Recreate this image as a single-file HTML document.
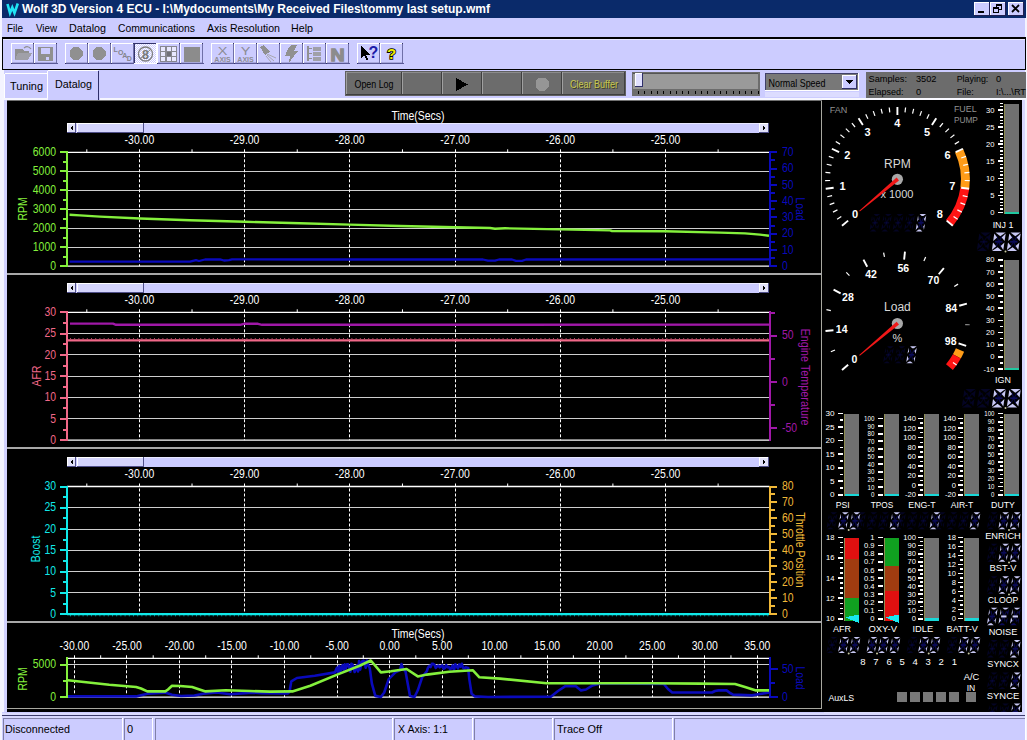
<!DOCTYPE html>
<html><head><meta charset="utf-8"><title>Wolf 3D Version 4 ECU</title>
<style>
html,body{margin:0;padding:0;background:#ccccff;overflow:hidden}
svg{display:block;font-family:'Liberation Sans', sans-serif;}
svg rect,svg polygon{shape-rendering:crispEdges}
svg .aa{shape-rendering:auto}
</style></head><body>
<svg width="1027" height="740" viewBox="0 0 1027 740">
<rect x="0" y="0" width="1027" height="740" fill="#ccccff" />
<rect x="0" y="0" width="2" height="740" fill="#f4f4ff" />
<rect x="1025" y="0" width="2" height="740" fill="#f4f4ff" />
<rect x="2" y="0" width="1024" height="18" fill="#0a2a6a" />
<path d="M7.5 4 L10 13 L12.3 7.5 L14.5 13 L17.8 3.5" fill="none" stroke="#20e4f4" stroke-width="2.6" stroke-linejoin="miter"/>
<text transform="translate(22,13)" font-size="12.5" fill="#fff" text-anchor="start" font-weight="bold" textLength="468" lengthAdjust="spacingAndGlyphs">Wolf 3D Version 4 ECU - I:\Mydocuments\My Received Files\tommy last setup.wmf</text>
<rect x="974" y="2" width="16" height="14" fill="#ccccff" />
<rect x="974" y="2" width="16" height="1" fill="#ffffff" />
<rect x="974" y="2" width="1" height="14" fill="#ffffff" />
<rect x="974" y="15" width="16" height="1" fill="#202050" />
<rect x="989" y="2" width="1" height="14" fill="#202050" />
<rect x="990" y="2" width="16" height="14" fill="#ccccff" />
<rect x="990" y="2" width="16" height="1" fill="#ffffff" />
<rect x="990" y="2" width="1" height="14" fill="#ffffff" />
<rect x="990" y="15" width="16" height="1" fill="#202050" />
<rect x="1005" y="2" width="1" height="14" fill="#202050" />
<rect x="1008" y="2" width="16" height="14" fill="#ccccff" />
<rect x="1008" y="2" width="16" height="1" fill="#ffffff" />
<rect x="1008" y="2" width="1" height="14" fill="#ffffff" />
<rect x="1008" y="15" width="16" height="1" fill="#202050" />
<rect x="1023" y="2" width="1" height="14" fill="#202050" />
<rect x="978" y="11" width="6" height="2" fill="#000" />
<rect x="996" y="4" width="6" height="2" fill="#000" />
<rect x="996" y="4" width="1" height="5" fill="#000" />
<rect x="1001" y="4" width="1" height="6" fill="#000" />
<rect x="999" y="9" width="3" height="1" fill="#000" />
<rect x="993" y="7" width="6" height="2" fill="#000" />
<rect x="993" y="7" width="1" height="6" fill="#000" />
<rect x="998" y="7" width="1" height="6" fill="#000" />
<rect x="993" y="12" width="6" height="1" fill="#000" />
<path d="M1012 5 L1019 12 M1019 5 L1012 12" fill="none" stroke="#000" stroke-width="1.8" />
<text transform="translate(7,32)" font-size="11" fill="#000" text-anchor="start" textLength="16" lengthAdjust="spacingAndGlyphs">File</text>
<text transform="translate(36,32)" font-size="11" fill="#000" text-anchor="start" textLength="21" lengthAdjust="spacingAndGlyphs">View</text>
<text transform="translate(69,32)" font-size="11" fill="#000" text-anchor="start" textLength="37" lengthAdjust="spacingAndGlyphs">Datalog</text>
<text transform="translate(118,32)" font-size="11" fill="#000" text-anchor="start" textLength="77" lengthAdjust="spacingAndGlyphs">Communications</text>
<text transform="translate(207,32)" font-size="11" fill="#000" text-anchor="start" textLength="73" lengthAdjust="spacingAndGlyphs">Axis Resolution</text>
<text transform="translate(291,32)" font-size="11" fill="#000" text-anchor="start" textLength="22" lengthAdjust="spacingAndGlyphs">Help</text>
<rect x="2" y="37" width="1024" height="33" fill="#000" />
<rect x="3" y="39" width="1022" height="30" fill="#ccccff" />
<rect x="3" y="39" width="1022" height="1" fill="#e8e8ff" />
<rect x="11" y="43" width="23" height="21" fill="#ccccff" />
<rect x="11" y="43" width="23" height="1" fill="#ffffff" />
<rect x="11" y="43" width="1" height="21" fill="#ffffff" />
<rect x="11" y="63" width="23" height="1" fill="#33336b" />
<rect x="33" y="43" width="1" height="21" fill="#33336b" />
<rect x="12" y="63" width="23" height="1" fill="#5a5a98" />
<rect x="33" y="44" width="1" height="19" fill="#7070a8" />
<rect x="12" y="62" width="21" height="1" fill="#a8a8dc" />
<rect x="34" y="43" width="23" height="21" fill="#ccccff" />
<rect x="34" y="43" width="23" height="1" fill="#ffffff" />
<rect x="34" y="43" width="1" height="21" fill="#ffffff" />
<rect x="34" y="63" width="23" height="1" fill="#33336b" />
<rect x="56" y="43" width="1" height="21" fill="#33336b" />
<rect x="35" y="63" width="23" height="1" fill="#5a5a98" />
<rect x="56" y="44" width="1" height="19" fill="#7070a8" />
<rect x="35" y="62" width="21" height="1" fill="#a8a8dc" />
<rect x="65" y="43" width="23" height="21" fill="#ccccff" />
<rect x="65" y="43" width="23" height="1" fill="#ffffff" />
<rect x="65" y="43" width="1" height="21" fill="#ffffff" />
<rect x="65" y="63" width="23" height="1" fill="#33336b" />
<rect x="87" y="43" width="1" height="21" fill="#33336b" />
<rect x="66" y="63" width="23" height="1" fill="#5a5a98" />
<rect x="87" y="44" width="1" height="19" fill="#7070a8" />
<rect x="66" y="62" width="21" height="1" fill="#a8a8dc" />
<rect x="88" y="43" width="23" height="21" fill="#ccccff" />
<rect x="88" y="43" width="23" height="1" fill="#ffffff" />
<rect x="88" y="43" width="1" height="21" fill="#ffffff" />
<rect x="88" y="63" width="23" height="1" fill="#33336b" />
<rect x="110" y="43" width="1" height="21" fill="#33336b" />
<rect x="89" y="63" width="23" height="1" fill="#5a5a98" />
<rect x="110" y="44" width="1" height="19" fill="#7070a8" />
<rect x="89" y="62" width="21" height="1" fill="#a8a8dc" />
<rect x="111" y="43" width="23" height="21" fill="#ccccff" />
<rect x="111" y="43" width="23" height="1" fill="#ffffff" />
<rect x="111" y="43" width="1" height="21" fill="#ffffff" />
<rect x="111" y="63" width="23" height="1" fill="#33336b" />
<rect x="133" y="43" width="1" height="21" fill="#33336b" />
<rect x="112" y="63" width="23" height="1" fill="#5a5a98" />
<rect x="133" y="44" width="1" height="19" fill="#7070a8" />
<rect x="112" y="62" width="21" height="1" fill="#a8a8dc" />
<pattern id="chk" width="2" height="2" patternUnits="userSpaceOnUse"><rect width="2" height="2" fill="#ccccff"/><rect width="1" height="1" fill="#fff"/><rect x="1" y="1" width="1" height="1" fill="#fff"/></pattern>
<rect x="134" y="43" width="23" height="21" fill="url(#chk)" />
<rect x="134" y="43" width="23" height="1" fill="#33336b" />
<rect x="134" y="43" width="1" height="21" fill="#33336b" />
<rect x="134" y="63" width="23" height="1" fill="#ffffff" />
<rect x="156" y="43" width="1" height="21" fill="#ffffff" />
<rect x="157" y="43" width="23" height="21" fill="#ccccff" />
<rect x="157" y="43" width="23" height="1" fill="#ffffff" />
<rect x="157" y="43" width="1" height="21" fill="#ffffff" />
<rect x="157" y="63" width="23" height="1" fill="#33336b" />
<rect x="179" y="43" width="1" height="21" fill="#33336b" />
<rect x="158" y="63" width="23" height="1" fill="#5a5a98" />
<rect x="179" y="44" width="1" height="19" fill="#7070a8" />
<rect x="158" y="62" width="21" height="1" fill="#a8a8dc" />
<rect x="180" y="43" width="23" height="21" fill="#ccccff" />
<rect x="180" y="43" width="23" height="1" fill="#ffffff" />
<rect x="180" y="43" width="1" height="21" fill="#ffffff" />
<rect x="180" y="63" width="23" height="1" fill="#33336b" />
<rect x="202" y="43" width="1" height="21" fill="#33336b" />
<rect x="181" y="63" width="23" height="1" fill="#5a5a98" />
<rect x="202" y="44" width="1" height="19" fill="#7070a8" />
<rect x="181" y="62" width="21" height="1" fill="#a8a8dc" />
<rect x="211" y="43" width="23" height="21" fill="#ccccff" />
<rect x="211" y="43" width="23" height="1" fill="#ffffff" />
<rect x="211" y="43" width="1" height="21" fill="#ffffff" />
<rect x="211" y="63" width="23" height="1" fill="#33336b" />
<rect x="233" y="43" width="1" height="21" fill="#33336b" />
<rect x="212" y="63" width="23" height="1" fill="#5a5a98" />
<rect x="233" y="44" width="1" height="19" fill="#7070a8" />
<rect x="212" y="62" width="21" height="1" fill="#a8a8dc" />
<rect x="234" y="43" width="23" height="21" fill="#ccccff" />
<rect x="234" y="43" width="23" height="1" fill="#ffffff" />
<rect x="234" y="43" width="1" height="21" fill="#ffffff" />
<rect x="234" y="63" width="23" height="1" fill="#33336b" />
<rect x="256" y="43" width="1" height="21" fill="#33336b" />
<rect x="235" y="63" width="23" height="1" fill="#5a5a98" />
<rect x="256" y="44" width="1" height="19" fill="#7070a8" />
<rect x="235" y="62" width="21" height="1" fill="#a8a8dc" />
<rect x="257" y="43" width="23" height="21" fill="#ccccff" />
<rect x="257" y="43" width="23" height="1" fill="#ffffff" />
<rect x="257" y="43" width="1" height="21" fill="#ffffff" />
<rect x="257" y="63" width="23" height="1" fill="#33336b" />
<rect x="279" y="43" width="1" height="21" fill="#33336b" />
<rect x="258" y="63" width="23" height="1" fill="#5a5a98" />
<rect x="279" y="44" width="1" height="19" fill="#7070a8" />
<rect x="258" y="62" width="21" height="1" fill="#a8a8dc" />
<rect x="280" y="43" width="23" height="21" fill="#ccccff" />
<rect x="280" y="43" width="23" height="1" fill="#ffffff" />
<rect x="280" y="43" width="1" height="21" fill="#ffffff" />
<rect x="280" y="63" width="23" height="1" fill="#33336b" />
<rect x="302" y="43" width="1" height="21" fill="#33336b" />
<rect x="281" y="63" width="23" height="1" fill="#5a5a98" />
<rect x="302" y="44" width="1" height="19" fill="#7070a8" />
<rect x="281" y="62" width="21" height="1" fill="#a8a8dc" />
<rect x="303" y="43" width="23" height="21" fill="#ccccff" />
<rect x="303" y="43" width="23" height="1" fill="#ffffff" />
<rect x="303" y="43" width="1" height="21" fill="#ffffff" />
<rect x="303" y="63" width="23" height="1" fill="#33336b" />
<rect x="325" y="43" width="1" height="21" fill="#33336b" />
<rect x="304" y="63" width="23" height="1" fill="#5a5a98" />
<rect x="325" y="44" width="1" height="19" fill="#7070a8" />
<rect x="304" y="62" width="21" height="1" fill="#a8a8dc" />
<rect x="326" y="43" width="23" height="21" fill="#ccccff" />
<rect x="326" y="43" width="23" height="1" fill="#ffffff" />
<rect x="326" y="43" width="1" height="21" fill="#ffffff" />
<rect x="326" y="63" width="23" height="1" fill="#33336b" />
<rect x="348" y="43" width="1" height="21" fill="#33336b" />
<rect x="327" y="63" width="23" height="1" fill="#5a5a98" />
<rect x="348" y="44" width="1" height="19" fill="#7070a8" />
<rect x="327" y="62" width="21" height="1" fill="#a8a8dc" />
<rect x="357" y="43" width="23" height="21" fill="#ccccff" />
<rect x="357" y="43" width="23" height="1" fill="#ffffff" />
<rect x="357" y="43" width="1" height="21" fill="#ffffff" />
<rect x="357" y="63" width="23" height="1" fill="#33336b" />
<rect x="379" y="43" width="1" height="21" fill="#33336b" />
<rect x="358" y="63" width="23" height="1" fill="#5a5a98" />
<rect x="379" y="44" width="1" height="19" fill="#7070a8" />
<rect x="358" y="62" width="21" height="1" fill="#a8a8dc" />
<rect x="380" y="43" width="23" height="21" fill="#ccccff" />
<rect x="380" y="43" width="23" height="1" fill="#ffffff" />
<rect x="380" y="43" width="1" height="21" fill="#ffffff" />
<rect x="380" y="63" width="23" height="1" fill="#33336b" />
<rect x="402" y="43" width="1" height="21" fill="#33336b" />
<rect x="381" y="63" width="23" height="1" fill="#5a5a98" />
<rect x="402" y="44" width="1" height="19" fill="#7070a8" />
<rect x="381" y="62" width="21" height="1" fill="#a8a8dc" />
<polygon points="15.0,49.0 22.0,49.0 24.0,51.0 29.0,51.0 29.0,59.0 15.0,59.0" fill="#909090" />
<polygon points="18.0,53.0 32.0,53.0 28.0,60.0 15.0,60.0" fill="#a0a0a8" />
<path d="M24 48 Q28 45 31 49" fill="none" stroke="#909090" stroke-width="1.2" />
<rect x="38" y="47" width="15" height="14" fill="#909090" />
<rect x="41" y="48" width="9" height="6" fill="#ccccff" />
<rect x="46" y="57" width="3" height="3" fill="#ccccff" />
<polygon points="82.5,56.2 78.7,60.0 73.3,60.0 69.5,56.2 69.5,50.8 73.3,47.0 78.7,47.0 82.5,50.8" fill="#909090" />
<polygon points="105.5,56.2 101.7,60.0 96.3,60.0 92.5,56.2 92.5,50.8 96.3,47.0 101.7,47.0 105.5,50.8" fill="#909090" />
<text transform="translate(113.5,51.5)" font-size="7" fill="#84848c" text-anchor="start" font-weight="bold" >L</text>
<text transform="translate(117.9,54.7)" font-size="7" fill="#84848c" text-anchor="start" font-weight="bold" >O</text>
<text transform="translate(122.3,57.9)" font-size="7" fill="#84848c" text-anchor="start" font-weight="bold" >A</text>
<text transform="translate(126.7,61.1)" font-size="7" fill="#84848c" text-anchor="start" font-weight="bold" >D</text>
<circle cx="145.5" cy="54" r="7" fill="none" stroke="#808080" stroke-width="1.3"/>
<text transform="translate(145.5,58.5)" font-size="12.5" fill="#787878" text-anchor="middle" font-weight="bold" >8</text>
<line x1="140" y1="59" x2="151" y2="49" stroke="#808080" stroke-width="1" />
<rect x="160" y="46" width="17" height="16" fill="#888890" />
<rect x="161" y="47" width="4" height="4" fill="#e8e8ff" />
<rect x="161" y="52" width="4" height="4" fill="#e8e8ff" />
<rect x="161" y="57" width="4" height="4" fill="#e8e8ff" />
<rect x="166.5" y="47" width="4" height="4" fill="#e8e8ff" />
<rect x="166.5" y="52" width="4" height="4" fill="#e8e8ff" />
<rect x="166.5" y="57" width="4" height="4" fill="#e8e8ff" />
<rect x="172" y="47" width="4" height="4" fill="#e8e8ff" />
<rect x="172" y="52" width="4" height="4" fill="#e8e8ff" />
<rect x="172" y="57" width="4" height="4" fill="#e8e8ff" />
<rect x="166.5" y="52" width="4" height="4" fill="#707078" />
<rect x="184" y="47" width="16" height="15" fill="#8c8c8c" />
<text transform="translate(222.5,54.5) scale(1.45,1)" font-size="10" fill="#8c8c94" text-anchor="middle" >X</text>
<text transform="translate(222.5,62)" font-size="7" fill="#8c8c94" text-anchor="middle" font-weight="bold" >AXIS</text>
<text transform="translate(245.5,54.5) scale(1.45,1)" font-size="10" fill="#8c8c94" text-anchor="middle" >Y</text>
<text transform="translate(245.5,62)" font-size="7" fill="#8c8c94" text-anchor="middle" font-weight="bold" >AXIS</text>
<polygon points="260.0,47.0 264.0,45.0 270.0,52.0 265.0,55.0" fill="#909090" />
<path d="M267 54 L276 58 M267 55 L274 61 M266 56 L271 62" fill="none" stroke="#a8a8b0" stroke-width="1" />
<polygon points="291.0,45.0 297.0,45.0 294.0,51.0 298.0,51.0 289.0,62.5 290.0,56.0 285.0,56.0 288.0,49.0" fill="#909090" />
<rect x="307" y="46" width="1.5" height="15" fill="#909090" />
<rect x="308" y="48" width="4" height="1.2" fill="#909090" />
<rect x="313" y="47" width="8" height="3.5" fill="#a0a0a8" />
<rect x="308" y="53" width="4" height="1.2" fill="#909090" />
<rect x="313" y="52" width="8" height="3.5" fill="#a0a0a8" />
<rect x="308" y="58" width="4" height="1.2" fill="#909090" />
<rect x="313" y="57" width="8" height="3.5" fill="#a0a0a8" />
<text transform="translate(337.5,61) scale(1.15,1)" font-size="17" fill="#8c8c8c" text-anchor="middle" font-weight="bold" stroke="#8c8c8c" stroke-width="1.3">N</text>
<polygon points="361.0,46.0 361.0,58.0 364.0,55.5 366.5,60.5 368.5,59.5 366.0,55.0 370.0,55.0" fill="#000" />
<text transform="translate(373.5,58)" font-size="16" fill="#1c1ca8" text-anchor="middle" font-weight="bold" >?</text>
<text transform="translate(391.5,59)" font-size="15" fill="#000" text-anchor="middle" font-weight="bold" stroke="#000" stroke-width="1.6">?</text>
<text transform="translate(391.5,59)" font-size="15" fill="#f0f000" text-anchor="middle" font-weight="bold" >?</text>
<rect x="2" y="70" width="1.5" height="30" fill="#f4f4ff" />
<rect x="4" y="73" width="44" height="25" fill="#ccccff" />
<rect x="4" y="74" width="1" height="24" fill="#fff" />
<rect x="5" y="73" width="42" height="1" fill="#fff" />
<text transform="translate(10,90)" font-size="11" fill="#000" text-anchor="start" textLength="33" lengthAdjust="spacingAndGlyphs">Tuning</text>
<rect x="47" y="70" width="53" height="30" fill="#ccccff" />
<rect x="47" y="71" width="1" height="28" fill="#fff" />
<rect x="48" y="70" width="50" height="1" fill="#fff" />
<rect x="98" y="71" width="1.4" height="28" fill="#30306a" />
<text transform="translate(55,88)" font-size="11" fill="#000" text-anchor="start" textLength="37" lengthAdjust="spacingAndGlyphs">Datalog</text>
<rect x="2" y="98" width="45" height="1" fill="#fff" />
<rect x="345" y="71" width="281" height="25" fill="#606060" />
<rect x="346" y="72" width="56" height="23" fill="#6c6c6c" />
<rect x="346" y="72" width="56" height="1" fill="#8c8c8c" />
<rect x="346" y="72" width="1" height="23" fill="#a0a0a0" />
<rect x="401" y="72" width="1" height="23" fill="#404040" />
<rect x="346" y="94" width="56" height="1" fill="#404040" />
<rect x="402" y="72" width="40" height="23" fill="#6c6c6c" />
<rect x="402" y="72" width="40" height="1" fill="#8c8c8c" />
<rect x="402" y="72" width="1" height="23" fill="#a0a0a0" />
<rect x="441" y="72" width="1" height="23" fill="#404040" />
<rect x="402" y="94" width="40" height="1" fill="#404040" />
<rect x="442" y="72" width="40" height="23" fill="#6c6c6c" />
<rect x="442" y="72" width="40" height="1" fill="#8c8c8c" />
<rect x="442" y="72" width="1" height="23" fill="#a0a0a0" />
<rect x="481" y="72" width="1" height="23" fill="#404040" />
<rect x="442" y="94" width="40" height="1" fill="#404040" />
<rect x="482" y="72" width="40" height="23" fill="#6c6c6c" />
<rect x="482" y="72" width="40" height="1" fill="#8c8c8c" />
<rect x="482" y="72" width="1" height="23" fill="#a0a0a0" />
<rect x="521" y="72" width="1" height="23" fill="#404040" />
<rect x="482" y="94" width="40" height="1" fill="#404040" />
<rect x="522" y="72" width="40" height="23" fill="#6c6c6c" />
<rect x="522" y="72" width="40" height="1" fill="#8c8c8c" />
<rect x="522" y="72" width="1" height="23" fill="#a0a0a0" />
<rect x="561" y="72" width="1" height="23" fill="#404040" />
<rect x="522" y="94" width="40" height="1" fill="#404040" />
<rect x="562" y="72" width="63" height="23" fill="#6c6c6c" />
<rect x="562" y="72" width="63" height="1" fill="#8c8c8c" />
<rect x="562" y="72" width="1" height="23" fill="#a0a0a0" />
<rect x="624" y="72" width="1" height="23" fill="#404040" />
<rect x="562" y="94" width="63" height="1" fill="#404040" />
<text transform="translate(374,88)" font-size="10.5" fill="#000" text-anchor="middle" textLength="39" lengthAdjust="spacingAndGlyphs">Open Log</text>
<polygon points="456.0,78.0 456.0,91.0 468.0,84.5" fill="#000" />
<polygon points="548.5,86.7 544.7,90.5 539.3,90.5 535.5,86.7 535.5,81.3 539.3,77.5 544.7,77.5 548.5,81.3" fill="#969696" />
<text transform="translate(595,89)" font-size="10.5" fill="#3a3a20" text-anchor="middle" textLength="48" lengthAdjust="spacingAndGlyphs">Clear Buffer</text>
<text transform="translate(594,88)" font-size="10.5" fill="#c8c850" text-anchor="middle" textLength="48" lengthAdjust="spacingAndGlyphs">Clear Buffer</text>
<rect x="632" y="72" width="128" height="24" fill="#6c6c6c" />
<rect x="633" y="73" width="125" height="16" fill="#9a9a9a" />
<rect x="633" y="73" width="125" height="1" fill="#555" />
<rect x="638" y="91" width="1" height="3" fill="#000" />
<rect x="644.3" y="91" width="1" height="3" fill="#000" />
<rect x="650.6" y="91" width="1" height="3" fill="#000" />
<rect x="656.9" y="91" width="1" height="3" fill="#000" />
<rect x="663.2" y="91" width="1" height="3" fill="#000" />
<rect x="669.5" y="91" width="1" height="3" fill="#000" />
<rect x="675.8" y="91" width="1" height="3" fill="#000" />
<rect x="682.1" y="91" width="1" height="3" fill="#000" />
<rect x="688.4" y="91" width="1" height="3" fill="#000" />
<rect x="694.7" y="91" width="1" height="3" fill="#000" />
<rect x="701" y="91" width="1" height="3" fill="#000" />
<rect x="707.3" y="91" width="1" height="3" fill="#000" />
<rect x="713.6" y="91" width="1" height="3" fill="#000" />
<rect x="719.9" y="91" width="1" height="3" fill="#000" />
<rect x="726.2" y="91" width="1" height="3" fill="#000" />
<rect x="732.5" y="91" width="1" height="3" fill="#000" />
<rect x="738.8" y="91" width="1" height="3" fill="#000" />
<rect x="745.1" y="91" width="1" height="3" fill="#000" />
<rect x="751.4" y="91" width="1" height="3" fill="#000" />
<rect x="757.7" y="91" width="1" height="3" fill="#000" />
<rect x="635" y="73" width="8" height="14" fill="#e0e0ff" />
<rect x="635" y="73" width="8" height="1" fill="#ffffff" />
<rect x="635" y="73" width="1" height="14" fill="#ffffff" />
<rect x="635" y="86" width="8" height="1" fill="#30306a" />
<rect x="642" y="73" width="1" height="14" fill="#30306a" />
<rect x="765" y="73" width="94" height="18" fill="#fff" />
<rect x="765" y="73" width="93" height="17" fill="#40406a" />
<rect x="766" y="74" width="92" height="16" fill="#787878" />
<text transform="translate(768.5,86.5)" font-size="11" fill="#000" text-anchor="start" textLength="57" lengthAdjust="spacingAndGlyphs">Normal Speed</text>
<rect x="842" y="75" width="15" height="14" fill="#ccccff" />
<rect x="842" y="75" width="15" height="1" fill="#ffffff" />
<rect x="842" y="75" width="1" height="14" fill="#ffffff" />
<rect x="842" y="88" width="15" height="1" fill="#30306a" />
<rect x="856" y="75" width="1" height="14" fill="#30306a" />
<polygon points="846.0,80.0 853.0,80.0 849.5,84.0" fill="#000" />
<rect x="765" y="92" width="94" height="5" fill="#dcdcff" />
<rect x="866" y="72" width="160" height="26" fill="#6c6c6c" />
<text transform="translate(868.5,82)" font-size="9.3" fill="#000" text-anchor="start" textLength="38.5" lengthAdjust="spacingAndGlyphs">Samples:</text>
<text transform="translate(916,82)" font-size="9.3" fill="#000" text-anchor="start" textLength="20.5" lengthAdjust="spacingAndGlyphs">3502</text>
<text transform="translate(956.7,82)" font-size="9.3" fill="#000" text-anchor="start" textLength="31.6" lengthAdjust="spacingAndGlyphs">Playing:</text>
<text transform="translate(996,82)" font-size="9.3" fill="#000" text-anchor="start" >0</text>
<text transform="translate(868.5,94.5)" font-size="9.3" fill="#000" text-anchor="start" textLength="35" lengthAdjust="spacingAndGlyphs">Elapsed:</text>
<text transform="translate(916,94.5)" font-size="9.3" fill="#000" text-anchor="start" >0</text>
<text transform="translate(956.7,94.5)" font-size="9.3" fill="#000" text-anchor="start" textLength="17" lengthAdjust="spacingAndGlyphs">File:</text>
<text transform="translate(996,94.5)" font-size="9.3" fill="#000" text-anchor="start" textLength="30" lengthAdjust="spacingAndGlyphs">I:\...\RT</text>
<rect x="2" y="712" width="1023" height="3" fill="#dcdcff" />
<rect x="2" y="715" width="1023" height="1" fill="#3a3a6a" />
<rect x="2" y="716" width="1023" height="2" fill="#d8d8ff" />
<rect x="3" y="718" width="119" height="22" fill="#ccccff" />
<rect x="3" y="718" width="119" height="1" fill="#8080a8" />
<rect x="3" y="718" width="1" height="22" fill="#8080a8" />
<rect x="122" y="718" width="1" height="22" fill="#fff" />
<rect x="124" y="718" width="28" height="22" fill="#ccccff" />
<rect x="124" y="718" width="28" height="1" fill="#8080a8" />
<rect x="124" y="718" width="1" height="22" fill="#8080a8" />
<rect x="152" y="718" width="1" height="22" fill="#fff" />
<rect x="155" y="718" width="237" height="22" fill="#ccccff" />
<rect x="155" y="718" width="237" height="1" fill="#8080a8" />
<rect x="155" y="718" width="1" height="22" fill="#8080a8" />
<rect x="392" y="718" width="1" height="22" fill="#fff" />
<rect x="394" y="718" width="78" height="22" fill="#ccccff" />
<rect x="394" y="718" width="78" height="1" fill="#8080a8" />
<rect x="394" y="718" width="1" height="22" fill="#8080a8" />
<rect x="472" y="718" width="1" height="22" fill="#fff" />
<rect x="474" y="718" width="78" height="22" fill="#ccccff" />
<rect x="474" y="718" width="78" height="1" fill="#8080a8" />
<rect x="474" y="718" width="1" height="22" fill="#8080a8" />
<rect x="552" y="718" width="1" height="22" fill="#fff" />
<rect x="554" y="718" width="118" height="22" fill="#ccccff" />
<rect x="554" y="718" width="118" height="1" fill="#8080a8" />
<rect x="554" y="718" width="1" height="22" fill="#8080a8" />
<rect x="672" y="718" width="1" height="22" fill="#fff" />
<rect x="674" y="718" width="351" height="22" fill="#ccccff" />
<rect x="674" y="718" width="351" height="1" fill="#8080a8" />
<rect x="674" y="718" width="1" height="22" fill="#8080a8" />
<rect x="1025" y="718" width="1" height="22" fill="#fff" />
<text transform="translate(5,733)" font-size="11" fill="#000" text-anchor="start" textLength="65" lengthAdjust="spacingAndGlyphs">Disconnected</text>
<text transform="translate(127,733)" font-size="11" fill="#000" text-anchor="start" >0</text>
<text transform="translate(398,733)" font-size="11" fill="#000" text-anchor="start" textLength="50" lengthAdjust="spacingAndGlyphs">X Axis: 1:1</text>
<text transform="translate(557,733)" font-size="11" fill="#000" text-anchor="start" textLength="45" lengthAdjust="spacingAndGlyphs">Trace Off</text>
<rect x="2" y="98" width="822" height="615" fill="#ccccff" />
<rect x="2" y="98" width="1.5" height="614" fill="#f4f4ff" />
<rect x="3.5" y="98" width="3.5" height="614" fill="#d2d2ff" />
<rect x="2" y="98" width="46" height="2" fill="#f6f6ff" />
<rect x="99.5" y="98" width="723" height="2" fill="#f6f6ff" />
<rect x="98" y="98" width="1.4" height="2" fill="#30306a" />
<rect x="7" y="100" width="816" height="1" fill="#707070" />
<rect x="7" y="101" width="816" height="611" fill="#000" />
<rect x="821" y="101" width="1" height="608" fill="#a8a8a0" />
<rect x="7" y="708" width="815" height="1" fill="#a8a8a0" />
<rect x="7" y="273" width="815" height="2" fill="#a8a8a8" />
<rect x="7" y="447" width="815" height="2" fill="#a8a8a8" />
<rect x="7" y="621" width="815" height="2" fill="#a8a8a8" />
<text transform="translate(418,120) scale(0.87,1)" font-size="12" fill="#fff" text-anchor="middle" >Time(Secs)</text>
<rect x="67" y="123" width="702" height="10" fill="#ccccff" />
<rect x="67" y="123" width="702" height="1" fill="#e8e8ff" />
<rect x="67" y="123" width="9" height="10" fill="#e0e0f8" />
<rect x="67" y="123" width="9" height="1" fill="#ffffff" />
<rect x="67" y="123" width="1" height="10" fill="#ffffff" />
<rect x="67" y="132" width="9" height="1" fill="#50508a" />
<rect x="75" y="123" width="1" height="10" fill="#50508a" />
<polygon points="73.0,125.5 73.0,130.5 70.0,128.0" fill="#000" />
<rect x="77" y="123" width="67" height="10" fill="#d4d4fc" />
<rect x="77" y="123" width="67" height="1" fill="#ffffff" />
<rect x="77" y="123" width="1" height="10" fill="#ffffff" />
<rect x="77" y="132" width="67" height="1" fill="#50508a" />
<rect x="143" y="123" width="1" height="10" fill="#50508a" />
<rect x="759" y="123" width="10" height="10" fill="#e0e0f8" />
<rect x="759" y="123" width="10" height="1" fill="#ffffff" />
<rect x="759" y="123" width="1" height="10" fill="#ffffff" />
<rect x="759" y="132" width="10" height="1" fill="#50508a" />
<rect x="768" y="123" width="1" height="10" fill="#50508a" />
<polygon points="763.0,125.5 763.0,130.5 766.0,128.0" fill="#000" />
<line x1="67" y1="171.5" x2="769.5" y2="171.5" stroke="#cecece" stroke-width="1" />
<line x1="67" y1="190.5" x2="769.5" y2="190.5" stroke="#cecece" stroke-width="1" />
<line x1="67" y1="209.5" x2="769.5" y2="209.5" stroke="#cecece" stroke-width="1" />
<line x1="67" y1="228.5" x2="769.5" y2="228.5" stroke="#cecece" stroke-width="1" />
<line x1="67" y1="247.5" x2="769.5" y2="247.5" stroke="#cecece" stroke-width="1" />
<line x1="67" y1="152.3" x2="769.5" y2="152.3" stroke="#fff" stroke-width="1.3" />
<line x1="67" y1="266.2" x2="769.5" y2="266.2" stroke="#fff" stroke-width="1.3" />
<line x1="139.5" y1="149.3" x2="139.5" y2="266.2" stroke="#fff" stroke-width="1" stroke-dasharray="3 2"/>
<text transform="translate(139.4,144.3) scale(0.87,1)" font-size="12" fill="#fff" text-anchor="middle" >-30.00</text>
<line x1="244.5" y1="149.3" x2="244.5" y2="266.2" stroke="#fff" stroke-width="1" stroke-dasharray="3 2"/>
<text transform="translate(244.62,144.3) scale(0.87,1)" font-size="12" fill="#fff" text-anchor="middle" >-29.00</text>
<line x1="349.5" y1="149.3" x2="349.5" y2="266.2" stroke="#fff" stroke-width="1" stroke-dasharray="3 2"/>
<text transform="translate(349.84,144.3) scale(0.87,1)" font-size="12" fill="#fff" text-anchor="middle" >-28.00</text>
<line x1="455.5" y1="149.3" x2="455.5" y2="266.2" stroke="#fff" stroke-width="1" stroke-dasharray="3 2"/>
<text transform="translate(455.06,144.3) scale(0.87,1)" font-size="12" fill="#fff" text-anchor="middle" >-27.00</text>
<line x1="560.5" y1="149.3" x2="560.5" y2="266.2" stroke="#fff" stroke-width="1" stroke-dasharray="3 2"/>
<text transform="translate(560.28,144.3) scale(0.87,1)" font-size="12" fill="#fff" text-anchor="middle" >-26.00</text>
<line x1="665.5" y1="149.3" x2="665.5" y2="266.2" stroke="#fff" stroke-width="1" stroke-dasharray="3 2"/>
<text transform="translate(665.5,144.3) scale(0.87,1)" font-size="12" fill="#fff" text-anchor="middle" >-25.00</text>
<line x1="86.8" y1="149.3" x2="86.8" y2="152.3" stroke="#fff" stroke-width="1" />
<line x1="192.02" y1="149.3" x2="192.02" y2="152.3" stroke="#fff" stroke-width="1" />
<line x1="297.24" y1="149.3" x2="297.24" y2="152.3" stroke="#fff" stroke-width="1" />
<line x1="402.46" y1="149.3" x2="402.46" y2="152.3" stroke="#fff" stroke-width="1" />
<line x1="507.68" y1="149.3" x2="507.68" y2="152.3" stroke="#fff" stroke-width="1" />
<line x1="612.9" y1="149.3" x2="612.9" y2="152.3" stroke="#fff" stroke-width="1" />
<line x1="718.12" y1="149.3" x2="718.12" y2="152.3" stroke="#fff" stroke-width="1" />
<path d="M69.5 261.6 L190.0 261.6 L196.0 260.2 L199.0 261.0 L205.0 259.5 L220.0 259.3 L224.0 260.5 L229.0 260.2 L232.0 259.4 L300.0 259.5 L483.0 259.5 L488.0 260.6 L495.0 260.6 L499.0 259.5 L512.0 259.5 L516.0 260.8 L522.0 260.8 L526.0 259.5 L769.0 259.4" fill="none" stroke="#0a0abc" stroke-width="2.3" stroke-linejoin="round" />
<path d="M69.5 214.8 L80.0 215.4 L100.0 216.6 L140.0 218.5 L190.0 220.3 L245.0 221.8 L300.0 223.3 L349.5 224.6 L400.0 226.0 L455.0 227.3 L490.0 228.0 L495.0 228.8 L505.0 228.3 L560.0 229.4 L610.0 230.4 L612.0 231.0 L665.0 231.3 L720.0 232.6 L745.0 233.4 L760.0 234.6 L769.0 235.8" fill="none" stroke="#84f03c" stroke-width="2.4" stroke-linejoin="round" />
<rect x="66" y="151.3" width="2.4" height="115.4" fill="#84f03c" />
<rect x="60" y="151.3" width="7" height="2" fill="#84f03c" />
<text transform="translate(56,156) scale(0.87,1)" font-size="12" fill="#84f03c" text-anchor="end" >6000</text>
<rect x="60" y="170.3" width="7" height="2" fill="#84f03c" />
<text transform="translate(56,175) scale(0.87,1)" font-size="12" fill="#84f03c" text-anchor="end" >5000</text>
<rect x="60" y="189.3" width="7" height="2" fill="#84f03c" />
<text transform="translate(56,194) scale(0.87,1)" font-size="12" fill="#84f03c" text-anchor="end" >4000</text>
<rect x="60" y="208.3" width="7" height="2" fill="#84f03c" />
<text transform="translate(56,213) scale(0.87,1)" font-size="12" fill="#84f03c" text-anchor="end" >3000</text>
<rect x="60" y="227.3" width="7" height="2" fill="#84f03c" />
<text transform="translate(56,232) scale(0.87,1)" font-size="12" fill="#84f03c" text-anchor="end" >2000</text>
<rect x="60" y="246.3" width="7" height="2" fill="#84f03c" />
<text transform="translate(56,251) scale(0.87,1)" font-size="12" fill="#84f03c" text-anchor="end" >1000</text>
<rect x="60" y="265.3" width="7" height="2" fill="#84f03c" />
<text transform="translate(56,270) scale(0.87,1)" font-size="12" fill="#84f03c" text-anchor="end" >0</text>
<rect x="62.5" y="160.8" width="4.5" height="2" fill="#84f03c" />
<rect x="62.5" y="179.8" width="4.5" height="2" fill="#84f03c" />
<rect x="62.5" y="198.8" width="4.5" height="2" fill="#84f03c" />
<rect x="62.5" y="217.8" width="4.5" height="2" fill="#84f03c" />
<rect x="62.5" y="236.8" width="4.5" height="2" fill="#84f03c" />
<rect x="62.5" y="255.8" width="4.5" height="2" fill="#84f03c" />
<rect x="768.5" y="151.3" width="2.6" height="115.4" fill="#0a0abc" />
<rect x="769.5" y="151.3" width="7" height="2" fill="#0a0abc" />
<text transform="translate(782,156) scale(0.87,1)" font-size="12" fill="#0a0abc" text-anchor="start" >70</text>
<rect x="769.5" y="167.57" width="7" height="2" fill="#0a0abc" />
<text transform="translate(782,172.27) scale(0.87,1)" font-size="12" fill="#0a0abc" text-anchor="start" >60</text>
<rect x="769.5" y="183.84" width="7" height="2" fill="#0a0abc" />
<text transform="translate(782,188.54) scale(0.87,1)" font-size="12" fill="#0a0abc" text-anchor="start" >50</text>
<rect x="769.5" y="200.11" width="7" height="2" fill="#0a0abc" />
<text transform="translate(782,204.81) scale(0.87,1)" font-size="12" fill="#0a0abc" text-anchor="start" >40</text>
<rect x="769.5" y="216.38" width="7" height="2" fill="#0a0abc" />
<text transform="translate(782,221.08) scale(0.87,1)" font-size="12" fill="#0a0abc" text-anchor="start" >30</text>
<rect x="769.5" y="232.65" width="7" height="2" fill="#0a0abc" />
<text transform="translate(782,237.35) scale(0.87,1)" font-size="12" fill="#0a0abc" text-anchor="start" >20</text>
<rect x="769.5" y="248.92" width="7" height="2" fill="#0a0abc" />
<text transform="translate(782,253.62) scale(0.87,1)" font-size="12" fill="#0a0abc" text-anchor="start" >10</text>
<rect x="769.5" y="265.19" width="7" height="2" fill="#0a0abc" />
<text transform="translate(782,269.89) scale(0.87,1)" font-size="12" fill="#0a0abc" text-anchor="start" >0</text>
<rect x="769.5" y="159.435" width="5" height="2" fill="#0a0abc" />
<rect x="769.5" y="175.705" width="5" height="2" fill="#0a0abc" />
<rect x="769.5" y="191.975" width="5" height="2" fill="#0a0abc" />
<rect x="769.5" y="208.245" width="5" height="2" fill="#0a0abc" />
<rect x="769.5" y="224.515" width="5" height="2" fill="#0a0abc" />
<rect x="769.5" y="240.785" width="5" height="2" fill="#0a0abc" />
<rect x="769.5" y="257.055" width="5" height="2" fill="#0a0abc" />
<text transform="translate(27,209) rotate(-90) scale(0.87,1)" font-size="12" fill="#84f03c" text-anchor="middle" >RPM</text>
<text transform="translate(796,209) rotate(90) scale(0.87,1)" font-size="12" fill="#0a0abc" text-anchor="middle" >Load</text>
<rect x="67" y="283" width="702" height="10" fill="#ccccff" />
<rect x="67" y="283" width="702" height="1" fill="#e8e8ff" />
<rect x="67" y="283" width="9" height="10" fill="#e0e0f8" />
<rect x="67" y="283" width="9" height="1" fill="#ffffff" />
<rect x="67" y="283" width="1" height="10" fill="#ffffff" />
<rect x="67" y="292" width="9" height="1" fill="#50508a" />
<rect x="75" y="283" width="1" height="10" fill="#50508a" />
<polygon points="73.0,285.5 73.0,290.5 70.0,288.0" fill="#000" />
<rect x="77" y="283" width="67" height="10" fill="#d4d4fc" />
<rect x="77" y="283" width="67" height="1" fill="#ffffff" />
<rect x="77" y="283" width="1" height="10" fill="#ffffff" />
<rect x="77" y="292" width="67" height="1" fill="#50508a" />
<rect x="143" y="283" width="1" height="10" fill="#50508a" />
<rect x="759" y="283" width="10" height="10" fill="#e0e0f8" />
<rect x="759" y="283" width="10" height="1" fill="#ffffff" />
<rect x="759" y="283" width="1" height="10" fill="#ffffff" />
<rect x="759" y="292" width="10" height="1" fill="#50508a" />
<rect x="768" y="283" width="1" height="10" fill="#50508a" />
<polygon points="763.0,285.5 763.0,290.5 766.0,288.0" fill="#000" />
<line x1="67" y1="333.5" x2="769.5" y2="333.5" stroke="#cecece" stroke-width="1" />
<line x1="67" y1="354.5" x2="769.5" y2="354.5" stroke="#cecece" stroke-width="1" />
<line x1="67" y1="376.5" x2="769.5" y2="376.5" stroke="#cecece" stroke-width="1" />
<line x1="67" y1="397.5" x2="769.5" y2="397.5" stroke="#cecece" stroke-width="1" />
<line x1="67" y1="418.5" x2="769.5" y2="418.5" stroke="#cecece" stroke-width="1" />
<line x1="67" y1="312.3" x2="769.5" y2="312.3" stroke="#fff" stroke-width="1.3" />
<line x1="67" y1="440.2" x2="769.5" y2="440.2" stroke="#fff" stroke-width="1.3" />
<line x1="139.5" y1="309.3" x2="139.5" y2="440.2" stroke="#fff" stroke-width="1" stroke-dasharray="3 2"/>
<text transform="translate(139.4,304.3) scale(0.87,1)" font-size="12" fill="#fff" text-anchor="middle" >-30.00</text>
<line x1="244.5" y1="309.3" x2="244.5" y2="440.2" stroke="#fff" stroke-width="1" stroke-dasharray="3 2"/>
<text transform="translate(244.62,304.3) scale(0.87,1)" font-size="12" fill="#fff" text-anchor="middle" >-29.00</text>
<line x1="349.5" y1="309.3" x2="349.5" y2="440.2" stroke="#fff" stroke-width="1" stroke-dasharray="3 2"/>
<text transform="translate(349.84,304.3) scale(0.87,1)" font-size="12" fill="#fff" text-anchor="middle" >-28.00</text>
<line x1="455.5" y1="309.3" x2="455.5" y2="440.2" stroke="#fff" stroke-width="1" stroke-dasharray="3 2"/>
<text transform="translate(455.06,304.3) scale(0.87,1)" font-size="12" fill="#fff" text-anchor="middle" >-27.00</text>
<line x1="560.5" y1="309.3" x2="560.5" y2="440.2" stroke="#fff" stroke-width="1" stroke-dasharray="3 2"/>
<text transform="translate(560.28,304.3) scale(0.87,1)" font-size="12" fill="#fff" text-anchor="middle" >-26.00</text>
<line x1="665.5" y1="309.3" x2="665.5" y2="440.2" stroke="#fff" stroke-width="1" stroke-dasharray="3 2"/>
<text transform="translate(665.5,304.3) scale(0.87,1)" font-size="12" fill="#fff" text-anchor="middle" >-25.00</text>
<line x1="86.8" y1="309.3" x2="86.8" y2="312.3" stroke="#fff" stroke-width="1" />
<line x1="192.02" y1="309.3" x2="192.02" y2="312.3" stroke="#fff" stroke-width="1" />
<line x1="297.24" y1="309.3" x2="297.24" y2="312.3" stroke="#fff" stroke-width="1" />
<line x1="402.46" y1="309.3" x2="402.46" y2="312.3" stroke="#fff" stroke-width="1" />
<line x1="507.68" y1="309.3" x2="507.68" y2="312.3" stroke="#fff" stroke-width="1" />
<line x1="612.9" y1="309.3" x2="612.9" y2="312.3" stroke="#fff" stroke-width="1" />
<line x1="718.12" y1="309.3" x2="718.12" y2="312.3" stroke="#fff" stroke-width="1" />
<path d="M70.0 323.6 L113.0 323.6 L116.0 324.8 L240.0 324.8 L244.0 323.8 L258.0 323.8 L262.0 324.8 L769.0 324.6" fill="none" stroke="#a018a8" stroke-width="2.4" stroke-linejoin="round" />
<line x1="67" y1="340.3" x2="769" y2="340.3" stroke="#f06888" stroke-width="2.2" />
<line x1="70" y1="338.6" x2="769" y2="338.6" stroke="#f06888" stroke-width="1" stroke-dasharray="1 3.2" opacity="0.8"/>
<rect x="66" y="311.3" width="2.4" height="129.4" fill="#f06888" />
<rect x="60" y="311.3" width="7" height="2" fill="#f06888" />
<text transform="translate(56,316) scale(0.87,1)" font-size="12" fill="#f06888" text-anchor="end" >30</text>
<rect x="60" y="332.62" width="7" height="2" fill="#f06888" />
<text transform="translate(56,337.32) scale(0.87,1)" font-size="12" fill="#f06888" text-anchor="end" >25</text>
<rect x="60" y="353.94" width="7" height="2" fill="#f06888" />
<text transform="translate(56,358.64) scale(0.87,1)" font-size="12" fill="#f06888" text-anchor="end" >20</text>
<rect x="60" y="375.26" width="7" height="2" fill="#f06888" />
<text transform="translate(56,379.96) scale(0.87,1)" font-size="12" fill="#f06888" text-anchor="end" >15</text>
<rect x="60" y="396.58" width="7" height="2" fill="#f06888" />
<text transform="translate(56,401.28) scale(0.87,1)" font-size="12" fill="#f06888" text-anchor="end" >10</text>
<rect x="60" y="417.9" width="7" height="2" fill="#f06888" />
<text transform="translate(56,422.6) scale(0.87,1)" font-size="12" fill="#f06888" text-anchor="end" >5</text>
<rect x="60" y="439.22" width="7" height="2" fill="#f06888" />
<text transform="translate(56,443.92) scale(0.87,1)" font-size="12" fill="#f06888" text-anchor="end" >0</text>
<rect x="62.5" y="321.96" width="4.5" height="2" fill="#f06888" />
<rect x="62.5" y="343.28" width="4.5" height="2" fill="#f06888" />
<rect x="62.5" y="364.6" width="4.5" height="2" fill="#f06888" />
<rect x="62.5" y="385.92" width="4.5" height="2" fill="#f06888" />
<rect x="62.5" y="407.24" width="4.5" height="2" fill="#f06888" />
<rect x="62.5" y="428.56" width="4.5" height="2" fill="#f06888" />
<rect x="768.5" y="311.3" width="2.6" height="129.4" fill="#a018a8" />
<rect x="769.5" y="334.7" width="7" height="2" fill="#a018a8" />
<text transform="translate(782,339.4) scale(0.87,1)" font-size="12" fill="#a018a8" text-anchor="start" >50</text>
<rect x="769.5" y="380.8" width="7" height="2" fill="#a018a8" />
<text transform="translate(782,385.5) scale(0.87,1)" font-size="12" fill="#a018a8" text-anchor="start" >0</text>
<rect x="769.5" y="426.9" width="7" height="2" fill="#a018a8" />
<text transform="translate(782,431.6) scale(0.87,1)" font-size="12" fill="#a018a8" text-anchor="start" >-50</text>
<rect x="769.5" y="311.7" width="5" height="2" fill="#a018a8" />
<rect x="769.5" y="357.7" width="5" height="2" fill="#a018a8" />
<rect x="769.5" y="403.8" width="5" height="2" fill="#a018a8" />
<text transform="translate(41,376) rotate(-90) scale(0.87,1)" font-size="12" fill="#f06888" text-anchor="middle" >AFR</text>
<text transform="translate(801,377) rotate(90) scale(0.9,1)" font-size="12" fill="#a018a8" text-anchor="middle" >Engine Temperature</text>
<rect x="67" y="457" width="702" height="10" fill="#ccccff" />
<rect x="67" y="457" width="702" height="1" fill="#e8e8ff" />
<rect x="67" y="457" width="9" height="10" fill="#e0e0f8" />
<rect x="67" y="457" width="9" height="1" fill="#ffffff" />
<rect x="67" y="457" width="1" height="10" fill="#ffffff" />
<rect x="67" y="466" width="9" height="1" fill="#50508a" />
<rect x="75" y="457" width="1" height="10" fill="#50508a" />
<polygon points="73.0,459.5 73.0,464.5 70.0,462.0" fill="#000" />
<rect x="77" y="457" width="67" height="10" fill="#d4d4fc" />
<rect x="77" y="457" width="67" height="1" fill="#ffffff" />
<rect x="77" y="457" width="1" height="10" fill="#ffffff" />
<rect x="77" y="466" width="67" height="1" fill="#50508a" />
<rect x="143" y="457" width="1" height="10" fill="#50508a" />
<rect x="759" y="457" width="10" height="10" fill="#e0e0f8" />
<rect x="759" y="457" width="10" height="1" fill="#ffffff" />
<rect x="759" y="457" width="1" height="10" fill="#ffffff" />
<rect x="759" y="466" width="10" height="1" fill="#50508a" />
<rect x="768" y="457" width="1" height="10" fill="#50508a" />
<polygon points="763.0,459.5 763.0,464.5 766.0,462.0" fill="#000" />
<line x1="67" y1="507.5" x2="769.5" y2="507.5" stroke="#cecece" stroke-width="1" />
<line x1="67" y1="529.5" x2="769.5" y2="529.5" stroke="#cecece" stroke-width="1" />
<line x1="67" y1="550.5" x2="769.5" y2="550.5" stroke="#cecece" stroke-width="1" />
<line x1="67" y1="571.5" x2="769.5" y2="571.5" stroke="#cecece" stroke-width="1" />
<line x1="67" y1="592.5" x2="769.5" y2="592.5" stroke="#cecece" stroke-width="1" />
<line x1="67" y1="486.5" x2="769.5" y2="486.5" stroke="#fff" stroke-width="1.3" />
<line x1="67" y1="614.2" x2="769.5" y2="614.2" stroke="#fff" stroke-width="1.3" />
<line x1="139.5" y1="483.5" x2="139.5" y2="614.2" stroke="#fff" stroke-width="1" stroke-dasharray="3 2"/>
<text transform="translate(139.4,478.3) scale(0.87,1)" font-size="12" fill="#fff" text-anchor="middle" >-30.00</text>
<line x1="244.5" y1="483.5" x2="244.5" y2="614.2" stroke="#fff" stroke-width="1" stroke-dasharray="3 2"/>
<text transform="translate(244.62,478.3) scale(0.87,1)" font-size="12" fill="#fff" text-anchor="middle" >-29.00</text>
<line x1="349.5" y1="483.5" x2="349.5" y2="614.2" stroke="#fff" stroke-width="1" stroke-dasharray="3 2"/>
<text transform="translate(349.84,478.3) scale(0.87,1)" font-size="12" fill="#fff" text-anchor="middle" >-28.00</text>
<line x1="455.5" y1="483.5" x2="455.5" y2="614.2" stroke="#fff" stroke-width="1" stroke-dasharray="3 2"/>
<text transform="translate(455.06,478.3) scale(0.87,1)" font-size="12" fill="#fff" text-anchor="middle" >-27.00</text>
<line x1="560.5" y1="483.5" x2="560.5" y2="614.2" stroke="#fff" stroke-width="1" stroke-dasharray="3 2"/>
<text transform="translate(560.28,478.3) scale(0.87,1)" font-size="12" fill="#fff" text-anchor="middle" >-26.00</text>
<line x1="665.5" y1="483.5" x2="665.5" y2="614.2" stroke="#fff" stroke-width="1" stroke-dasharray="3 2"/>
<text transform="translate(665.5,478.3) scale(0.87,1)" font-size="12" fill="#fff" text-anchor="middle" >-25.00</text>
<line x1="86.8" y1="483.5" x2="86.8" y2="486.5" stroke="#fff" stroke-width="1" />
<line x1="192.02" y1="483.5" x2="192.02" y2="486.5" stroke="#fff" stroke-width="1" />
<line x1="297.24" y1="483.5" x2="297.24" y2="486.5" stroke="#fff" stroke-width="1" />
<line x1="402.46" y1="483.5" x2="402.46" y2="486.5" stroke="#fff" stroke-width="1" />
<line x1="507.68" y1="483.5" x2="507.68" y2="486.5" stroke="#fff" stroke-width="1" />
<line x1="612.9" y1="483.5" x2="612.9" y2="486.5" stroke="#fff" stroke-width="1" />
<line x1="718.12" y1="483.5" x2="718.12" y2="486.5" stroke="#fff" stroke-width="1" />
<line x1="67" y1="614.2" x2="769" y2="614.2" stroke="#10e8e8" stroke-width="2.2" />
<line x1="70" y1="615.8" x2="769" y2="615.8" stroke="#10e8e8" stroke-width="1" stroke-dasharray="1 3.2" opacity="0.8"/>
<rect x="66" y="485.5" width="2.4" height="129.2" fill="#10e8e8" />
<rect x="60" y="485.5" width="7" height="2" fill="#10e8e8" />
<text transform="translate(56,490.2) scale(0.87,1)" font-size="12" fill="#10e8e8" text-anchor="end" >30</text>
<rect x="60" y="506.78" width="7" height="2" fill="#10e8e8" />
<text transform="translate(56,511.48) scale(0.87,1)" font-size="12" fill="#10e8e8" text-anchor="end" >25</text>
<rect x="60" y="528.06" width="7" height="2" fill="#10e8e8" />
<text transform="translate(56,532.76) scale(0.87,1)" font-size="12" fill="#10e8e8" text-anchor="end" >20</text>
<rect x="60" y="549.34" width="7" height="2" fill="#10e8e8" />
<text transform="translate(56,554.04) scale(0.87,1)" font-size="12" fill="#10e8e8" text-anchor="end" >15</text>
<rect x="60" y="570.62" width="7" height="2" fill="#10e8e8" />
<text transform="translate(56,575.32) scale(0.87,1)" font-size="12" fill="#10e8e8" text-anchor="end" >10</text>
<rect x="60" y="591.9" width="7" height="2" fill="#10e8e8" />
<text transform="translate(56,596.6) scale(0.87,1)" font-size="12" fill="#10e8e8" text-anchor="end" >5</text>
<rect x="60" y="613.18" width="7" height="2" fill="#10e8e8" />
<text transform="translate(56,617.88) scale(0.87,1)" font-size="12" fill="#10e8e8" text-anchor="end" >0</text>
<rect x="62.5" y="496.14" width="4.5" height="2" fill="#10e8e8" />
<rect x="62.5" y="517.42" width="4.5" height="2" fill="#10e8e8" />
<rect x="62.5" y="538.7" width="4.5" height="2" fill="#10e8e8" />
<rect x="62.5" y="559.98" width="4.5" height="2" fill="#10e8e8" />
<rect x="62.5" y="581.26" width="4.5" height="2" fill="#10e8e8" />
<rect x="62.5" y="602.54" width="4.5" height="2" fill="#10e8e8" />
<rect x="768.5" y="485.5" width="2.6" height="129.2" fill="#f0b838" />
<rect x="769.5" y="485.5" width="7" height="2" fill="#f0b838" />
<text transform="translate(782,490.2) scale(0.87,1)" font-size="12" fill="#f0b838" text-anchor="start" >80</text>
<rect x="769.5" y="501.46" width="7" height="2" fill="#f0b838" />
<text transform="translate(782,506.16) scale(0.87,1)" font-size="12" fill="#f0b838" text-anchor="start" >70</text>
<rect x="769.5" y="517.42" width="7" height="2" fill="#f0b838" />
<text transform="translate(782,522.12) scale(0.87,1)" font-size="12" fill="#f0b838" text-anchor="start" >60</text>
<rect x="769.5" y="533.38" width="7" height="2" fill="#f0b838" />
<text transform="translate(782,538.08) scale(0.87,1)" font-size="12" fill="#f0b838" text-anchor="start" >50</text>
<rect x="769.5" y="549.34" width="7" height="2" fill="#f0b838" />
<text transform="translate(782,554.04) scale(0.87,1)" font-size="12" fill="#f0b838" text-anchor="start" >40</text>
<rect x="769.5" y="565.3" width="7" height="2" fill="#f0b838" />
<text transform="translate(782,570) scale(0.87,1)" font-size="12" fill="#f0b838" text-anchor="start" >30</text>
<rect x="769.5" y="581.26" width="7" height="2" fill="#f0b838" />
<text transform="translate(782,585.96) scale(0.87,1)" font-size="12" fill="#f0b838" text-anchor="start" >20</text>
<rect x="769.5" y="597.22" width="7" height="2" fill="#f0b838" />
<text transform="translate(782,601.92) scale(0.87,1)" font-size="12" fill="#f0b838" text-anchor="start" >10</text>
<rect x="769.5" y="613.18" width="7" height="2" fill="#f0b838" />
<text transform="translate(782,617.88) scale(0.87,1)" font-size="12" fill="#f0b838" text-anchor="start" >0</text>
<rect x="769.5" y="493.48" width="5" height="2" fill="#f0b838" />
<rect x="769.5" y="509.44" width="5" height="2" fill="#f0b838" />
<rect x="769.5" y="525.4" width="5" height="2" fill="#f0b838" />
<rect x="769.5" y="541.36" width="5" height="2" fill="#f0b838" />
<rect x="769.5" y="557.32" width="5" height="2" fill="#f0b838" />
<rect x="769.5" y="573.28" width="5" height="2" fill="#f0b838" />
<rect x="769.5" y="589.24" width="5" height="2" fill="#f0b838" />
<rect x="769.5" y="605.2" width="5" height="2" fill="#f0b838" />
<text transform="translate(40,549) rotate(-90) scale(0.87,1)" font-size="12" fill="#10e8e8" text-anchor="middle" >Boost</text>
<text transform="translate(796,550) rotate(90) scale(0.87,1)" font-size="12" fill="#f0b838" text-anchor="middle" >Throttle Position</text>
<text transform="translate(418,638) scale(0.87,1)" font-size="12" fill="#fff" text-anchor="middle" >Time(Secs)</text>
<line x1="67" y1="664.5" x2="769.5" y2="664.5" stroke="#cecece" stroke-width="1" />
<line x1="67" y1="658.3" x2="769.5" y2="658.3" stroke="#fff" stroke-width="1.3" />
<line x1="67" y1="697.2" x2="769.5" y2="697.2" stroke="#fff" stroke-width="1.3" />
<line x1="74.5" y1="655.3" x2="74.5" y2="697.2" stroke="#fff" stroke-width="1" stroke-dasharray="3 2"/>
<text transform="translate(74.4,649.8) scale(0.87,1)" font-size="12" fill="#fff" text-anchor="middle" >-30.00</text>
<line x1="126.5" y1="655.3" x2="126.5" y2="697.2" stroke="#fff" stroke-width="1" stroke-dasharray="3 2"/>
<text transform="translate(126.925,649.8) scale(0.87,1)" font-size="12" fill="#fff" text-anchor="middle" >-25.00</text>
<line x1="179.5" y1="655.3" x2="179.5" y2="697.2" stroke="#fff" stroke-width="1" stroke-dasharray="3 2"/>
<text transform="translate(179.45,649.8) scale(0.87,1)" font-size="12" fill="#fff" text-anchor="middle" >-20.00</text>
<line x1="231.5" y1="655.3" x2="231.5" y2="697.2" stroke="#fff" stroke-width="1" stroke-dasharray="3 2"/>
<text transform="translate(231.975,649.8) scale(0.87,1)" font-size="12" fill="#fff" text-anchor="middle" >-15.00</text>
<line x1="284.5" y1="655.3" x2="284.5" y2="697.2" stroke="#fff" stroke-width="1" stroke-dasharray="3 2"/>
<text transform="translate(284.5,649.8) scale(0.87,1)" font-size="12" fill="#fff" text-anchor="middle" >-10.00</text>
<line x1="337.5" y1="655.3" x2="337.5" y2="697.2" stroke="#fff" stroke-width="1" stroke-dasharray="3 2"/>
<text transform="translate(337.025,649.8) scale(0.87,1)" font-size="12" fill="#fff" text-anchor="middle" >-5.00</text>
<line x1="389.5" y1="655.3" x2="389.5" y2="697.2" stroke="#fff" stroke-width="1" stroke-dasharray="3 2"/>
<text transform="translate(389.55,649.8) scale(0.87,1)" font-size="12" fill="#fff" text-anchor="middle" >0.00</text>
<line x1="442.5" y1="655.3" x2="442.5" y2="697.2" stroke="#fff" stroke-width="1" stroke-dasharray="3 2"/>
<text transform="translate(442.075,649.8) scale(0.87,1)" font-size="12" fill="#fff" text-anchor="middle" >5.00</text>
<line x1="494.5" y1="655.3" x2="494.5" y2="697.2" stroke="#fff" stroke-width="1" stroke-dasharray="3 2"/>
<text transform="translate(494.6,649.8) scale(0.87,1)" font-size="12" fill="#fff" text-anchor="middle" >10.00</text>
<line x1="547.5" y1="655.3" x2="547.5" y2="697.2" stroke="#fff" stroke-width="1" stroke-dasharray="3 2"/>
<text transform="translate(547.125,649.8) scale(0.87,1)" font-size="12" fill="#fff" text-anchor="middle" >15.00</text>
<line x1="599.5" y1="655.3" x2="599.5" y2="697.2" stroke="#fff" stroke-width="1" stroke-dasharray="3 2"/>
<text transform="translate(599.65,649.8) scale(0.87,1)" font-size="12" fill="#fff" text-anchor="middle" >20.00</text>
<line x1="652.5" y1="655.3" x2="652.5" y2="697.2" stroke="#fff" stroke-width="1" stroke-dasharray="3 2"/>
<text transform="translate(652.175,649.8) scale(0.87,1)" font-size="12" fill="#fff" text-anchor="middle" >25.00</text>
<line x1="704.5" y1="655.3" x2="704.5" y2="697.2" stroke="#fff" stroke-width="1" stroke-dasharray="3 2"/>
<text transform="translate(704.7,649.8) scale(0.87,1)" font-size="12" fill="#fff" text-anchor="middle" >30.00</text>
<line x1="757.5" y1="655.3" x2="757.5" y2="697.2" stroke="#fff" stroke-width="1" stroke-dasharray="3 2"/>
<text transform="translate(757.225,649.8) scale(0.87,1)" font-size="12" fill="#fff" text-anchor="middle" >35.00</text>
<line x1="100.663" y1="655.3" x2="100.663" y2="658.3" stroke="#fff" stroke-width="1" />
<line x1="153.188" y1="655.3" x2="153.188" y2="658.3" stroke="#fff" stroke-width="1" />
<line x1="205.713" y1="655.3" x2="205.713" y2="658.3" stroke="#fff" stroke-width="1" />
<line x1="258.238" y1="655.3" x2="258.238" y2="658.3" stroke="#fff" stroke-width="1" />
<line x1="310.763" y1="655.3" x2="310.763" y2="658.3" stroke="#fff" stroke-width="1" />
<line x1="363.288" y1="655.3" x2="363.288" y2="658.3" stroke="#fff" stroke-width="1" />
<line x1="415.812" y1="655.3" x2="415.812" y2="658.3" stroke="#fff" stroke-width="1" />
<line x1="468.338" y1="655.3" x2="468.338" y2="658.3" stroke="#fff" stroke-width="1" />
<line x1="520.863" y1="655.3" x2="520.863" y2="658.3" stroke="#fff" stroke-width="1" />
<line x1="573.388" y1="655.3" x2="573.388" y2="658.3" stroke="#fff" stroke-width="1" />
<line x1="625.913" y1="655.3" x2="625.913" y2="658.3" stroke="#fff" stroke-width="1" />
<line x1="678.438" y1="655.3" x2="678.438" y2="658.3" stroke="#fff" stroke-width="1" />
<line x1="730.962" y1="655.3" x2="730.962" y2="658.3" stroke="#fff" stroke-width="1" />
<path d="M67.8 696.4 L136.0 696.4 L147.3 693.7 L165.0 692.6 L172.0 694.8 L181.0 696.0 L194.4 695.5 L203.3 693.7 L216.8 692.5 L230.2 694.3 L252.6 692.6 L261.6 693.2 L288.0 693.4 L289.5 692.0 L291.3 681.4 L296.9 678.0 L314.8 675.8 L335.0 672.4 L336.0 669.7 L337.1 667.5 L338.2 672.8 L339.3 666.1 L340.4 671.0 L341.5 668.8 L342.6 665.2 L343.7 669.8 L344.8 664.4 L345.9 668.5 L347.0 664.2 L348.1 664.2 L349.2 667.6 L350.3 671.7 L351.4 663.7 L352.5 664.5 L353.6 668.7 L354.7 672.0 L355.8 667.6 L356.9 665.4 L358.0 671.5 L359.1 661.0 L360.2 669.6 L361.3 663.1 L362.4 661.2 L363.5 660.7 L364.6 662.5 L365.7 667.8 L366.8 660.5 L367.9 664.7 L369.7 667.9 L371.9 683.6 L375.3 695.9 L380.9 697.0 L384.2 692.5 L388.7 679.1 L395.4 672.4 L400.0 670.0 L401.5 664.0 L403.0 669.0 L405.5 671.3 L407.7 683.6 L410.0 695.9 L414.5 697.0 L417.8 690.3 L422.3 676.9 L426.8 671.3 L428.0 667.7 L429.3 665.9 L430.6 667.1 L431.9 663.9 L433.2 663.9 L434.5 664.8 L435.8 667.9 L437.1 666.3 L438.4 665.5 L439.7 667.3 L441.0 666.4 L442.3 665.4 L443.6 668.7 L444.9 668.0 L446.2 665.1 L447.5 667.2 L448.8 666.9 L450.1 669.2 L451.4 668.2 L452.7 665.4 L454.0 669.9 L455.3 664.3 L456.6 666.2 L457.9 668.4 L459.2 664.5 L460.5 666.7 L461.8 663.8 L463.1 667.8 L464.4 668.5 L465.7 667.2 L468.2 667.9 L469.3 679.1 L471.6 693.7 L474.9 696.4 L488.0 697.0 L550.8 696.7 L558.0 691.0 L565.4 686.2 L575.9 686.2 L578.0 688.0 L581.0 690.4 L586.0 689.5 L592.6 685.4 L601.0 683.3 L640.0 683.6 L663.8 684.0 L668.0 689.0 L672.2 692.5 L712.0 692.5 L715.0 691.0 L718.3 690.4 L726.6 690.4 L730.0 693.0 L733.0 694.6 L751.8 695.4 L760.0 694.0 L769.3 692.5" fill="none" stroke="#0a0abc" stroke-width="2.6" stroke-linejoin="round" />
<path d="M67.8 680.2 L109.3 684.7 L136.1 687.0 L141.0 688.5 L147.3 691.4 L165.3 691.4 L168.0 689.5 L172.0 685.8 L180.0 686.0 L192.1 687.0 L198.0 689.0 L205.6 691.4 L225.7 690.3 L250.0 691.0 L270.0 691.6 L292.4 691.4 L310.3 685.8 L337.2 674.6 L359.6 665.7 L370.8 660.5 L380.9 672.4 L391.0 671.3 L406.6 669.0 L417.8 676.4 L426.8 674.6 L449.2 671.7 L472.7 670.2 L479.4 677.3 L500.0 678.6 L546.6 683.3 L600.0 683.3 L651.3 683.3 L700.0 683.6 L735.0 684.0 L745.0 687.0 L756.0 690.4 L769.3 690.4" fill="none" stroke="#84f03c" stroke-width="2.6" stroke-linejoin="round" />
<rect x="66" y="657.3" width="2.4" height="40.4" fill="#84f03c" />
<rect x="60" y="663.7" width="7" height="2" fill="#84f03c" />
<text transform="translate(56,668.4) scale(0.87,1)" font-size="12" fill="#84f03c" text-anchor="end" >5000</text>
<rect x="60" y="696.2" width="7" height="2" fill="#84f03c" />
<text transform="translate(56,700.9) scale(0.87,1)" font-size="12" fill="#84f03c" text-anchor="end" >0</text>
<rect x="62.5" y="680" width="4.5" height="2" fill="#84f03c" />
<rect x="768.5" y="657.3" width="2.6" height="40.4" fill="#0a0abc" />
<rect x="769.5" y="668.4" width="8" height="2" fill="#0a0abc" />
<text transform="translate(782,673.1) scale(0.87,1)" font-size="12" fill="#0a0abc" text-anchor="start" >50</text>
<rect x="769.5" y="695.8" width="8" height="2" fill="#0a0abc" />
<text transform="translate(782,700.5) scale(0.87,1)" font-size="12" fill="#0a0abc" text-anchor="start" >0</text>
<rect x="769.5" y="682" width="5" height="2" fill="#0a0abc" />
<text transform="translate(27,679) rotate(-90) scale(0.87,1)" font-size="12" fill="#84f03c" text-anchor="middle" >RPM</text>
<text transform="translate(796,678) rotate(90) scale(0.87,1)" font-size="12" fill="#0a0abc" text-anchor="middle" >Load</text>
<rect x="822" y="100" width="200" height="612" fill="#000" />
<rect x="1022" y="98" width="3" height="615" fill="#d8d8ff" />
<rect x="822" y="98" width="204" height="2" fill="#f8f8ff" />
<text transform="translate(829.7,112.6)" font-size="9" fill="#909090" text-anchor="start" textLength="17.6" lengthAdjust="spacingAndGlyphs">FAN</text>
<text transform="translate(953.9,112)" font-size="9" fill="#909090" text-anchor="start" textLength="22.7" lengthAdjust="spacingAndGlyphs">FUEL</text>
<text transform="translate(953.9,122.8)" font-size="9" fill="#909090" text-anchor="start" textLength="24" lengthAdjust="spacingAndGlyphs">PUMP</text>
<path d="M963.1 148.7 A72.5 72.5 0 0 1 969.3 188.8 L960.4 187.6 A63.5 63.5 0 0 0 955.0 152.5 Z" fill="#ff9c18" stroke="none" stroke-width="1" />
<path d="M969.3 188.8 A72.5 72.5 0 0 1 952.9 225.9 L946.0 220.1 A63.5 63.5 0 0 0 960.4 187.6 Z" fill="#ff1414" stroke="none" stroke-width="1" />
<line x1="842.015" y1="225.774" x2="848.143" y2="220.631" stroke="#fff" stroke-width="1.9" />
<line x1="837.11" y1="219.205" x2="841.279" y2="216.445" stroke="#fff" stroke-width="1.2" />
<line x1="832.98" y1="212.124" x2="837.435" y2="209.854" stroke="#fff" stroke-width="1.2" />
<line x1="829.679" y1="204.62" x2="834.362" y2="202.869" stroke="#fff" stroke-width="1.2" />
<line x1="827.248" y1="196.791" x2="832.099" y2="195.581" stroke="#fff" stroke-width="1.2" />
<line x1="825.719" y1="188.737" x2="833.65" y2="187.693" stroke="#fff" stroke-width="1.9" />
<line x1="825.111" y1="180.562" x2="830.11" y2="180.475" stroke="#fff" stroke-width="1.2" />
<line x1="825.433" y1="172.37" x2="830.41" y2="172.85" stroke="#fff" stroke-width="1.2" />
<line x1="826.68" y1="164.268" x2="831.571" y2="165.308" stroke="#fff" stroke-width="1.2" />
<line x1="828.836" y1="156.359" x2="833.578" y2="157.945" stroke="#fff" stroke-width="1.2" />
<line x1="831.874" y1="148.745" x2="839.124" y2="152.126" stroke="#fff" stroke-width="1.9" />
<line x1="835.754" y1="141.523" x2="840.017" y2="144.136" stroke="#fff" stroke-width="1.2" />
<line x1="840.427" y1="134.788" x2="844.367" y2="137.866" stroke="#fff" stroke-width="1.2" />
<line x1="845.832" y1="128.624" x2="849.398" y2="132.129" stroke="#fff" stroke-width="1.2" />
<line x1="851.9" y1="123.112" x2="855.047" y2="126.998" stroke="#fff" stroke-width="1.2" />
<line x1="858.553" y1="118.323" x2="862.852" y2="125.07" stroke="#fff" stroke-width="1.9" />
<line x1="865.706" y1="114.317" x2="867.898" y2="118.811" stroke="#fff" stroke-width="1.2" />
<line x1="873.266" y1="111.147" x2="874.935" y2="115.86" stroke="#fff" stroke-width="1.2" />
<line x1="881.136" y1="108.853" x2="882.261" y2="113.725" stroke="#fff" stroke-width="1.2" />
<line x1="889.215" y1="107.465" x2="889.781" y2="112.433" stroke="#fff" stroke-width="1.2" />
<line x1="897.4" y1="107" x2="897.4" y2="115" stroke="#fff" stroke-width="1.9" />
<line x1="905.585" y1="107.465" x2="905.019" y2="112.433" stroke="#fff" stroke-width="1.2" />
<line x1="913.664" y1="108.853" x2="912.539" y2="113.725" stroke="#fff" stroke-width="1.2" />
<line x1="921.534" y1="111.147" x2="919.865" y2="115.86" stroke="#fff" stroke-width="1.2" />
<line x1="929.094" y1="114.317" x2="926.902" y2="118.811" stroke="#fff" stroke-width="1.2" />
<line x1="936.247" y1="118.323" x2="931.948" y2="125.07" stroke="#fff" stroke-width="1.9" />
<line x1="942.9" y1="123.112" x2="939.753" y2="126.998" stroke="#fff" stroke-width="1.2" />
<line x1="948.968" y1="128.624" x2="945.402" y2="132.129" stroke="#fff" stroke-width="1.2" />
<line x1="954.373" y1="134.788" x2="950.433" y2="137.866" stroke="#fff" stroke-width="1.2" />
<line x1="959.046" y1="141.523" x2="954.783" y2="144.136" stroke="#fff" stroke-width="1.2" />
<line x1="962.926" y1="148.745" x2="955.676" y2="152.126" stroke="#fff" stroke-width="1.9" />
<line x1="965.964" y1="156.359" x2="961.222" y2="157.945" stroke="#fff" stroke-width="1.2" />
<line x1="968.12" y1="164.268" x2="963.229" y2="165.308" stroke="#fff" stroke-width="1.2" />
<line x1="969.367" y1="172.37" x2="964.39" y2="172.85" stroke="#fff" stroke-width="1.2" />
<line x1="969.689" y1="180.562" x2="964.69" y2="180.475" stroke="#fff" stroke-width="1.2" />
<line x1="969.081" y1="188.737" x2="961.15" y2="187.693" stroke="#fff" stroke-width="1.9" />
<line x1="967.552" y1="196.791" x2="962.701" y2="195.581" stroke="#fff" stroke-width="1.2" />
<line x1="965.121" y1="204.62" x2="960.438" y2="202.869" stroke="#fff" stroke-width="1.2" />
<line x1="961.82" y1="212.124" x2="957.365" y2="209.854" stroke="#fff" stroke-width="1.2" />
<line x1="957.69" y1="219.205" x2="953.521" y2="216.445" stroke="#fff" stroke-width="1.2" />
<line x1="952.785" y1="225.774" x2="946.657" y2="220.631" stroke="#fff" stroke-width="1.9" />
<text transform="translate(855.038,218.246)" font-size="11" fill="#fff" text-anchor="middle" font-weight="bold" >0</text>
<text transform="translate(842.573,189.918)" font-size="11" fill="#fff" text-anchor="middle" font-weight="bold" >1</text>
<text transform="translate(847.281,159.329)" font-size="11" fill="#fff" text-anchor="middle" font-weight="bold" >2</text>
<text transform="translate(867.687,136.06)" font-size="11" fill="#fff" text-anchor="middle" font-weight="bold" >3</text>
<text transform="translate(897.4,127.4)" font-size="11" fill="#fff" text-anchor="middle" font-weight="bold" >4</text>
<text transform="translate(927.113,136.06)" font-size="11" fill="#fff" text-anchor="middle" font-weight="bold" >5</text>
<text transform="translate(947.519,159.329)" font-size="11" fill="#fff" text-anchor="middle" font-weight="bold" >6</text>
<text transform="translate(952.227,189.918)" font-size="11" fill="#fff" text-anchor="middle" font-weight="bold" >7</text>
<text transform="translate(939.762,218.246)" font-size="11" fill="#fff" text-anchor="middle" font-weight="bold" >8</text>
<text transform="translate(897.4,167.8)" font-size="12" fill="#d8d8d8" text-anchor="middle" >RPM</text>
<text transform="translate(896.9,197.6)" font-size="11" fill="#d8d8d8" text-anchor="middle" >x 1000</text>
<circle cx="897.4" cy="179.3" r="5.6" fill="#a8a8a8"/>
<polygon points="896.6,177.5 899.0,180.4 859.8,211.5 859.2,210.7" fill="#f01818" class="aa"/>
<g transform="translate(915.5,214)">
<line x1="4.18" y1="3.5" x2="5.5" y2="8.75" stroke="#0b0b58" stroke-width="1.2" opacity="0.8"/>
<line x1="8.38" y1="3.5" x2="5.5" y2="8.75" stroke="#0b0b58" stroke-width="1.2" opacity="0.8"/>
<line x1="2.62" y1="14" x2="5.5" y2="8.75" stroke="#0b0b58" stroke-width="1.2" opacity="0.8"/>
<line x1="6.82" y1="14" x2="5.5" y2="8.75" stroke="#0b0b58" stroke-width="1.2" opacity="0.8"/>
<line x1="2.812" y1="8.75" x2="8.188" y2="8.75" stroke="#0b0b58" stroke-width="1.8" opacity="1"/>
<polygon points="4.1,0.0 10.6,0.0 7.9,1.9 6.2,1.9" fill="#c8c8f4" class="aa"/>
<polygon points="0.4,17.5 6.9,17.5 4.8,15.6 3.1,15.6" fill="#c8c8f4" class="aa"/>
<polygon points="2.6,1.4 1.5,7.7 3.0,5.2" fill="#c8c8f4" class="aa"/>
<polygon points="10.8,1.4 9.7,7.7 8.4,4.9" fill="#c8c8f4" class="aa"/>
<polygon points="1.3,9.8 0.2,16.1 2.7,12.9" fill="#c8c8f4" class="aa"/>
<polygon points="9.5,9.8 8.4,16.1 7.8,12.6" fill="#c8c8f4" class="aa"/>
</g>
<g transform="translate(904,214)">
<line x1="4.18" y1="3.5" x2="5.5" y2="8.75" stroke="#0b0b58" stroke-width="1.2" opacity="0.32"/>
<line x1="8.38" y1="3.5" x2="5.5" y2="8.75" stroke="#0b0b58" stroke-width="1.2" opacity="0.32"/>
<line x1="2.62" y1="14" x2="5.5" y2="8.75" stroke="#0b0b58" stroke-width="1.2" opacity="0.32"/>
<line x1="6.82" y1="14" x2="5.5" y2="8.75" stroke="#0b0b58" stroke-width="1.2" opacity="0.32"/>
<line x1="2.812" y1="8.75" x2="8.188" y2="8.75" stroke="#0b0b58" stroke-width="1.8" opacity="0.4"/>
<polygon points="4.1,0.0 10.6,0.0 7.9,1.9 6.2,1.9" fill="#0b0b58" class="aa" opacity="0.4"/>
<polygon points="0.4,17.5 6.9,17.5 4.8,15.6 3.1,15.6" fill="#0b0b58" class="aa" opacity="0.4"/>
<polygon points="2.6,1.4 1.5,7.7 3.0,5.2" fill="#0b0b58" class="aa" opacity="0.4"/>
<polygon points="10.8,1.4 9.7,7.7 8.4,4.9" fill="#0b0b58" class="aa" opacity="0.4"/>
<polygon points="1.3,9.8 0.2,16.1 2.7,12.9" fill="#0b0b58" class="aa" opacity="0.4"/>
<polygon points="9.5,9.8 8.4,16.1 7.8,12.6" fill="#0b0b58" class="aa" opacity="0.4"/>
</g>
<g transform="translate(892.5,214)">
<line x1="4.18" y1="3.5" x2="5.5" y2="8.75" stroke="#0b0b58" stroke-width="1.2" opacity="0.32"/>
<line x1="8.38" y1="3.5" x2="5.5" y2="8.75" stroke="#0b0b58" stroke-width="1.2" opacity="0.32"/>
<line x1="2.62" y1="14" x2="5.5" y2="8.75" stroke="#0b0b58" stroke-width="1.2" opacity="0.32"/>
<line x1="6.82" y1="14" x2="5.5" y2="8.75" stroke="#0b0b58" stroke-width="1.2" opacity="0.32"/>
<line x1="2.812" y1="8.75" x2="8.188" y2="8.75" stroke="#0b0b58" stroke-width="1.8" opacity="0.4"/>
<polygon points="4.1,0.0 10.6,0.0 7.9,1.9 6.2,1.9" fill="#0b0b58" class="aa" opacity="0.4"/>
<polygon points="0.4,17.5 6.9,17.5 4.8,15.6 3.1,15.6" fill="#0b0b58" class="aa" opacity="0.4"/>
<polygon points="2.6,1.4 1.5,7.7 3.0,5.2" fill="#0b0b58" class="aa" opacity="0.4"/>
<polygon points="10.8,1.4 9.7,7.7 8.4,4.9" fill="#0b0b58" class="aa" opacity="0.4"/>
<polygon points="1.3,9.8 0.2,16.1 2.7,12.9" fill="#0b0b58" class="aa" opacity="0.4"/>
<polygon points="9.5,9.8 8.4,16.1 7.8,12.6" fill="#0b0b58" class="aa" opacity="0.4"/>
</g>
<g transform="translate(881,214)">
<line x1="4.18" y1="3.5" x2="5.5" y2="8.75" stroke="#0b0b58" stroke-width="1.2" opacity="0.32"/>
<line x1="8.38" y1="3.5" x2="5.5" y2="8.75" stroke="#0b0b58" stroke-width="1.2" opacity="0.32"/>
<line x1="2.62" y1="14" x2="5.5" y2="8.75" stroke="#0b0b58" stroke-width="1.2" opacity="0.32"/>
<line x1="6.82" y1="14" x2="5.5" y2="8.75" stroke="#0b0b58" stroke-width="1.2" opacity="0.32"/>
<line x1="2.812" y1="8.75" x2="8.188" y2="8.75" stroke="#0b0b58" stroke-width="1.8" opacity="0.4"/>
<polygon points="4.1,0.0 10.6,0.0 7.9,1.9 6.2,1.9" fill="#0b0b58" class="aa" opacity="0.4"/>
<polygon points="0.4,17.5 6.9,17.5 4.8,15.6 3.1,15.6" fill="#0b0b58" class="aa" opacity="0.4"/>
<polygon points="2.6,1.4 1.5,7.7 3.0,5.2" fill="#0b0b58" class="aa" opacity="0.4"/>
<polygon points="10.8,1.4 9.7,7.7 8.4,4.9" fill="#0b0b58" class="aa" opacity="0.4"/>
<polygon points="1.3,9.8 0.2,16.1 2.7,12.9" fill="#0b0b58" class="aa" opacity="0.4"/>
<polygon points="9.5,9.8 8.4,16.1 7.8,12.6" fill="#0b0b58" class="aa" opacity="0.4"/>
</g>
<g transform="translate(869.5,214)">
<line x1="4.18" y1="3.5" x2="5.5" y2="8.75" stroke="#0b0b58" stroke-width="1.2" opacity="0.32"/>
<line x1="8.38" y1="3.5" x2="5.5" y2="8.75" stroke="#0b0b58" stroke-width="1.2" opacity="0.32"/>
<line x1="2.62" y1="14" x2="5.5" y2="8.75" stroke="#0b0b58" stroke-width="1.2" opacity="0.32"/>
<line x1="6.82" y1="14" x2="5.5" y2="8.75" stroke="#0b0b58" stroke-width="1.2" opacity="0.32"/>
<line x1="2.812" y1="8.75" x2="8.188" y2="8.75" stroke="#0b0b58" stroke-width="1.8" opacity="0.4"/>
<polygon points="4.1,0.0 10.6,0.0 7.9,1.9 6.2,1.9" fill="#0b0b58" class="aa" opacity="0.4"/>
<polygon points="0.4,17.5 6.9,17.5 4.8,15.6 3.1,15.6" fill="#0b0b58" class="aa" opacity="0.4"/>
<polygon points="2.6,1.4 1.5,7.7 3.0,5.2" fill="#0b0b58" class="aa" opacity="0.4"/>
<polygon points="10.8,1.4 9.7,7.7 8.4,4.9" fill="#0b0b58" class="aa" opacity="0.4"/>
<polygon points="1.3,9.8 0.2,16.1 2.7,12.9" fill="#0b0b58" class="aa" opacity="0.4"/>
<polygon points="9.5,9.8 8.4,16.1 7.8,12.6" fill="#0b0b58" class="aa" opacity="0.4"/>
</g>
<rect x="1005" y="104" width="14" height="110" fill="#707070" />
<rect x="1004.4" y="104" width="0.8" height="110" fill="#8c8c50" />
<rect x="1005" y="211.8" width="14" height="2.2" fill="#20c8a0" />
<rect x="997.5" y="109.2" width="5.5" height="1.8" fill="#fff" />
<text transform="translate(994.5,112.75)" font-size="7.6" fill="#fff" text-anchor="end" >30</text>
<rect x="997.5" y="126.28" width="5.5" height="1.8" fill="#fff" />
<text transform="translate(994.5,129.83)" font-size="7.6" fill="#fff" text-anchor="end" >25</text>
<rect x="997.5" y="143.36" width="5.5" height="1.8" fill="#fff" />
<text transform="translate(994.5,146.91)" font-size="7.6" fill="#fff" text-anchor="end" >20</text>
<rect x="997.5" y="160.44" width="5.5" height="1.8" fill="#fff" />
<text transform="translate(994.5,163.99)" font-size="7.6" fill="#fff" text-anchor="end" >15</text>
<rect x="997.5" y="177.52" width="5.5" height="1.8" fill="#fff" />
<text transform="translate(994.5,181.07)" font-size="7.6" fill="#fff" text-anchor="end" >10</text>
<rect x="997.5" y="194.6" width="5.5" height="1.8" fill="#fff" />
<text transform="translate(994.5,198.15)" font-size="7.6" fill="#fff" text-anchor="end" >5</text>
<rect x="997.5" y="211.68" width="5.5" height="1.8" fill="#fff" />
<text transform="translate(994.5,215.23)" font-size="7.6" fill="#fff" text-anchor="end" >0</text>
<rect x="1000.4" y="112.716" width="2.6" height="1.5" fill="#fff" />
<rect x="1000.4" y="116.132" width="2.6" height="1.5" fill="#fff" />
<rect x="1000.4" y="119.548" width="2.6" height="1.5" fill="#fff" />
<rect x="1000.4" y="122.964" width="2.6" height="1.5" fill="#fff" />
<rect x="1000.4" y="129.796" width="2.6" height="1.5" fill="#fff" />
<rect x="1000.4" y="133.212" width="2.6" height="1.5" fill="#fff" />
<rect x="1000.4" y="136.628" width="2.6" height="1.5" fill="#fff" />
<rect x="1000.4" y="140.044" width="2.6" height="1.5" fill="#fff" />
<rect x="1000.4" y="146.876" width="2.6" height="1.5" fill="#fff" />
<rect x="1000.4" y="150.292" width="2.6" height="1.5" fill="#fff" />
<rect x="1000.4" y="153.708" width="2.6" height="1.5" fill="#fff" />
<rect x="1000.4" y="157.124" width="2.6" height="1.5" fill="#fff" />
<rect x="1000.4" y="163.956" width="2.6" height="1.5" fill="#fff" />
<rect x="1000.4" y="167.372" width="2.6" height="1.5" fill="#fff" />
<rect x="1000.4" y="170.788" width="2.6" height="1.5" fill="#fff" />
<rect x="1000.4" y="174.204" width="2.6" height="1.5" fill="#fff" />
<rect x="1000.4" y="181.036" width="2.6" height="1.5" fill="#fff" />
<rect x="1000.4" y="184.452" width="2.6" height="1.5" fill="#fff" />
<rect x="1000.4" y="187.868" width="2.6" height="1.5" fill="#fff" />
<rect x="1000.4" y="191.284" width="2.6" height="1.5" fill="#fff" />
<rect x="1000.4" y="198.116" width="2.6" height="1.5" fill="#fff" />
<rect x="1000.4" y="201.532" width="2.6" height="1.5" fill="#fff" />
<rect x="1000.4" y="204.948" width="2.6" height="1.5" fill="#fff" />
<rect x="1000.4" y="208.364" width="2.6" height="1.5" fill="#fff" />
<rect x="1000.4" y="105.9" width="2.6" height="1.5" fill="#fff" />
<rect x="1000.4" y="102.5" width="2.6" height="1.5" fill="#fff" />
<text transform="translate(1003,227.55)" font-size="9" fill="#fff" text-anchor="middle" textLength="20.7" lengthAdjust="spacingAndGlyphs">INJ 1</text>
<g transform="translate(1006.8,232.5)">
<line x1="4.93" y1="3.7" x2="7" y2="9.25" stroke="#0b0b58" stroke-width="1.2" opacity="0.8"/>
<line x1="10.63" y1="3.7" x2="7" y2="9.25" stroke="#0b0b58" stroke-width="1.2" opacity="0.8"/>
<line x1="3.37" y1="14.8" x2="7" y2="9.25" stroke="#0b0b58" stroke-width="1.2" opacity="0.8"/>
<line x1="9.07" y1="14.8" x2="7" y2="9.25" stroke="#0b0b58" stroke-width="1.2" opacity="0.8"/>
<line x1="3.352" y1="9.25" x2="10.648" y2="9.25" stroke="#0b0b58" stroke-width="1.8" opacity="1"/>
<polygon points="3.7,0.0 13.8,0.0 8.5,3.7" fill="#c8c8f4" class="aa"/>
<polygon points="0.2,18.5 10.3,18.5 5.8,14.8" fill="#c8c8f4" class="aa"/>
<polygon points="2.5,0.9 1.4,8.5 5.3,5.0" fill="#c8c8f4" class="aa"/>
<polygon points="13.9,0.9 12.8,8.5 9.9,5.0" fill="#c8c8f4" class="aa"/>
<polygon points="1.2,10.0 0.1,17.6 4.3,13.7" fill="#c8c8f4" class="aa"/>
<polygon points="12.6,10.0 11.5,17.6 8.9,13.5" fill="#c8c8f4" class="aa"/>
</g>
<g transform="translate(991.8,232.5)">
<line x1="4.93" y1="3.7" x2="7" y2="9.25" stroke="#0b0b58" stroke-width="1.2" opacity="0.8"/>
<line x1="10.63" y1="3.7" x2="7" y2="9.25" stroke="#0b0b58" stroke-width="1.2" opacity="0.8"/>
<line x1="3.37" y1="14.8" x2="7" y2="9.25" stroke="#0b0b58" stroke-width="1.2" opacity="0.8"/>
<line x1="9.07" y1="14.8" x2="7" y2="9.25" stroke="#0b0b58" stroke-width="1.2" opacity="0.8"/>
<line x1="3.352" y1="9.25" x2="10.648" y2="9.25" stroke="#0b0b58" stroke-width="1.8" opacity="1"/>
<polygon points="3.7,0.0 13.8,0.0 8.5,3.7" fill="#c8c8f4" class="aa"/>
<polygon points="0.2,18.5 10.3,18.5 5.8,14.8" fill="#c8c8f4" class="aa"/>
<polygon points="2.5,0.9 1.4,8.5 5.3,5.0" fill="#c8c8f4" class="aa"/>
<polygon points="13.9,0.9 12.8,8.5 9.9,5.0" fill="#c8c8f4" class="aa"/>
<polygon points="1.2,10.0 0.1,17.6 4.3,13.7" fill="#c8c8f4" class="aa"/>
<polygon points="12.6,10.0 11.5,17.6 8.9,13.5" fill="#c8c8f4" class="aa"/>
</g>
<g transform="translate(976.8,232.5)">
<line x1="4.93" y1="3.7" x2="7" y2="9.25" stroke="#0b0b58" stroke-width="1.2" opacity="0.32"/>
<line x1="10.63" y1="3.7" x2="7" y2="9.25" stroke="#0b0b58" stroke-width="1.2" opacity="0.32"/>
<line x1="3.37" y1="14.8" x2="7" y2="9.25" stroke="#0b0b58" stroke-width="1.2" opacity="0.32"/>
<line x1="9.07" y1="14.8" x2="7" y2="9.25" stroke="#0b0b58" stroke-width="1.2" opacity="0.32"/>
<line x1="3.352" y1="9.25" x2="10.648" y2="9.25" stroke="#0b0b58" stroke-width="1.8" opacity="0.4"/>
<polygon points="3.7,0.0 13.8,0.0 8.5,3.7" fill="#0b0b58" class="aa" opacity="0.4"/>
<polygon points="0.2,18.5 10.3,18.5 5.8,14.8" fill="#0b0b58" class="aa" opacity="0.4"/>
<polygon points="2.5,0.9 1.4,8.5 5.3,5.0" fill="#0b0b58" class="aa" opacity="0.4"/>
<polygon points="13.9,0.9 12.8,8.5 9.9,5.0" fill="#0b0b58" class="aa" opacity="0.4"/>
<polygon points="1.2,10.0 0.1,17.6 4.3,13.7" fill="#0b0b58" class="aa" opacity="0.4"/>
<polygon points="12.6,10.0 11.5,17.6 8.9,13.5" fill="#0b0b58" class="aa" opacity="0.4"/>
</g>
<circle cx="1005.5" cy="251.6" r="1" fill="#c8c8a0"/>
<path d="M964.1 351.8 A72.5 72.5 0 0 1 960.8 358.6 L952.9 354.3 A63.5 63.5 0 0 0 955.9 348.3 Z" fill="#ff9c18" stroke="none" stroke-width="1" />
<path d="M960.8 358.6 A72.5 72.5 0 0 1 952.9 370.1 L946.0 364.3 A63.5 63.5 0 0 0 952.9 354.3 Z" fill="#ff1414" stroke="none" stroke-width="1" />
<line x1="842.015" y1="369.974" x2="848.143" y2="364.831" stroke="#fff" stroke-width="1.9" />
<line x1="830.847" y1="351.75" x2="834.99" y2="349.992" stroke="#fff" stroke-width="1.2" />
<line x1="825.496" y1="331.057" x2="833.452" y2="330.221" stroke="#fff" stroke-width="1.9" />
<line x1="826.428" y1="309.705" x2="830.846" y2="310.563" stroke="#fff" stroke-width="1.2" />
<line x1="833.563" y1="289.557" x2="840.626" y2="293.313" stroke="#fff" stroke-width="1.9" />
<line x1="846.276" y1="272.376" x2="849.458" y2="275.558" stroke="#fff" stroke-width="1.2" />
<line x1="863.457" y1="259.663" x2="867.213" y2="266.726" stroke="#fff" stroke-width="1.9" />
<line x1="883.605" y1="252.528" x2="884.463" y2="256.946" stroke="#fff" stroke-width="1.2" />
<line x1="904.957" y1="251.596" x2="904.121" y2="259.552" stroke="#fff" stroke-width="1.9" />
<line x1="925.65" y1="256.947" x2="923.892" y2="261.09" stroke="#fff" stroke-width="1.2" />
<line x1="943.874" y1="268.115" x2="938.731" y2="274.243" stroke="#fff" stroke-width="1.9" />
<line x1="958.036" y1="284.123" x2="954.262" y2="286.573" stroke="#fff" stroke-width="1.2" />
<line x1="966.899" y1="303.571" x2="959.209" y2="305.777" stroke="#fff" stroke-width="1.9" />
<line x1="969.689" y1="324.762" x2="965.19" y2="324.683" stroke="#909090" stroke-width="1.2" />
<line x1="966.161" y1="345.842" x2="958.553" y2="343.37" stroke="#fff" stroke-width="1.9" />
<line x1="956.625" y1="364.97" x2="952.939" y2="362.388" stroke="#fff" stroke-width="1.2" />
<text transform="translate(854.502,363.296)" font-size="10.5" fill="#fff" text-anchor="middle" font-weight="bold" >0</text>
<text transform="translate(841.707,333.154)" font-size="10.5" fill="#fff" text-anchor="middle" font-weight="bold" >14</text>
<text transform="translate(847.955,301.01)" font-size="10.5" fill="#fff" text-anchor="middle" font-weight="bold" >28</text>
<text transform="translate(871.11,277.855)" font-size="10.5" fill="#fff" text-anchor="middle" font-weight="bold" >42</text>
<text transform="translate(903.254,271.607)" font-size="10.5" fill="#fff" text-anchor="middle" font-weight="bold" >56</text>
<text transform="translate(933.396,284.402)" font-size="10.5" fill="#fff" text-anchor="middle" font-weight="bold" >70</text>
<text transform="translate(951.231,311.864)" font-size="10.5" fill="#fff" text-anchor="middle" font-weight="bold" >84</text>
<text transform="translate(950.659,344.605)" font-size="10.5" fill="#fff" text-anchor="middle" font-weight="bold" >98</text>
<text transform="translate(897.4,311)" font-size="12" fill="#d8d8d8" text-anchor="middle" >Load</text>
<text transform="translate(897.4,341.5)" font-size="11" fill="#d8d8d8" text-anchor="middle" >%</text>
<circle cx="897.4" cy="323.5" r="5.6" fill="#a8a8a8"/>
<polygon points="896.6,321.7 899.0,324.6 859.8,355.7 859.2,354.9" fill="#f01818" class="aa"/>
<g transform="translate(906,346.3)">
<line x1="4.18" y1="3.4" x2="5.5" y2="8.5" stroke="#0b0b58" stroke-width="1.2" opacity="0.8"/>
<line x1="8.38" y1="3.4" x2="5.5" y2="8.5" stroke="#0b0b58" stroke-width="1.2" opacity="0.8"/>
<line x1="2.62" y1="13.6" x2="5.5" y2="8.5" stroke="#0b0b58" stroke-width="1.2" opacity="0.8"/>
<line x1="6.82" y1="13.6" x2="5.5" y2="8.5" stroke="#0b0b58" stroke-width="1.2" opacity="0.8"/>
<line x1="2.812" y1="8.5" x2="8.188" y2="8.5" stroke="#0b0b58" stroke-width="1.8" opacity="1"/>
<polygon points="4.1,0.0 10.6,0.0 7.9,1.9 6.2,1.9" fill="#c8c8f4" class="aa"/>
<polygon points="0.4,17.0 6.9,17.0 4.8,15.1 3.1,15.1" fill="#c8c8f4" class="aa"/>
<polygon points="2.6,1.4 1.5,7.5 3.0,5.1" fill="#c8c8f4" class="aa"/>
<polygon points="10.8,1.4 9.7,7.5 8.4,4.8" fill="#c8c8f4" class="aa"/>
<polygon points="1.3,9.5 0.2,15.6 2.7,12.6" fill="#c8c8f4" class="aa"/>
<polygon points="9.5,9.5 8.4,15.6 7.8,12.2" fill="#c8c8f4" class="aa"/>
</g>
<g transform="translate(894.5,346.3)">
<line x1="4.18" y1="3.4" x2="5.5" y2="8.5" stroke="#0b0b58" stroke-width="1.2" opacity="0.32"/>
<line x1="8.38" y1="3.4" x2="5.5" y2="8.5" stroke="#0b0b58" stroke-width="1.2" opacity="0.32"/>
<line x1="2.62" y1="13.6" x2="5.5" y2="8.5" stroke="#0b0b58" stroke-width="1.2" opacity="0.32"/>
<line x1="6.82" y1="13.6" x2="5.5" y2="8.5" stroke="#0b0b58" stroke-width="1.2" opacity="0.32"/>
<line x1="2.812" y1="8.5" x2="8.188" y2="8.5" stroke="#0b0b58" stroke-width="1.8" opacity="0.4"/>
<polygon points="4.1,0.0 10.6,0.0 7.9,1.9 6.2,1.9" fill="#0b0b58" class="aa" opacity="0.4"/>
<polygon points="0.4,17.0 6.9,17.0 4.8,15.1 3.1,15.1" fill="#0b0b58" class="aa" opacity="0.4"/>
<polygon points="2.6,1.4 1.5,7.5 3.0,5.1" fill="#0b0b58" class="aa" opacity="0.4"/>
<polygon points="10.8,1.4 9.7,7.5 8.4,4.8" fill="#0b0b58" class="aa" opacity="0.4"/>
<polygon points="1.3,9.5 0.2,15.6 2.7,12.6" fill="#0b0b58" class="aa" opacity="0.4"/>
<polygon points="9.5,9.5 8.4,15.6 7.8,12.2" fill="#0b0b58" class="aa" opacity="0.4"/>
</g>
<g transform="translate(883,346.3)">
<line x1="4.18" y1="3.4" x2="5.5" y2="8.5" stroke="#0b0b58" stroke-width="1.2" opacity="0.32"/>
<line x1="8.38" y1="3.4" x2="5.5" y2="8.5" stroke="#0b0b58" stroke-width="1.2" opacity="0.32"/>
<line x1="2.62" y1="13.6" x2="5.5" y2="8.5" stroke="#0b0b58" stroke-width="1.2" opacity="0.32"/>
<line x1="6.82" y1="13.6" x2="5.5" y2="8.5" stroke="#0b0b58" stroke-width="1.2" opacity="0.32"/>
<line x1="2.812" y1="8.5" x2="8.188" y2="8.5" stroke="#0b0b58" stroke-width="1.8" opacity="0.4"/>
<polygon points="4.1,0.0 10.6,0.0 7.9,1.9 6.2,1.9" fill="#0b0b58" class="aa" opacity="0.4"/>
<polygon points="0.4,17.0 6.9,17.0 4.8,15.1 3.1,15.1" fill="#0b0b58" class="aa" opacity="0.4"/>
<polygon points="2.6,1.4 1.5,7.5 3.0,5.1" fill="#0b0b58" class="aa" opacity="0.4"/>
<polygon points="10.8,1.4 9.7,7.5 8.4,4.8" fill="#0b0b58" class="aa" opacity="0.4"/>
<polygon points="1.3,9.5 0.2,15.6 2.7,12.6" fill="#0b0b58" class="aa" opacity="0.4"/>
<polygon points="9.5,9.5 8.4,15.6 7.8,12.2" fill="#0b0b58" class="aa" opacity="0.4"/>
</g>
<rect x="1005" y="260" width="14" height="110" fill="#707070" />
<rect x="1004.4" y="260" width="0.8" height="110" fill="#8c8c50" />
<rect x="1005" y="367.8" width="14" height="2.2" fill="#20c8a0" />
<rect x="997.5" y="258.9" width="5.5" height="1.8" fill="#fff" />
<text transform="translate(994.5,262.45)" font-size="7.6" fill="#fff" text-anchor="end" >80</text>
<rect x="997.5" y="271.02" width="5.5" height="1.8" fill="#fff" />
<text transform="translate(994.5,274.57)" font-size="7.6" fill="#fff" text-anchor="end" >70</text>
<rect x="997.5" y="283.14" width="5.5" height="1.8" fill="#fff" />
<text transform="translate(994.5,286.69)" font-size="7.6" fill="#fff" text-anchor="end" >60</text>
<rect x="997.5" y="295.26" width="5.5" height="1.8" fill="#fff" />
<text transform="translate(994.5,298.81)" font-size="7.6" fill="#fff" text-anchor="end" >50</text>
<rect x="997.5" y="307.38" width="5.5" height="1.8" fill="#fff" />
<text transform="translate(994.5,310.93)" font-size="7.6" fill="#fff" text-anchor="end" >40</text>
<rect x="997.5" y="319.5" width="5.5" height="1.8" fill="#fff" />
<text transform="translate(994.5,323.05)" font-size="7.6" fill="#fff" text-anchor="end" >30</text>
<rect x="997.5" y="331.62" width="5.5" height="1.8" fill="#fff" />
<text transform="translate(994.5,335.17)" font-size="7.6" fill="#fff" text-anchor="end" >20</text>
<rect x="997.5" y="343.74" width="5.5" height="1.8" fill="#fff" />
<text transform="translate(994.5,347.29)" font-size="7.6" fill="#fff" text-anchor="end" >10</text>
<rect x="997.5" y="355.86" width="5.5" height="1.8" fill="#fff" />
<text transform="translate(994.5,359.41)" font-size="7.6" fill="#fff" text-anchor="end" >0</text>
<rect x="997.5" y="367.98" width="5.5" height="1.8" fill="#fff" />
<text transform="translate(994.5,371.53)" font-size="7.6" fill="#fff" text-anchor="end" >-10</text>
<rect x="1000.4" y="265.06" width="2.6" height="1.5" fill="#fff" />
<rect x="1000.4" y="277.18" width="2.6" height="1.5" fill="#fff" />
<rect x="1000.4" y="289.3" width="2.6" height="1.5" fill="#fff" />
<rect x="1000.4" y="301.42" width="2.6" height="1.5" fill="#fff" />
<rect x="1000.4" y="313.54" width="2.6" height="1.5" fill="#fff" />
<rect x="1000.4" y="325.66" width="2.6" height="1.5" fill="#fff" />
<rect x="1000.4" y="337.78" width="2.6" height="1.5" fill="#fff" />
<rect x="1000.4" y="349.9" width="2.6" height="1.5" fill="#fff" />
<rect x="1000.4" y="362.02" width="2.6" height="1.5" fill="#fff" />
<text transform="translate(1003,382.75)" font-size="9" fill="#fff" text-anchor="middle" textLength="15.8" lengthAdjust="spacingAndGlyphs">IGN</text>
<g transform="translate(1006.8,389)">
<line x1="4.93" y1="3.7" x2="7" y2="9.25" stroke="#0b0b58" stroke-width="1.2" opacity="0.8"/>
<line x1="10.63" y1="3.7" x2="7" y2="9.25" stroke="#0b0b58" stroke-width="1.2" opacity="0.8"/>
<line x1="3.37" y1="14.8" x2="7" y2="9.25" stroke="#0b0b58" stroke-width="1.2" opacity="0.8"/>
<line x1="9.07" y1="14.8" x2="7" y2="9.25" stroke="#0b0b58" stroke-width="1.2" opacity="0.8"/>
<line x1="3.352" y1="9.25" x2="10.648" y2="9.25" stroke="#0b0b58" stroke-width="1.8" opacity="1"/>
<polygon points="3.7,0.0 13.8,0.0 8.5,3.7" fill="#c8c8f4" class="aa"/>
<polygon points="0.2,18.5 10.3,18.5 5.8,14.8" fill="#c8c8f4" class="aa"/>
<polygon points="2.5,0.9 1.4,8.5 5.3,5.0" fill="#c8c8f4" class="aa"/>
<polygon points="13.9,0.9 12.8,8.5 9.9,5.0" fill="#c8c8f4" class="aa"/>
<polygon points="1.2,10.0 0.1,17.6 4.3,13.7" fill="#c8c8f4" class="aa"/>
<polygon points="12.6,10.0 11.5,17.6 8.9,13.5" fill="#c8c8f4" class="aa"/>
</g>
<g transform="translate(991.8,389)">
<line x1="4.93" y1="3.7" x2="7" y2="9.25" stroke="#0b0b58" stroke-width="1.2" opacity="0.8"/>
<line x1="10.63" y1="3.7" x2="7" y2="9.25" stroke="#0b0b58" stroke-width="1.2" opacity="0.8"/>
<line x1="3.37" y1="14.8" x2="7" y2="9.25" stroke="#0b0b58" stroke-width="1.2" opacity="0.8"/>
<line x1="9.07" y1="14.8" x2="7" y2="9.25" stroke="#0b0b58" stroke-width="1.2" opacity="0.8"/>
<line x1="3.352" y1="9.25" x2="10.648" y2="9.25" stroke="#0b0b58" stroke-width="1.8" opacity="1"/>
<polygon points="3.7,0.0 13.8,0.0 8.5,3.7" fill="#c8c8f4" class="aa"/>
<polygon points="0.2,18.5 10.3,18.5 5.8,14.8" fill="#c8c8f4" class="aa"/>
<polygon points="2.5,0.9 1.4,8.5 5.3,5.0" fill="#c8c8f4" class="aa"/>
<polygon points="13.9,0.9 12.8,8.5 9.9,5.0" fill="#c8c8f4" class="aa"/>
<polygon points="1.2,10.0 0.1,17.6 4.3,13.7" fill="#c8c8f4" class="aa"/>
<polygon points="12.6,10.0 11.5,17.6 8.9,13.5" fill="#c8c8f4" class="aa"/>
</g>
<g transform="translate(976.8,389)">
<line x1="4.93" y1="3.7" x2="7" y2="9.25" stroke="#0b0b58" stroke-width="1.2" opacity="0.32"/>
<line x1="10.63" y1="3.7" x2="7" y2="9.25" stroke="#0b0b58" stroke-width="1.2" opacity="0.32"/>
<line x1="3.37" y1="14.8" x2="7" y2="9.25" stroke="#0b0b58" stroke-width="1.2" opacity="0.32"/>
<line x1="9.07" y1="14.8" x2="7" y2="9.25" stroke="#0b0b58" stroke-width="1.2" opacity="0.32"/>
<line x1="3.352" y1="9.25" x2="10.648" y2="9.25" stroke="#0b0b58" stroke-width="1.8" opacity="0.4"/>
<polygon points="3.7,0.0 13.8,0.0 8.5,3.7" fill="#0b0b58" class="aa" opacity="0.4"/>
<polygon points="0.2,18.5 10.3,18.5 5.8,14.8" fill="#0b0b58" class="aa" opacity="0.4"/>
<polygon points="2.5,0.9 1.4,8.5 5.3,5.0" fill="#0b0b58" class="aa" opacity="0.4"/>
<polygon points="13.9,0.9 12.8,8.5 9.9,5.0" fill="#0b0b58" class="aa" opacity="0.4"/>
<polygon points="1.2,10.0 0.1,17.6 4.3,13.7" fill="#0b0b58" class="aa" opacity="0.4"/>
<polygon points="12.6,10.0 11.5,17.6 8.9,13.5" fill="#0b0b58" class="aa" opacity="0.4"/>
</g>
<g transform="translate(961.8,389)">
<line x1="4.93" y1="3.7" x2="7" y2="9.25" stroke="#0b0b58" stroke-width="1.2" opacity="0.32"/>
<line x1="10.63" y1="3.7" x2="7" y2="9.25" stroke="#0b0b58" stroke-width="1.2" opacity="0.32"/>
<line x1="3.37" y1="14.8" x2="7" y2="9.25" stroke="#0b0b58" stroke-width="1.2" opacity="0.32"/>
<line x1="9.07" y1="14.8" x2="7" y2="9.25" stroke="#0b0b58" stroke-width="1.2" opacity="0.32"/>
<line x1="3.352" y1="9.25" x2="10.648" y2="9.25" stroke="#0b0b58" stroke-width="1.8" opacity="0.4"/>
<polygon points="3.7,0.0 13.8,0.0 8.5,3.7" fill="#0b0b58" class="aa" opacity="0.4"/>
<polygon points="0.2,18.5 10.3,18.5 5.8,14.8" fill="#0b0b58" class="aa" opacity="0.4"/>
<polygon points="2.5,0.9 1.4,8.5 5.3,5.0" fill="#0b0b58" class="aa" opacity="0.4"/>
<polygon points="13.9,0.9 12.8,8.5 9.9,5.0" fill="#0b0b58" class="aa" opacity="0.4"/>
<polygon points="1.2,10.0 0.1,17.6 4.3,13.7" fill="#0b0b58" class="aa" opacity="0.4"/>
<polygon points="12.6,10.0 11.5,17.6 8.9,13.5" fill="#0b0b58" class="aa" opacity="0.4"/>
</g>
<circle cx="1005.5" cy="408.1" r="1" fill="#c8c8a0"/>
<rect x="845" y="414" width="14" height="82" fill="#707070" />
<rect x="844.4" y="414" width="0.8" height="82" fill="#8c8c50" />
<rect x="845" y="493.8" width="14" height="2.2" fill="#18d8d8" />
<rect x="837.5" y="412.6" width="5.5" height="1.8" fill="#fff" />
<text transform="translate(834.5,416.15) scale(1.08,1)" font-size="7.6" fill="#fff" text-anchor="end" >30</text>
<rect x="837.5" y="426.13" width="5.5" height="1.8" fill="#fff" />
<text transform="translate(834.5,429.68) scale(1.08,1)" font-size="7.6" fill="#fff" text-anchor="end" >25</text>
<rect x="837.5" y="439.66" width="5.5" height="1.8" fill="#fff" />
<text transform="translate(834.5,443.21) scale(1.08,1)" font-size="7.6" fill="#fff" text-anchor="end" >20</text>
<rect x="837.5" y="453.19" width="5.5" height="1.8" fill="#fff" />
<text transform="translate(834.5,456.74) scale(1.08,1)" font-size="7.6" fill="#fff" text-anchor="end" >15</text>
<rect x="837.5" y="466.72" width="5.5" height="1.8" fill="#fff" />
<text transform="translate(834.5,470.27) scale(1.08,1)" font-size="7.6" fill="#fff" text-anchor="end" >10</text>
<rect x="837.5" y="480.25" width="5.5" height="1.8" fill="#fff" />
<text transform="translate(834.5,483.8) scale(1.08,1)" font-size="7.6" fill="#fff" text-anchor="end" >5</text>
<rect x="837.5" y="493.78" width="5.5" height="1.8" fill="#fff" />
<text transform="translate(834.5,497.33) scale(1.08,1)" font-size="7.6" fill="#fff" text-anchor="end" >0</text>
<rect x="840.4" y="419.465" width="2.6" height="1.5" fill="#fff" />
<rect x="840.4" y="432.995" width="2.6" height="1.5" fill="#fff" />
<rect x="840.4" y="446.525" width="2.6" height="1.5" fill="#fff" />
<rect x="840.4" y="460.055" width="2.6" height="1.5" fill="#fff" />
<rect x="840.4" y="473.585" width="2.6" height="1.5" fill="#fff" />
<rect x="840.4" y="487.115" width="2.6" height="1.5" fill="#fff" />
<rect x="885" y="414" width="14" height="82" fill="#707070" />
<rect x="884.4" y="414" width="0.8" height="82" fill="#8c8c50" />
<rect x="885" y="493.8" width="14" height="2.2" fill="#18d8d8" />
<rect x="877.5" y="417.6" width="5.5" height="1.8" fill="#fff" />
<text transform="translate(874.5,421.15) scale(0.82,1)" font-size="7.6" fill="#fff" text-anchor="end" >100</text>
<rect x="877.5" y="425.22" width="5.5" height="1.8" fill="#fff" />
<text transform="translate(874.5,428.77) scale(0.82,1)" font-size="7.6" fill="#fff" text-anchor="end" >90</text>
<rect x="877.5" y="432.84" width="5.5" height="1.8" fill="#fff" />
<text transform="translate(874.5,436.39) scale(0.82,1)" font-size="7.6" fill="#fff" text-anchor="end" >80</text>
<rect x="877.5" y="440.46" width="5.5" height="1.8" fill="#fff" />
<text transform="translate(874.5,444.01) scale(0.82,1)" font-size="7.6" fill="#fff" text-anchor="end" >70</text>
<rect x="877.5" y="448.08" width="5.5" height="1.8" fill="#fff" />
<text transform="translate(874.5,451.63) scale(0.82,1)" font-size="7.6" fill="#fff" text-anchor="end" >60</text>
<rect x="877.5" y="455.7" width="5.5" height="1.8" fill="#fff" />
<text transform="translate(874.5,459.25) scale(0.82,1)" font-size="7.6" fill="#fff" text-anchor="end" >50</text>
<rect x="877.5" y="463.32" width="5.5" height="1.8" fill="#fff" />
<text transform="translate(874.5,466.87) scale(0.82,1)" font-size="7.6" fill="#fff" text-anchor="end" >40</text>
<rect x="877.5" y="470.94" width="5.5" height="1.8" fill="#fff" />
<text transform="translate(874.5,474.49) scale(0.82,1)" font-size="7.6" fill="#fff" text-anchor="end" >30</text>
<rect x="877.5" y="478.56" width="5.5" height="1.8" fill="#fff" />
<text transform="translate(874.5,482.11) scale(0.82,1)" font-size="7.6" fill="#fff" text-anchor="end" >20</text>
<rect x="877.5" y="486.18" width="5.5" height="1.8" fill="#fff" />
<text transform="translate(874.5,489.73) scale(0.82,1)" font-size="7.6" fill="#fff" text-anchor="end" >10</text>
<rect x="877.5" y="493.8" width="5.5" height="1.8" fill="#fff" />
<text transform="translate(874.5,497.35) scale(0.82,1)" font-size="7.6" fill="#fff" text-anchor="end" >0</text>
<rect x="925" y="414" width="14" height="82" fill="#707070" />
<rect x="924.4" y="414" width="0.8" height="82" fill="#8c8c50" />
<rect x="925" y="493.8" width="14" height="2.2" fill="#18d8d8" />
<rect x="917.5" y="417.6" width="5.5" height="1.8" fill="#fff" />
<text transform="translate(916,421.15)" font-size="7.6" fill="#fff" text-anchor="end" >140</text>
<rect x="917.5" y="427.125" width="5.5" height="1.8" fill="#fff" />
<text transform="translate(916,430.675)" font-size="7.6" fill="#fff" text-anchor="end" >120</text>
<rect x="917.5" y="436.65" width="5.5" height="1.8" fill="#fff" />
<text transform="translate(916,440.2)" font-size="7.6" fill="#fff" text-anchor="end" >100</text>
<rect x="917.5" y="446.175" width="5.5" height="1.8" fill="#fff" />
<text transform="translate(916,449.725)" font-size="7.6" fill="#fff" text-anchor="end" >80</text>
<rect x="917.5" y="455.7" width="5.5" height="1.8" fill="#fff" />
<text transform="translate(916,459.25)" font-size="7.6" fill="#fff" text-anchor="end" >60</text>
<rect x="917.5" y="465.225" width="5.5" height="1.8" fill="#fff" />
<text transform="translate(916,468.775)" font-size="7.6" fill="#fff" text-anchor="end" >40</text>
<rect x="917.5" y="474.75" width="5.5" height="1.8" fill="#fff" />
<text transform="translate(916,478.3)" font-size="7.6" fill="#fff" text-anchor="end" >20</text>
<rect x="917.5" y="484.275" width="5.5" height="1.8" fill="#fff" />
<text transform="translate(916,487.825)" font-size="7.6" fill="#fff" text-anchor="end" >0</text>
<rect x="917.5" y="493.8" width="5.5" height="1.8" fill="#fff" />
<text transform="translate(916,497.35)" font-size="7.6" fill="#fff" text-anchor="end" >-20</text>
<rect x="920.4" y="422.462" width="2.6" height="1.5" fill="#fff" />
<rect x="920.4" y="431.988" width="2.6" height="1.5" fill="#fff" />
<rect x="920.4" y="441.512" width="2.6" height="1.5" fill="#fff" />
<rect x="920.4" y="451.037" width="2.6" height="1.5" fill="#fff" />
<rect x="920.4" y="460.562" width="2.6" height="1.5" fill="#fff" />
<rect x="920.4" y="470.087" width="2.6" height="1.5" fill="#fff" />
<rect x="920.4" y="479.613" width="2.6" height="1.5" fill="#fff" />
<rect x="920.4" y="489.137" width="2.6" height="1.5" fill="#fff" />
<rect x="965" y="414" width="14" height="82" fill="#707070" />
<rect x="964.4" y="414" width="0.8" height="82" fill="#8c8c50" />
<rect x="965" y="493.8" width="14" height="2.2" fill="#18d8d8" />
<rect x="957.5" y="417.6" width="5.5" height="1.8" fill="#fff" />
<text transform="translate(956,421.15)" font-size="7.6" fill="#fff" text-anchor="end" >140</text>
<rect x="957.5" y="427.125" width="5.5" height="1.8" fill="#fff" />
<text transform="translate(956,430.675)" font-size="7.6" fill="#fff" text-anchor="end" >120</text>
<rect x="957.5" y="436.65" width="5.5" height="1.8" fill="#fff" />
<text transform="translate(956,440.2)" font-size="7.6" fill="#fff" text-anchor="end" >100</text>
<rect x="957.5" y="446.175" width="5.5" height="1.8" fill="#fff" />
<text transform="translate(956,449.725)" font-size="7.6" fill="#fff" text-anchor="end" >80</text>
<rect x="957.5" y="455.7" width="5.5" height="1.8" fill="#fff" />
<text transform="translate(956,459.25)" font-size="7.6" fill="#fff" text-anchor="end" >60</text>
<rect x="957.5" y="465.225" width="5.5" height="1.8" fill="#fff" />
<text transform="translate(956,468.775)" font-size="7.6" fill="#fff" text-anchor="end" >40</text>
<rect x="957.5" y="474.75" width="5.5" height="1.8" fill="#fff" />
<text transform="translate(956,478.3)" font-size="7.6" fill="#fff" text-anchor="end" >20</text>
<rect x="957.5" y="484.275" width="5.5" height="1.8" fill="#fff" />
<text transform="translate(956,487.825)" font-size="7.6" fill="#fff" text-anchor="end" >0</text>
<rect x="957.5" y="493.8" width="5.5" height="1.8" fill="#fff" />
<text transform="translate(956,497.35)" font-size="7.6" fill="#fff" text-anchor="end" >-20</text>
<rect x="960.4" y="422.462" width="2.6" height="1.5" fill="#fff" />
<rect x="960.4" y="431.988" width="2.6" height="1.5" fill="#fff" />
<rect x="960.4" y="441.512" width="2.6" height="1.5" fill="#fff" />
<rect x="960.4" y="451.037" width="2.6" height="1.5" fill="#fff" />
<rect x="960.4" y="460.562" width="2.6" height="1.5" fill="#fff" />
<rect x="960.4" y="470.087" width="2.6" height="1.5" fill="#fff" />
<rect x="960.4" y="479.613" width="2.6" height="1.5" fill="#fff" />
<rect x="960.4" y="489.137" width="2.6" height="1.5" fill="#fff" />
<rect x="1005" y="414" width="14" height="82" fill="#707070" />
<rect x="1004.4" y="414" width="0.8" height="82" fill="#8c8c50" />
<rect x="1005" y="493.8" width="14" height="2.2" fill="#18d8d8" />
<rect x="997.5" y="412.6" width="5.5" height="1.8" fill="#fff" />
<text transform="translate(994.5,416.15) scale(0.8,1)" font-size="7.6" fill="#fff" text-anchor="end" >100</text>
<rect x="997.5" y="420.72" width="5.5" height="1.8" fill="#fff" />
<text transform="translate(994.5,424.27) scale(0.8,1)" font-size="7.6" fill="#fff" text-anchor="end" >90</text>
<rect x="997.5" y="428.84" width="5.5" height="1.8" fill="#fff" />
<text transform="translate(994.5,432.39) scale(0.8,1)" font-size="7.6" fill="#fff" text-anchor="end" >80</text>
<rect x="997.5" y="436.96" width="5.5" height="1.8" fill="#fff" />
<text transform="translate(994.5,440.51) scale(0.8,1)" font-size="7.6" fill="#fff" text-anchor="end" >70</text>
<rect x="997.5" y="445.08" width="5.5" height="1.8" fill="#fff" />
<text transform="translate(994.5,448.63) scale(0.8,1)" font-size="7.6" fill="#fff" text-anchor="end" >60</text>
<rect x="997.5" y="453.2" width="5.5" height="1.8" fill="#fff" />
<text transform="translate(994.5,456.75) scale(0.8,1)" font-size="7.6" fill="#fff" text-anchor="end" >50</text>
<rect x="997.5" y="461.32" width="5.5" height="1.8" fill="#fff" />
<text transform="translate(994.5,464.87) scale(0.8,1)" font-size="7.6" fill="#fff" text-anchor="end" >40</text>
<rect x="997.5" y="469.44" width="5.5" height="1.8" fill="#fff" />
<text transform="translate(994.5,472.99) scale(0.8,1)" font-size="7.6" fill="#fff" text-anchor="end" >30</text>
<rect x="997.5" y="477.56" width="5.5" height="1.8" fill="#fff" />
<text transform="translate(994.5,481.11) scale(0.8,1)" font-size="7.6" fill="#fff" text-anchor="end" >20</text>
<rect x="997.5" y="485.68" width="5.5" height="1.8" fill="#fff" />
<text transform="translate(994.5,489.23) scale(0.8,1)" font-size="7.6" fill="#fff" text-anchor="end" >10</text>
<rect x="997.5" y="493.8" width="5.5" height="1.8" fill="#fff" />
<text transform="translate(994.5,497.35) scale(0.8,1)" font-size="7.6" fill="#fff" text-anchor="end" >0</text>
<rect x="1000.4" y="416.76" width="2.6" height="1.5" fill="#fff" />
<rect x="1000.4" y="424.88" width="2.6" height="1.5" fill="#fff" />
<rect x="1000.4" y="433" width="2.6" height="1.5" fill="#fff" />
<rect x="1000.4" y="441.12" width="2.6" height="1.5" fill="#fff" />
<rect x="1000.4" y="449.24" width="2.6" height="1.5" fill="#fff" />
<rect x="1000.4" y="457.36" width="2.6" height="1.5" fill="#fff" />
<rect x="1000.4" y="465.48" width="2.6" height="1.5" fill="#fff" />
<rect x="1000.4" y="473.6" width="2.6" height="1.5" fill="#fff" />
<rect x="1000.4" y="481.72" width="2.6" height="1.5" fill="#fff" />
<rect x="1000.4" y="489.84" width="2.6" height="1.5" fill="#fff" />
<text transform="translate(842.7,508.25)" font-size="9" fill="#fff" text-anchor="middle" textLength="14" lengthAdjust="spacingAndGlyphs">PSI</text>
<text transform="translate(882,508.25)" font-size="9" fill="#fff" text-anchor="middle" textLength="22.5" lengthAdjust="spacingAndGlyphs">TPOS</text>
<text transform="translate(922,508.25)" font-size="9" fill="#fff" text-anchor="middle" textLength="27.3" lengthAdjust="spacingAndGlyphs">ENG-T</text>
<text transform="translate(962,508.25)" font-size="9" fill="#fff" text-anchor="middle" textLength="22.5" lengthAdjust="spacingAndGlyphs">AIR-T</text>
<text transform="translate(1003,508.25)" font-size="9" fill="#fff" text-anchor="middle" textLength="23.8" lengthAdjust="spacingAndGlyphs">DUTY</text>
<g transform="translate(849.5,512.3)">
<line x1="4.18" y1="3.4" x2="5.5" y2="8.5" stroke="#0b0b58" stroke-width="1.2" opacity="0.8"/>
<line x1="8.38" y1="3.4" x2="5.5" y2="8.5" stroke="#0b0b58" stroke-width="1.2" opacity="0.8"/>
<line x1="2.62" y1="13.6" x2="5.5" y2="8.5" stroke="#0b0b58" stroke-width="1.2" opacity="0.8"/>
<line x1="6.82" y1="13.6" x2="5.5" y2="8.5" stroke="#0b0b58" stroke-width="1.2" opacity="0.8"/>
<line x1="2.812" y1="8.5" x2="8.188" y2="8.5" stroke="#0b0b58" stroke-width="1.8" opacity="1"/>
<polygon points="4.1,0.0 10.6,0.0 7.9,1.9 6.2,1.9" fill="#c8c8f4" class="aa"/>
<polygon points="0.4,17.0 6.9,17.0 4.8,15.1 3.1,15.1" fill="#c8c8f4" class="aa"/>
<polygon points="2.6,1.4 1.5,7.5 3.0,5.1" fill="#c8c8f4" class="aa"/>
<polygon points="10.8,1.4 9.7,7.5 8.4,4.8" fill="#c8c8f4" class="aa"/>
<polygon points="1.3,9.5 0.2,15.6 2.7,12.6" fill="#c8c8f4" class="aa"/>
<polygon points="9.5,9.5 8.4,15.6 7.8,12.2" fill="#c8c8f4" class="aa"/>
</g>
<g transform="translate(838,512.3)">
<line x1="4.18" y1="3.4" x2="5.5" y2="8.5" stroke="#0b0b58" stroke-width="1.2" opacity="0.8"/>
<line x1="8.38" y1="3.4" x2="5.5" y2="8.5" stroke="#0b0b58" stroke-width="1.2" opacity="0.8"/>
<line x1="2.62" y1="13.6" x2="5.5" y2="8.5" stroke="#0b0b58" stroke-width="1.2" opacity="0.8"/>
<line x1="6.82" y1="13.6" x2="5.5" y2="8.5" stroke="#0b0b58" stroke-width="1.2" opacity="0.8"/>
<line x1="2.812" y1="8.5" x2="8.188" y2="8.5" stroke="#0b0b58" stroke-width="1.8" opacity="1"/>
<polygon points="4.1,0.0 10.6,0.0 7.9,1.9 6.2,1.9" fill="#c8c8f4" class="aa"/>
<polygon points="0.4,17.0 6.9,17.0 4.8,15.1 3.1,15.1" fill="#c8c8f4" class="aa"/>
<polygon points="2.6,1.4 1.5,7.5 3.0,5.1" fill="#c8c8f4" class="aa"/>
<polygon points="10.8,1.4 9.7,7.5 8.4,4.8" fill="#c8c8f4" class="aa"/>
<polygon points="1.3,9.5 0.2,15.6 2.7,12.6" fill="#c8c8f4" class="aa"/>
<polygon points="9.5,9.5 8.4,15.6 7.8,12.2" fill="#c8c8f4" class="aa"/>
</g>
<g transform="translate(826.5,512.3)">
<line x1="4.18" y1="3.4" x2="5.5" y2="8.5" stroke="#0b0b58" stroke-width="1.2" opacity="0.32"/>
<line x1="8.38" y1="3.4" x2="5.5" y2="8.5" stroke="#0b0b58" stroke-width="1.2" opacity="0.32"/>
<line x1="2.62" y1="13.6" x2="5.5" y2="8.5" stroke="#0b0b58" stroke-width="1.2" opacity="0.32"/>
<line x1="6.82" y1="13.6" x2="5.5" y2="8.5" stroke="#0b0b58" stroke-width="1.2" opacity="0.32"/>
<line x1="2.812" y1="8.5" x2="8.188" y2="8.5" stroke="#0b0b58" stroke-width="1.8" opacity="0.4"/>
<polygon points="4.1,0.0 10.6,0.0 7.9,1.9 6.2,1.9" fill="#0b0b58" class="aa" opacity="0.4"/>
<polygon points="0.4,17.0 6.9,17.0 4.8,15.1 3.1,15.1" fill="#0b0b58" class="aa" opacity="0.4"/>
<polygon points="2.6,1.4 1.5,7.5 3.0,5.1" fill="#0b0b58" class="aa" opacity="0.4"/>
<polygon points="10.8,1.4 9.7,7.5 8.4,4.8" fill="#0b0b58" class="aa" opacity="0.4"/>
<polygon points="1.3,9.5 0.2,15.6 2.7,12.6" fill="#0b0b58" class="aa" opacity="0.4"/>
<polygon points="9.5,9.5 8.4,15.6 7.8,12.2" fill="#0b0b58" class="aa" opacity="0.4"/>
</g>
<circle cx="848.7" cy="529.9" r="1" fill="#c8c8a0"/>
<g transform="translate(889.5,512.3)">
<line x1="4.18" y1="3.4" x2="5.5" y2="8.5" stroke="#0b0b58" stroke-width="1.2" opacity="0.8"/>
<line x1="8.38" y1="3.4" x2="5.5" y2="8.5" stroke="#0b0b58" stroke-width="1.2" opacity="0.8"/>
<line x1="2.62" y1="13.6" x2="5.5" y2="8.5" stroke="#0b0b58" stroke-width="1.2" opacity="0.8"/>
<line x1="6.82" y1="13.6" x2="5.5" y2="8.5" stroke="#0b0b58" stroke-width="1.2" opacity="0.8"/>
<line x1="2.812" y1="8.5" x2="8.188" y2="8.5" stroke="#0b0b58" stroke-width="1.8" opacity="1"/>
<polygon points="4.1,0.0 10.6,0.0 7.9,1.9 6.2,1.9" fill="#c8c8f4" class="aa"/>
<polygon points="0.4,17.0 6.9,17.0 4.8,15.1 3.1,15.1" fill="#c8c8f4" class="aa"/>
<polygon points="2.6,1.4 1.5,7.5 3.0,5.1" fill="#c8c8f4" class="aa"/>
<polygon points="10.8,1.4 9.7,7.5 8.4,4.8" fill="#c8c8f4" class="aa"/>
<polygon points="1.3,9.5 0.2,15.6 2.7,12.6" fill="#c8c8f4" class="aa"/>
<polygon points="9.5,9.5 8.4,15.6 7.8,12.2" fill="#c8c8f4" class="aa"/>
</g>
<g transform="translate(878,512.3)">
<line x1="4.18" y1="3.4" x2="5.5" y2="8.5" stroke="#0b0b58" stroke-width="1.2" opacity="0.32"/>
<line x1="8.38" y1="3.4" x2="5.5" y2="8.5" stroke="#0b0b58" stroke-width="1.2" opacity="0.32"/>
<line x1="2.62" y1="13.6" x2="5.5" y2="8.5" stroke="#0b0b58" stroke-width="1.2" opacity="0.32"/>
<line x1="6.82" y1="13.6" x2="5.5" y2="8.5" stroke="#0b0b58" stroke-width="1.2" opacity="0.32"/>
<line x1="2.812" y1="8.5" x2="8.188" y2="8.5" stroke="#0b0b58" stroke-width="1.8" opacity="0.4"/>
<polygon points="4.1,0.0 10.6,0.0 7.9,1.9 6.2,1.9" fill="#0b0b58" class="aa" opacity="0.4"/>
<polygon points="0.4,17.0 6.9,17.0 4.8,15.1 3.1,15.1" fill="#0b0b58" class="aa" opacity="0.4"/>
<polygon points="2.6,1.4 1.5,7.5 3.0,5.1" fill="#0b0b58" class="aa" opacity="0.4"/>
<polygon points="10.8,1.4 9.7,7.5 8.4,4.8" fill="#0b0b58" class="aa" opacity="0.4"/>
<polygon points="1.3,9.5 0.2,15.6 2.7,12.6" fill="#0b0b58" class="aa" opacity="0.4"/>
<polygon points="9.5,9.5 8.4,15.6 7.8,12.2" fill="#0b0b58" class="aa" opacity="0.4"/>
</g>
<g transform="translate(866.5,512.3)">
<line x1="4.18" y1="3.4" x2="5.5" y2="8.5" stroke="#0b0b58" stroke-width="1.2" opacity="0.32"/>
<line x1="8.38" y1="3.4" x2="5.5" y2="8.5" stroke="#0b0b58" stroke-width="1.2" opacity="0.32"/>
<line x1="2.62" y1="13.6" x2="5.5" y2="8.5" stroke="#0b0b58" stroke-width="1.2" opacity="0.32"/>
<line x1="6.82" y1="13.6" x2="5.5" y2="8.5" stroke="#0b0b58" stroke-width="1.2" opacity="0.32"/>
<line x1="2.812" y1="8.5" x2="8.188" y2="8.5" stroke="#0b0b58" stroke-width="1.8" opacity="0.4"/>
<polygon points="4.1,0.0 10.6,0.0 7.9,1.9 6.2,1.9" fill="#0b0b58" class="aa" opacity="0.4"/>
<polygon points="0.4,17.0 6.9,17.0 4.8,15.1 3.1,15.1" fill="#0b0b58" class="aa" opacity="0.4"/>
<polygon points="2.6,1.4 1.5,7.5 3.0,5.1" fill="#0b0b58" class="aa" opacity="0.4"/>
<polygon points="10.8,1.4 9.7,7.5 8.4,4.8" fill="#0b0b58" class="aa" opacity="0.4"/>
<polygon points="1.3,9.5 0.2,15.6 2.7,12.6" fill="#0b0b58" class="aa" opacity="0.4"/>
<polygon points="9.5,9.5 8.4,15.6 7.8,12.2" fill="#0b0b58" class="aa" opacity="0.4"/>
</g>
<g transform="translate(855,512.3)">
<line x1="4.18" y1="3.4" x2="5.5" y2="8.5" stroke="#0b0b58" stroke-width="1.2" opacity="0.32"/>
<line x1="8.38" y1="3.4" x2="5.5" y2="8.5" stroke="#0b0b58" stroke-width="1.2" opacity="0.32"/>
<line x1="2.62" y1="13.6" x2="5.5" y2="8.5" stroke="#0b0b58" stroke-width="1.2" opacity="0.32"/>
<line x1="6.82" y1="13.6" x2="5.5" y2="8.5" stroke="#0b0b58" stroke-width="1.2" opacity="0.32"/>
<line x1="2.812" y1="8.5" x2="8.188" y2="8.5" stroke="#0b0b58" stroke-width="1.8" opacity="0.4"/>
<polygon points="4.1,0.0 10.6,0.0 7.9,1.9 6.2,1.9" fill="#0b0b58" class="aa" opacity="0.4"/>
<polygon points="0.4,17.0 6.9,17.0 4.8,15.1 3.1,15.1" fill="#0b0b58" class="aa" opacity="0.4"/>
<polygon points="2.6,1.4 1.5,7.5 3.0,5.1" fill="#0b0b58" class="aa" opacity="0.4"/>
<polygon points="10.8,1.4 9.7,7.5 8.4,4.8" fill="#0b0b58" class="aa" opacity="0.4"/>
<polygon points="1.3,9.5 0.2,15.6 2.7,12.6" fill="#0b0b58" class="aa" opacity="0.4"/>
<polygon points="9.5,9.5 8.4,15.6 7.8,12.2" fill="#0b0b58" class="aa" opacity="0.4"/>
</g>
<g transform="translate(929.5,512.3)">
<line x1="4.18" y1="3.4" x2="5.5" y2="8.5" stroke="#0b0b58" stroke-width="1.2" opacity="0.8"/>
<line x1="8.38" y1="3.4" x2="5.5" y2="8.5" stroke="#0b0b58" stroke-width="1.2" opacity="0.8"/>
<line x1="2.62" y1="13.6" x2="5.5" y2="8.5" stroke="#0b0b58" stroke-width="1.2" opacity="0.8"/>
<line x1="6.82" y1="13.6" x2="5.5" y2="8.5" stroke="#0b0b58" stroke-width="1.2" opacity="0.8"/>
<line x1="2.812" y1="8.5" x2="8.188" y2="8.5" stroke="#0b0b58" stroke-width="1.8" opacity="1"/>
<polygon points="4.1,0.0 10.6,0.0 7.9,1.9 6.2,1.9" fill="#c8c8f4" class="aa"/>
<polygon points="0.4,17.0 6.9,17.0 4.8,15.1 3.1,15.1" fill="#c8c8f4" class="aa"/>
<polygon points="2.6,1.4 1.5,7.5 3.0,5.1" fill="#c8c8f4" class="aa"/>
<polygon points="10.8,1.4 9.7,7.5 8.4,4.8" fill="#c8c8f4" class="aa"/>
<polygon points="1.3,9.5 0.2,15.6 2.7,12.6" fill="#c8c8f4" class="aa"/>
<polygon points="9.5,9.5 8.4,15.6 7.8,12.2" fill="#c8c8f4" class="aa"/>
</g>
<g transform="translate(918,512.3)">
<line x1="4.18" y1="3.4" x2="5.5" y2="8.5" stroke="#0b0b58" stroke-width="1.2" opacity="0.32"/>
<line x1="8.38" y1="3.4" x2="5.5" y2="8.5" stroke="#0b0b58" stroke-width="1.2" opacity="0.32"/>
<line x1="2.62" y1="13.6" x2="5.5" y2="8.5" stroke="#0b0b58" stroke-width="1.2" opacity="0.32"/>
<line x1="6.82" y1="13.6" x2="5.5" y2="8.5" stroke="#0b0b58" stroke-width="1.2" opacity="0.32"/>
<line x1="2.812" y1="8.5" x2="8.188" y2="8.5" stroke="#0b0b58" stroke-width="1.8" opacity="0.4"/>
<polygon points="4.1,0.0 10.6,0.0 7.9,1.9 6.2,1.9" fill="#0b0b58" class="aa" opacity="0.4"/>
<polygon points="0.4,17.0 6.9,17.0 4.8,15.1 3.1,15.1" fill="#0b0b58" class="aa" opacity="0.4"/>
<polygon points="2.6,1.4 1.5,7.5 3.0,5.1" fill="#0b0b58" class="aa" opacity="0.4"/>
<polygon points="10.8,1.4 9.7,7.5 8.4,4.8" fill="#0b0b58" class="aa" opacity="0.4"/>
<polygon points="1.3,9.5 0.2,15.6 2.7,12.6" fill="#0b0b58" class="aa" opacity="0.4"/>
<polygon points="9.5,9.5 8.4,15.6 7.8,12.2" fill="#0b0b58" class="aa" opacity="0.4"/>
</g>
<g transform="translate(906.5,512.3)">
<line x1="4.18" y1="3.4" x2="5.5" y2="8.5" stroke="#0b0b58" stroke-width="1.2" opacity="0.32"/>
<line x1="8.38" y1="3.4" x2="5.5" y2="8.5" stroke="#0b0b58" stroke-width="1.2" opacity="0.32"/>
<line x1="2.62" y1="13.6" x2="5.5" y2="8.5" stroke="#0b0b58" stroke-width="1.2" opacity="0.32"/>
<line x1="6.82" y1="13.6" x2="5.5" y2="8.5" stroke="#0b0b58" stroke-width="1.2" opacity="0.32"/>
<line x1="2.812" y1="8.5" x2="8.188" y2="8.5" stroke="#0b0b58" stroke-width="1.8" opacity="0.4"/>
<polygon points="4.1,0.0 10.6,0.0 7.9,1.9 6.2,1.9" fill="#0b0b58" class="aa" opacity="0.4"/>
<polygon points="0.4,17.0 6.9,17.0 4.8,15.1 3.1,15.1" fill="#0b0b58" class="aa" opacity="0.4"/>
<polygon points="2.6,1.4 1.5,7.5 3.0,5.1" fill="#0b0b58" class="aa" opacity="0.4"/>
<polygon points="10.8,1.4 9.7,7.5 8.4,4.8" fill="#0b0b58" class="aa" opacity="0.4"/>
<polygon points="1.3,9.5 0.2,15.6 2.7,12.6" fill="#0b0b58" class="aa" opacity="0.4"/>
<polygon points="9.5,9.5 8.4,15.6 7.8,12.2" fill="#0b0b58" class="aa" opacity="0.4"/>
</g>
<g transform="translate(895,512.3)">
<line x1="4.18" y1="3.4" x2="5.5" y2="8.5" stroke="#0b0b58" stroke-width="1.2" opacity="0.32"/>
<line x1="8.38" y1="3.4" x2="5.5" y2="8.5" stroke="#0b0b58" stroke-width="1.2" opacity="0.32"/>
<line x1="2.62" y1="13.6" x2="5.5" y2="8.5" stroke="#0b0b58" stroke-width="1.2" opacity="0.32"/>
<line x1="6.82" y1="13.6" x2="5.5" y2="8.5" stroke="#0b0b58" stroke-width="1.2" opacity="0.32"/>
<line x1="2.812" y1="8.5" x2="8.188" y2="8.5" stroke="#0b0b58" stroke-width="1.8" opacity="0.4"/>
<polygon points="4.1,0.0 10.6,0.0 7.9,1.9 6.2,1.9" fill="#0b0b58" class="aa" opacity="0.4"/>
<polygon points="0.4,17.0 6.9,17.0 4.8,15.1 3.1,15.1" fill="#0b0b58" class="aa" opacity="0.4"/>
<polygon points="2.6,1.4 1.5,7.5 3.0,5.1" fill="#0b0b58" class="aa" opacity="0.4"/>
<polygon points="10.8,1.4 9.7,7.5 8.4,4.8" fill="#0b0b58" class="aa" opacity="0.4"/>
<polygon points="1.3,9.5 0.2,15.6 2.7,12.6" fill="#0b0b58" class="aa" opacity="0.4"/>
<polygon points="9.5,9.5 8.4,15.6 7.8,12.2" fill="#0b0b58" class="aa" opacity="0.4"/>
</g>
<g transform="translate(969.5,512.3)">
<line x1="4.18" y1="3.4" x2="5.5" y2="8.5" stroke="#0b0b58" stroke-width="1.2" opacity="0.8"/>
<line x1="8.38" y1="3.4" x2="5.5" y2="8.5" stroke="#0b0b58" stroke-width="1.2" opacity="0.8"/>
<line x1="2.62" y1="13.6" x2="5.5" y2="8.5" stroke="#0b0b58" stroke-width="1.2" opacity="0.8"/>
<line x1="6.82" y1="13.6" x2="5.5" y2="8.5" stroke="#0b0b58" stroke-width="1.2" opacity="0.8"/>
<line x1="2.812" y1="8.5" x2="8.188" y2="8.5" stroke="#0b0b58" stroke-width="1.8" opacity="1"/>
<polygon points="4.1,0.0 10.6,0.0 7.9,1.9 6.2,1.9" fill="#c8c8f4" class="aa"/>
<polygon points="0.4,17.0 6.9,17.0 4.8,15.1 3.1,15.1" fill="#c8c8f4" class="aa"/>
<polygon points="2.6,1.4 1.5,7.5 3.0,5.1" fill="#c8c8f4" class="aa"/>
<polygon points="10.8,1.4 9.7,7.5 8.4,4.8" fill="#c8c8f4" class="aa"/>
<polygon points="1.3,9.5 0.2,15.6 2.7,12.6" fill="#c8c8f4" class="aa"/>
<polygon points="9.5,9.5 8.4,15.6 7.8,12.2" fill="#c8c8f4" class="aa"/>
</g>
<g transform="translate(958,512.3)">
<line x1="4.18" y1="3.4" x2="5.5" y2="8.5" stroke="#0b0b58" stroke-width="1.2" opacity="0.32"/>
<line x1="8.38" y1="3.4" x2="5.5" y2="8.5" stroke="#0b0b58" stroke-width="1.2" opacity="0.32"/>
<line x1="2.62" y1="13.6" x2="5.5" y2="8.5" stroke="#0b0b58" stroke-width="1.2" opacity="0.32"/>
<line x1="6.82" y1="13.6" x2="5.5" y2="8.5" stroke="#0b0b58" stroke-width="1.2" opacity="0.32"/>
<line x1="2.812" y1="8.5" x2="8.188" y2="8.5" stroke="#0b0b58" stroke-width="1.8" opacity="0.4"/>
<polygon points="4.1,0.0 10.6,0.0 7.9,1.9 6.2,1.9" fill="#0b0b58" class="aa" opacity="0.4"/>
<polygon points="0.4,17.0 6.9,17.0 4.8,15.1 3.1,15.1" fill="#0b0b58" class="aa" opacity="0.4"/>
<polygon points="2.6,1.4 1.5,7.5 3.0,5.1" fill="#0b0b58" class="aa" opacity="0.4"/>
<polygon points="10.8,1.4 9.7,7.5 8.4,4.8" fill="#0b0b58" class="aa" opacity="0.4"/>
<polygon points="1.3,9.5 0.2,15.6 2.7,12.6" fill="#0b0b58" class="aa" opacity="0.4"/>
<polygon points="9.5,9.5 8.4,15.6 7.8,12.2" fill="#0b0b58" class="aa" opacity="0.4"/>
</g>
<g transform="translate(946.5,512.3)">
<line x1="4.18" y1="3.4" x2="5.5" y2="8.5" stroke="#0b0b58" stroke-width="1.2" opacity="0.32"/>
<line x1="8.38" y1="3.4" x2="5.5" y2="8.5" stroke="#0b0b58" stroke-width="1.2" opacity="0.32"/>
<line x1="2.62" y1="13.6" x2="5.5" y2="8.5" stroke="#0b0b58" stroke-width="1.2" opacity="0.32"/>
<line x1="6.82" y1="13.6" x2="5.5" y2="8.5" stroke="#0b0b58" stroke-width="1.2" opacity="0.32"/>
<line x1="2.812" y1="8.5" x2="8.188" y2="8.5" stroke="#0b0b58" stroke-width="1.8" opacity="0.4"/>
<polygon points="4.1,0.0 10.6,0.0 7.9,1.9 6.2,1.9" fill="#0b0b58" class="aa" opacity="0.4"/>
<polygon points="0.4,17.0 6.9,17.0 4.8,15.1 3.1,15.1" fill="#0b0b58" class="aa" opacity="0.4"/>
<polygon points="2.6,1.4 1.5,7.5 3.0,5.1" fill="#0b0b58" class="aa" opacity="0.4"/>
<polygon points="10.8,1.4 9.7,7.5 8.4,4.8" fill="#0b0b58" class="aa" opacity="0.4"/>
<polygon points="1.3,9.5 0.2,15.6 2.7,12.6" fill="#0b0b58" class="aa" opacity="0.4"/>
<polygon points="9.5,9.5 8.4,15.6 7.8,12.2" fill="#0b0b58" class="aa" opacity="0.4"/>
</g>
<g transform="translate(935,512.3)">
<line x1="4.18" y1="3.4" x2="5.5" y2="8.5" stroke="#0b0b58" stroke-width="1.2" opacity="0.32"/>
<line x1="8.38" y1="3.4" x2="5.5" y2="8.5" stroke="#0b0b58" stroke-width="1.2" opacity="0.32"/>
<line x1="2.62" y1="13.6" x2="5.5" y2="8.5" stroke="#0b0b58" stroke-width="1.2" opacity="0.32"/>
<line x1="6.82" y1="13.6" x2="5.5" y2="8.5" stroke="#0b0b58" stroke-width="1.2" opacity="0.32"/>
<line x1="2.812" y1="8.5" x2="8.188" y2="8.5" stroke="#0b0b58" stroke-width="1.8" opacity="0.4"/>
<polygon points="4.1,0.0 10.6,0.0 7.9,1.9 6.2,1.9" fill="#0b0b58" class="aa" opacity="0.4"/>
<polygon points="0.4,17.0 6.9,17.0 4.8,15.1 3.1,15.1" fill="#0b0b58" class="aa" opacity="0.4"/>
<polygon points="2.6,1.4 1.5,7.5 3.0,5.1" fill="#0b0b58" class="aa" opacity="0.4"/>
<polygon points="10.8,1.4 9.7,7.5 8.4,4.8" fill="#0b0b58" class="aa" opacity="0.4"/>
<polygon points="1.3,9.5 0.2,15.6 2.7,12.6" fill="#0b0b58" class="aa" opacity="0.4"/>
<polygon points="9.5,9.5 8.4,15.6 7.8,12.2" fill="#0b0b58" class="aa" opacity="0.4"/>
</g>
<g transform="translate(1009.8,512.3)">
<line x1="4.18" y1="3.4" x2="5.5" y2="8.5" stroke="#0b0b58" stroke-width="1.2" opacity="0.8"/>
<line x1="8.38" y1="3.4" x2="5.5" y2="8.5" stroke="#0b0b58" stroke-width="1.2" opacity="0.8"/>
<line x1="2.62" y1="13.6" x2="5.5" y2="8.5" stroke="#0b0b58" stroke-width="1.2" opacity="0.8"/>
<line x1="6.82" y1="13.6" x2="5.5" y2="8.5" stroke="#0b0b58" stroke-width="1.2" opacity="0.8"/>
<line x1="2.812" y1="8.5" x2="8.188" y2="8.5" stroke="#0b0b58" stroke-width="1.8" opacity="1"/>
<polygon points="4.1,0.0 10.6,0.0 7.9,1.9 6.2,1.9" fill="#c8c8f4" class="aa"/>
<polygon points="0.4,17.0 6.9,17.0 4.8,15.1 3.1,15.1" fill="#c8c8f4" class="aa"/>
<polygon points="2.6,1.4 1.5,7.5 3.0,5.1" fill="#c8c8f4" class="aa"/>
<polygon points="10.8,1.4 9.7,7.5 8.4,4.8" fill="#c8c8f4" class="aa"/>
<polygon points="1.3,9.5 0.2,15.6 2.7,12.6" fill="#c8c8f4" class="aa"/>
<polygon points="9.5,9.5 8.4,15.6 7.8,12.2" fill="#c8c8f4" class="aa"/>
</g>
<g transform="translate(998.3,512.3)">
<line x1="4.18" y1="3.4" x2="5.5" y2="8.5" stroke="#0b0b58" stroke-width="1.2" opacity="0.8"/>
<line x1="8.38" y1="3.4" x2="5.5" y2="8.5" stroke="#0b0b58" stroke-width="1.2" opacity="0.8"/>
<line x1="2.62" y1="13.6" x2="5.5" y2="8.5" stroke="#0b0b58" stroke-width="1.2" opacity="0.8"/>
<line x1="6.82" y1="13.6" x2="5.5" y2="8.5" stroke="#0b0b58" stroke-width="1.2" opacity="0.8"/>
<line x1="2.812" y1="8.5" x2="8.188" y2="8.5" stroke="#0b0b58" stroke-width="1.8" opacity="1"/>
<polygon points="4.1,0.0 10.6,0.0 7.9,1.9 6.2,1.9" fill="#c8c8f4" class="aa"/>
<polygon points="0.4,17.0 6.9,17.0 4.8,15.1 3.1,15.1" fill="#c8c8f4" class="aa"/>
<polygon points="2.6,1.4 1.5,7.5 3.0,5.1" fill="#c8c8f4" class="aa"/>
<polygon points="10.8,1.4 9.7,7.5 8.4,4.8" fill="#c8c8f4" class="aa"/>
<polygon points="1.3,9.5 0.2,15.6 2.7,12.6" fill="#c8c8f4" class="aa"/>
<polygon points="9.5,9.5 8.4,15.6 7.8,12.2" fill="#c8c8f4" class="aa"/>
</g>
<g transform="translate(986.8,512.3)">
<line x1="4.18" y1="3.4" x2="5.5" y2="8.5" stroke="#0b0b58" stroke-width="1.2" opacity="0.32"/>
<line x1="8.38" y1="3.4" x2="5.5" y2="8.5" stroke="#0b0b58" stroke-width="1.2" opacity="0.32"/>
<line x1="2.62" y1="13.6" x2="5.5" y2="8.5" stroke="#0b0b58" stroke-width="1.2" opacity="0.32"/>
<line x1="6.82" y1="13.6" x2="5.5" y2="8.5" stroke="#0b0b58" stroke-width="1.2" opacity="0.32"/>
<line x1="2.812" y1="8.5" x2="8.188" y2="8.5" stroke="#0b0b58" stroke-width="1.8" opacity="0.4"/>
<polygon points="4.1,0.0 10.6,0.0 7.9,1.9 6.2,1.9" fill="#0b0b58" class="aa" opacity="0.4"/>
<polygon points="0.4,17.0 6.9,17.0 4.8,15.1 3.1,15.1" fill="#0b0b58" class="aa" opacity="0.4"/>
<polygon points="2.6,1.4 1.5,7.5 3.0,5.1" fill="#0b0b58" class="aa" opacity="0.4"/>
<polygon points="10.8,1.4 9.7,7.5 8.4,4.8" fill="#0b0b58" class="aa" opacity="0.4"/>
<polygon points="1.3,9.5 0.2,15.6 2.7,12.6" fill="#0b0b58" class="aa" opacity="0.4"/>
<polygon points="9.5,9.5 8.4,15.6 7.8,12.2" fill="#0b0b58" class="aa" opacity="0.4"/>
</g>
<circle cx="1009" cy="529.9" r="1" fill="#c8c8a0"/>
<text transform="translate(1003,539.25)" font-size="9" fill="#fff" text-anchor="middle" textLength="35.7" lengthAdjust="spacingAndGlyphs">ENRICH</text>
<rect x="845" y="538.4" width="14" height="82.2" fill="#e01010" />
<rect x="844.4" y="538.4" width="0.8" height="82.2" fill="#8c8c50" />
<rect x="837.5" y="536.5" width="5.5" height="1.8" fill="#fff" />
<text transform="translate(834.5,540.05)" font-size="7.6" fill="#fff" text-anchor="end" >18</text>
<rect x="837.5" y="556.8" width="5.5" height="1.8" fill="#fff" />
<text transform="translate(834.5,560.35)" font-size="7.6" fill="#fff" text-anchor="end" >16</text>
<rect x="837.5" y="577.1" width="5.5" height="1.8" fill="#fff" />
<text transform="translate(834.5,580.65)" font-size="7.6" fill="#fff" text-anchor="end" >14</text>
<rect x="837.5" y="597.4" width="5.5" height="1.8" fill="#fff" />
<text transform="translate(834.5,600.95)" font-size="7.6" fill="#fff" text-anchor="end" >12</text>
<rect x="837.5" y="617.7" width="5.5" height="1.8" fill="#fff" />
<text transform="translate(834.5,621.25)" font-size="7.6" fill="#fff" text-anchor="end" >10</text>
<rect x="840.4" y="541.675" width="2.6" height="1.5" fill="#fff" />
<rect x="840.4" y="546.75" width="2.6" height="1.5" fill="#fff" />
<rect x="840.4" y="551.825" width="2.6" height="1.5" fill="#fff" />
<rect x="840.4" y="561.975" width="2.6" height="1.5" fill="#fff" />
<rect x="840.4" y="567.05" width="2.6" height="1.5" fill="#fff" />
<rect x="840.4" y="572.125" width="2.6" height="1.5" fill="#fff" />
<rect x="840.4" y="582.275" width="2.6" height="1.5" fill="#fff" />
<rect x="840.4" y="587.35" width="2.6" height="1.5" fill="#fff" />
<rect x="840.4" y="592.425" width="2.6" height="1.5" fill="#fff" />
<rect x="840.4" y="602.575" width="2.6" height="1.5" fill="#fff" />
<rect x="840.4" y="607.65" width="2.6" height="1.5" fill="#fff" />
<rect x="840.4" y="612.725" width="2.6" height="1.5" fill="#fff" />
<rect x="845" y="558.5" width="14" height="40" fill="#a03c10" />
<rect x="845" y="598.4" width="14" height="22.4" fill="#10a020" />
<polygon points="845.3,617.4 859.0,614.4 859.0,623.0" fill="#18e8f0" />
<rect x="885" y="538.4" width="14" height="82.2" fill="#10a020" />
<rect x="884.4" y="538.4" width="0.8" height="82.2" fill="#8c8c50" />
<rect x="877.5" y="536.5" width="5.5" height="1.8" fill="#fff" />
<text transform="translate(874.5,540.05)" font-size="7.6" fill="#fff" text-anchor="end" >1</text>
<rect x="877.5" y="544.62" width="5.5" height="1.8" fill="#fff" />
<text transform="translate(874.5,548.17)" font-size="7.6" fill="#fff" text-anchor="end" >0.9</text>
<rect x="877.5" y="552.74" width="5.5" height="1.8" fill="#fff" />
<text transform="translate(874.5,556.29)" font-size="7.6" fill="#fff" text-anchor="end" >0.8</text>
<rect x="877.5" y="560.86" width="5.5" height="1.8" fill="#fff" />
<text transform="translate(874.5,564.41)" font-size="7.6" fill="#fff" text-anchor="end" >0.7</text>
<rect x="877.5" y="568.98" width="5.5" height="1.8" fill="#fff" />
<text transform="translate(874.5,572.53)" font-size="7.6" fill="#fff" text-anchor="end" >0.6</text>
<rect x="877.5" y="577.1" width="5.5" height="1.8" fill="#fff" />
<text transform="translate(874.5,580.65)" font-size="7.6" fill="#fff" text-anchor="end" >0.5</text>
<rect x="877.5" y="585.22" width="5.5" height="1.8" fill="#fff" />
<text transform="translate(874.5,588.77)" font-size="7.6" fill="#fff" text-anchor="end" >0.4</text>
<rect x="877.5" y="593.34" width="5.5" height="1.8" fill="#fff" />
<text transform="translate(874.5,596.89)" font-size="7.6" fill="#fff" text-anchor="end" >0.3</text>
<rect x="877.5" y="601.46" width="5.5" height="1.8" fill="#fff" />
<text transform="translate(874.5,605.01)" font-size="7.6" fill="#fff" text-anchor="end" >0.2</text>
<rect x="877.5" y="609.58" width="5.5" height="1.8" fill="#fff" />
<text transform="translate(874.5,613.13)" font-size="7.6" fill="#fff" text-anchor="end" >0.1</text>
<rect x="877.5" y="617.7" width="5.5" height="1.8" fill="#fff" />
<text transform="translate(874.5,621.25)" font-size="7.6" fill="#fff" text-anchor="end" >0</text>
<rect x="885" y="566" width="14" height="25" fill="#a03c10" />
<rect x="885" y="591" width="14" height="29.5" fill="#e01010" />
<polygon points="885.3,617.4 899.0,614.4 899.0,623.0" fill="#18e8f0" />
<rect x="925" y="538.4" width="14" height="82.2" fill="#707070" />
<rect x="924.4" y="538.4" width="0.8" height="82.2" fill="#8c8c50" />
<rect x="925" y="618.4" width="14" height="2.2" fill="#18d8d8" />
<rect x="917.5" y="536.5" width="5.5" height="1.8" fill="#fff" />
<text transform="translate(916,540.05)" font-size="7.6" fill="#fff" text-anchor="end" >100</text>
<rect x="917.5" y="544.62" width="5.5" height="1.8" fill="#fff" />
<text transform="translate(916,548.17)" font-size="7.6" fill="#fff" text-anchor="end" >90</text>
<rect x="917.5" y="552.74" width="5.5" height="1.8" fill="#fff" />
<text transform="translate(916,556.29)" font-size="7.6" fill="#fff" text-anchor="end" >80</text>
<rect x="917.5" y="560.86" width="5.5" height="1.8" fill="#fff" />
<text transform="translate(916,564.41)" font-size="7.6" fill="#fff" text-anchor="end" >70</text>
<rect x="917.5" y="568.98" width="5.5" height="1.8" fill="#fff" />
<text transform="translate(916,572.53)" font-size="7.6" fill="#fff" text-anchor="end" >60</text>
<rect x="917.5" y="577.1" width="5.5" height="1.8" fill="#fff" />
<text transform="translate(916,580.65)" font-size="7.6" fill="#fff" text-anchor="end" >50</text>
<rect x="917.5" y="585.22" width="5.5" height="1.8" fill="#fff" />
<text transform="translate(916,588.77)" font-size="7.6" fill="#fff" text-anchor="end" >40</text>
<rect x="917.5" y="593.34" width="5.5" height="1.8" fill="#fff" />
<text transform="translate(916,596.89)" font-size="7.6" fill="#fff" text-anchor="end" >30</text>
<rect x="917.5" y="601.46" width="5.5" height="1.8" fill="#fff" />
<text transform="translate(916,605.01)" font-size="7.6" fill="#fff" text-anchor="end" >20</text>
<rect x="917.5" y="609.58" width="5.5" height="1.8" fill="#fff" />
<text transform="translate(916,613.13)" font-size="7.6" fill="#fff" text-anchor="end" >10</text>
<rect x="917.5" y="617.7" width="5.5" height="1.8" fill="#fff" />
<text transform="translate(916,621.25)" font-size="7.6" fill="#fff" text-anchor="end" >0</text>
<rect x="920.4" y="540.66" width="2.6" height="1.5" fill="#fff" />
<rect x="920.4" y="548.78" width="2.6" height="1.5" fill="#fff" />
<rect x="920.4" y="556.9" width="2.6" height="1.5" fill="#fff" />
<rect x="920.4" y="565.02" width="2.6" height="1.5" fill="#fff" />
<rect x="920.4" y="573.14" width="2.6" height="1.5" fill="#fff" />
<rect x="920.4" y="581.26" width="2.6" height="1.5" fill="#fff" />
<rect x="920.4" y="589.38" width="2.6" height="1.5" fill="#fff" />
<rect x="920.4" y="597.5" width="2.6" height="1.5" fill="#fff" />
<rect x="920.4" y="605.62" width="2.6" height="1.5" fill="#fff" />
<rect x="920.4" y="613.74" width="2.6" height="1.5" fill="#fff" />
<rect x="965" y="538.4" width="14" height="82.2" fill="#707070" />
<rect x="964.4" y="538.4" width="0.8" height="82.2" fill="#8c8c50" />
<rect x="965" y="618.4" width="14" height="2.2" fill="#18d8d8" />
<rect x="957.5" y="536.5" width="5.5" height="1.8" fill="#fff" />
<text transform="translate(956,540.05)" font-size="7.6" fill="#fff" text-anchor="end" >18</text>
<rect x="957.5" y="545.52" width="5.5" height="1.8" fill="#fff" />
<text transform="translate(956,549.07)" font-size="7.6" fill="#fff" text-anchor="end" >16</text>
<rect x="957.5" y="554.54" width="5.5" height="1.8" fill="#fff" />
<text transform="translate(956,558.09)" font-size="7.6" fill="#fff" text-anchor="end" >14</text>
<rect x="957.5" y="563.56" width="5.5" height="1.8" fill="#fff" />
<text transform="translate(956,567.11)" font-size="7.6" fill="#fff" text-anchor="end" >12</text>
<rect x="957.5" y="572.58" width="5.5" height="1.8" fill="#fff" />
<text transform="translate(956,576.13)" font-size="7.6" fill="#fff" text-anchor="end" >10</text>
<rect x="957.5" y="581.6" width="5.5" height="1.8" fill="#fff" />
<text transform="translate(956,585.15)" font-size="7.6" fill="#fff" text-anchor="end" >8</text>
<rect x="957.5" y="590.62" width="5.5" height="1.8" fill="#fff" />
<text transform="translate(956,594.17)" font-size="7.6" fill="#fff" text-anchor="end" >6</text>
<rect x="957.5" y="599.64" width="5.5" height="1.8" fill="#fff" />
<text transform="translate(956,603.19)" font-size="7.6" fill="#fff" text-anchor="end" >4</text>
<rect x="957.5" y="608.66" width="5.5" height="1.8" fill="#fff" />
<text transform="translate(956,612.21)" font-size="7.6" fill="#fff" text-anchor="end" >2</text>
<rect x="957.5" y="617.68" width="5.5" height="1.8" fill="#fff" />
<text transform="translate(956,621.23)" font-size="7.6" fill="#fff" text-anchor="end" >0</text>
<rect x="960.4" y="541.11" width="2.6" height="1.5" fill="#fff" />
<rect x="960.4" y="550.13" width="2.6" height="1.5" fill="#fff" />
<rect x="960.4" y="559.15" width="2.6" height="1.5" fill="#fff" />
<rect x="960.4" y="568.17" width="2.6" height="1.5" fill="#fff" />
<rect x="960.4" y="577.19" width="2.6" height="1.5" fill="#fff" />
<rect x="960.4" y="586.21" width="2.6" height="1.5" fill="#fff" />
<rect x="960.4" y="595.23" width="2.6" height="1.5" fill="#fff" />
<rect x="960.4" y="604.25" width="2.6" height="1.5" fill="#fff" />
<rect x="960.4" y="613.27" width="2.6" height="1.5" fill="#fff" />
<text transform="translate(842,632.25)" font-size="9" fill="#fff" text-anchor="middle" textLength="18" lengthAdjust="spacingAndGlyphs">AFR</text>
<text transform="translate(882.7,632.25)" font-size="9" fill="#fff" text-anchor="middle" textLength="28.6" lengthAdjust="spacingAndGlyphs">OXY-V</text>
<text transform="translate(922.8,632.25)" font-size="9" fill="#fff" text-anchor="middle" textLength="20.8" lengthAdjust="spacingAndGlyphs">IDLE</text>
<text transform="translate(962.2,632.25)" font-size="9" fill="#fff" text-anchor="middle" textLength="31.2" lengthAdjust="spacingAndGlyphs">BATT-V</text>
<g transform="translate(849.5,637)">
<line x1="4.18" y1="3.2" x2="5.5" y2="8" stroke="#0b0b58" stroke-width="1.2" opacity="0.8"/>
<line x1="8.38" y1="3.2" x2="5.5" y2="8" stroke="#0b0b58" stroke-width="1.2" opacity="0.8"/>
<line x1="2.62" y1="12.8" x2="5.5" y2="8" stroke="#0b0b58" stroke-width="1.2" opacity="0.8"/>
<line x1="6.82" y1="12.8" x2="5.5" y2="8" stroke="#0b0b58" stroke-width="1.2" opacity="0.8"/>
<line x1="2.812" y1="8" x2="8.188" y2="8" stroke="#0b0b58" stroke-width="1.8" opacity="1"/>
<polygon points="4.1,0.0 10.6,0.0 7.9,1.8 6.2,1.8" fill="#c8c8f4" class="aa"/>
<polygon points="0.4,16.0 6.9,16.0 4.8,14.2 3.1,14.2" fill="#c8c8f4" class="aa"/>
<polygon points="2.6,1.3 1.5,7.0 3.0,4.8" fill="#c8c8f4" class="aa"/>
<polygon points="10.8,1.3 9.7,7.0 8.4,4.5" fill="#c8c8f4" class="aa"/>
<polygon points="1.3,9.0 0.2,14.7 2.7,11.8" fill="#c8c8f4" class="aa"/>
<polygon points="9.5,9.0 8.4,14.7 7.8,11.5" fill="#c8c8f4" class="aa"/>
</g>
<g transform="translate(838,637)">
<line x1="4.18" y1="3.2" x2="5.5" y2="8" stroke="#0b0b58" stroke-width="1.2" opacity="0.8"/>
<line x1="8.38" y1="3.2" x2="5.5" y2="8" stroke="#0b0b58" stroke-width="1.2" opacity="0.8"/>
<line x1="2.62" y1="12.8" x2="5.5" y2="8" stroke="#0b0b58" stroke-width="1.2" opacity="0.8"/>
<line x1="6.82" y1="12.8" x2="5.5" y2="8" stroke="#0b0b58" stroke-width="1.2" opacity="0.8"/>
<line x1="2.812" y1="8" x2="8.188" y2="8" stroke="#0b0b58" stroke-width="1.8" opacity="1"/>
<polygon points="4.1,0.0 10.6,0.0 7.9,1.8 6.2,1.8" fill="#c8c8f4" class="aa"/>
<polygon points="0.4,16.0 6.9,16.0 4.8,14.2 3.1,14.2" fill="#c8c8f4" class="aa"/>
<polygon points="2.6,1.3 1.5,7.0 3.0,4.8" fill="#c8c8f4" class="aa"/>
<polygon points="10.8,1.3 9.7,7.0 8.4,4.5" fill="#c8c8f4" class="aa"/>
<polygon points="1.3,9.0 0.2,14.7 2.7,11.8" fill="#c8c8f4" class="aa"/>
<polygon points="9.5,9.0 8.4,14.7 7.8,11.5" fill="#c8c8f4" class="aa"/>
</g>
<g transform="translate(826.5,637)">
<line x1="4.18" y1="3.2" x2="5.5" y2="8" stroke="#0b0b58" stroke-width="1.2" opacity="0.32"/>
<line x1="8.38" y1="3.2" x2="5.5" y2="8" stroke="#0b0b58" stroke-width="1.2" opacity="0.32"/>
<line x1="2.62" y1="12.8" x2="5.5" y2="8" stroke="#0b0b58" stroke-width="1.2" opacity="0.32"/>
<line x1="6.82" y1="12.8" x2="5.5" y2="8" stroke="#0b0b58" stroke-width="1.2" opacity="0.32"/>
<line x1="2.812" y1="8" x2="8.188" y2="8" stroke="#0b0b58" stroke-width="1.8" opacity="0.4"/>
<polygon points="4.1,0.0 10.6,0.0 7.9,1.8 6.2,1.8" fill="#0b0b58" class="aa" opacity="0.4"/>
<polygon points="0.4,16.0 6.9,16.0 4.8,14.2 3.1,14.2" fill="#0b0b58" class="aa" opacity="0.4"/>
<polygon points="2.6,1.3 1.5,7.0 3.0,4.8" fill="#0b0b58" class="aa" opacity="0.4"/>
<polygon points="10.8,1.3 9.7,7.0 8.4,4.5" fill="#0b0b58" class="aa" opacity="0.4"/>
<polygon points="1.3,9.0 0.2,14.7 2.7,11.8" fill="#0b0b58" class="aa" opacity="0.4"/>
<polygon points="9.5,9.0 8.4,14.7 7.8,11.5" fill="#0b0b58" class="aa" opacity="0.4"/>
</g>
<circle cx="848.7" cy="653.6" r="1" fill="#c8c8a0"/>
<g transform="translate(889.5,637)">
<line x1="4.18" y1="3.2" x2="5.5" y2="8" stroke="#0b0b58" stroke-width="1.2" opacity="0.8"/>
<line x1="8.38" y1="3.2" x2="5.5" y2="8" stroke="#0b0b58" stroke-width="1.2" opacity="0.8"/>
<line x1="2.62" y1="12.8" x2="5.5" y2="8" stroke="#0b0b58" stroke-width="1.2" opacity="0.8"/>
<line x1="6.82" y1="12.8" x2="5.5" y2="8" stroke="#0b0b58" stroke-width="1.2" opacity="0.8"/>
<line x1="2.812" y1="8" x2="8.188" y2="8" stroke="#0b0b58" stroke-width="1.8" opacity="1"/>
<polygon points="4.1,0.0 10.6,0.0 7.9,1.8 6.2,1.8" fill="#c8c8f4" class="aa"/>
<polygon points="0.4,16.0 6.9,16.0 4.8,14.2 3.1,14.2" fill="#c8c8f4" class="aa"/>
<polygon points="2.6,1.3 1.5,7.0 3.0,4.8" fill="#c8c8f4" class="aa"/>
<polygon points="10.8,1.3 9.7,7.0 8.4,4.5" fill="#c8c8f4" class="aa"/>
<polygon points="1.3,9.0 0.2,14.7 2.7,11.8" fill="#c8c8f4" class="aa"/>
<polygon points="9.5,9.0 8.4,14.7 7.8,11.5" fill="#c8c8f4" class="aa"/>
</g>
<g transform="translate(878,637)">
<line x1="4.18" y1="3.2" x2="5.5" y2="8" stroke="#0b0b58" stroke-width="1.2" opacity="0.8"/>
<line x1="8.38" y1="3.2" x2="5.5" y2="8" stroke="#0b0b58" stroke-width="1.2" opacity="0.8"/>
<line x1="2.62" y1="12.8" x2="5.5" y2="8" stroke="#0b0b58" stroke-width="1.2" opacity="0.8"/>
<line x1="6.82" y1="12.8" x2="5.5" y2="8" stroke="#0b0b58" stroke-width="1.2" opacity="0.8"/>
<line x1="2.812" y1="8" x2="8.188" y2="8" stroke="#0b0b58" stroke-width="1.8" opacity="1"/>
<polygon points="4.1,0.0 10.6,0.0 7.9,1.8 6.2,1.8" fill="#c8c8f4" class="aa"/>
<polygon points="0.4,16.0 6.9,16.0 4.8,14.2 3.1,14.2" fill="#c8c8f4" class="aa"/>
<polygon points="2.6,1.3 1.5,7.0 3.0,4.8" fill="#c8c8f4" class="aa"/>
<polygon points="10.8,1.3 9.7,7.0 8.4,4.5" fill="#c8c8f4" class="aa"/>
<polygon points="1.3,9.0 0.2,14.7 2.7,11.8" fill="#c8c8f4" class="aa"/>
<polygon points="9.5,9.0 8.4,14.7 7.8,11.5" fill="#c8c8f4" class="aa"/>
</g>
<g transform="translate(866.5,637)">
<line x1="4.18" y1="3.2" x2="5.5" y2="8" stroke="#0b0b58" stroke-width="1.2" opacity="0.8"/>
<line x1="8.38" y1="3.2" x2="5.5" y2="8" stroke="#0b0b58" stroke-width="1.2" opacity="0.8"/>
<line x1="2.62" y1="12.8" x2="5.5" y2="8" stroke="#0b0b58" stroke-width="1.2" opacity="0.8"/>
<line x1="6.82" y1="12.8" x2="5.5" y2="8" stroke="#0b0b58" stroke-width="1.2" opacity="0.8"/>
<line x1="2.812" y1="8" x2="8.188" y2="8" stroke="#0b0b58" stroke-width="1.8" opacity="1"/>
<polygon points="4.1,0.0 10.6,0.0 7.9,1.8 6.2,1.8" fill="#c8c8f4" class="aa"/>
<polygon points="0.4,16.0 6.9,16.0 4.8,14.2 3.1,14.2" fill="#c8c8f4" class="aa"/>
<polygon points="2.6,1.3 1.5,7.0 3.0,4.8" fill="#c8c8f4" class="aa"/>
<polygon points="10.8,1.3 9.7,7.0 8.4,4.5" fill="#c8c8f4" class="aa"/>
<polygon points="1.3,9.0 0.2,14.7 2.7,11.8" fill="#c8c8f4" class="aa"/>
<polygon points="9.5,9.0 8.4,14.7 7.8,11.5" fill="#c8c8f4" class="aa"/>
</g>
<circle cx="877" cy="653.6" r="1" fill="#c8c8a0"/>
<g transform="translate(929.5,637)">
<line x1="4.18" y1="3.2" x2="5.5" y2="8" stroke="#0b0b58" stroke-width="1.2" opacity="0.8"/>
<line x1="8.38" y1="3.2" x2="5.5" y2="8" stroke="#0b0b58" stroke-width="1.2" opacity="0.8"/>
<line x1="2.62" y1="12.8" x2="5.5" y2="8" stroke="#0b0b58" stroke-width="1.2" opacity="0.8"/>
<line x1="6.82" y1="12.8" x2="5.5" y2="8" stroke="#0b0b58" stroke-width="1.2" opacity="0.8"/>
<line x1="2.812" y1="8" x2="8.188" y2="8" stroke="#0b0b58" stroke-width="1.8" opacity="1"/>
<polygon points="4.1,0.0 10.6,0.0 7.9,1.8 6.2,1.8" fill="#c8c8f4" class="aa"/>
<polygon points="0.4,16.0 6.9,16.0 4.8,14.2 3.1,14.2" fill="#c8c8f4" class="aa"/>
<polygon points="2.6,1.3 1.5,7.0 3.0,4.8" fill="#c8c8f4" class="aa"/>
<polygon points="10.8,1.3 9.7,7.0 8.4,4.5" fill="#c8c8f4" class="aa"/>
<polygon points="1.3,9.0 0.2,14.7 2.7,11.8" fill="#c8c8f4" class="aa"/>
<polygon points="9.5,9.0 8.4,14.7 7.8,11.5" fill="#c8c8f4" class="aa"/>
</g>
<g transform="translate(918,637)">
<line x1="4.18" y1="3.2" x2="5.5" y2="8" stroke="#0b0b58" stroke-width="1.2" opacity="0.8"/>
<line x1="8.38" y1="3.2" x2="5.5" y2="8" stroke="#0b0b58" stroke-width="1.2" opacity="0.8"/>
<line x1="2.62" y1="12.8" x2="5.5" y2="8" stroke="#0b0b58" stroke-width="1.2" opacity="0.8"/>
<line x1="6.82" y1="12.8" x2="5.5" y2="8" stroke="#0b0b58" stroke-width="1.2" opacity="0.8"/>
<line x1="2.812" y1="8" x2="8.188" y2="8" stroke="#0b0b58" stroke-width="1.8" opacity="1"/>
<polygon points="4.1,0.0 10.6,0.0 7.9,1.8 6.2,1.8" fill="#c8c8f4" class="aa"/>
<polygon points="0.4,16.0 6.9,16.0 4.8,14.2 3.1,14.2" fill="#c8c8f4" class="aa"/>
<polygon points="2.6,1.3 1.5,7.0 3.0,4.8" fill="#c8c8f4" class="aa"/>
<polygon points="10.8,1.3 9.7,7.0 8.4,4.5" fill="#c8c8f4" class="aa"/>
<polygon points="1.3,9.0 0.2,14.7 2.7,11.8" fill="#c8c8f4" class="aa"/>
<polygon points="9.5,9.0 8.4,14.7 7.8,11.5" fill="#c8c8f4" class="aa"/>
</g>
<g transform="translate(906.5,637)">
<line x1="4.18" y1="3.2" x2="5.5" y2="8" stroke="#0b0b58" stroke-width="1.2" opacity="0.32"/>
<line x1="8.38" y1="3.2" x2="5.5" y2="8" stroke="#0b0b58" stroke-width="1.2" opacity="0.32"/>
<line x1="2.62" y1="12.8" x2="5.5" y2="8" stroke="#0b0b58" stroke-width="1.2" opacity="0.32"/>
<line x1="6.82" y1="12.8" x2="5.5" y2="8" stroke="#0b0b58" stroke-width="1.2" opacity="0.32"/>
<line x1="2.812" y1="8" x2="8.188" y2="8" stroke="#0b0b58" stroke-width="1.8" opacity="0.4"/>
<polygon points="4.1,0.0 10.6,0.0 7.9,1.8 6.2,1.8" fill="#0b0b58" class="aa" opacity="0.4"/>
<polygon points="0.4,16.0 6.9,16.0 4.8,14.2 3.1,14.2" fill="#0b0b58" class="aa" opacity="0.4"/>
<polygon points="2.6,1.3 1.5,7.0 3.0,4.8" fill="#0b0b58" class="aa" opacity="0.4"/>
<polygon points="10.8,1.3 9.7,7.0 8.4,4.5" fill="#0b0b58" class="aa" opacity="0.4"/>
<polygon points="1.3,9.0 0.2,14.7 2.7,11.8" fill="#0b0b58" class="aa" opacity="0.4"/>
<polygon points="9.5,9.0 8.4,14.7 7.8,11.5" fill="#0b0b58" class="aa" opacity="0.4"/>
</g>
<circle cx="928.7" cy="653.6" r="1" fill="#c8c8a0"/>
<g transform="translate(969.5,637)">
<line x1="4.18" y1="3.2" x2="5.5" y2="8" stroke="#0b0b58" stroke-width="1.2" opacity="0.8"/>
<line x1="8.38" y1="3.2" x2="5.5" y2="8" stroke="#0b0b58" stroke-width="1.2" opacity="0.8"/>
<line x1="2.62" y1="12.8" x2="5.5" y2="8" stroke="#0b0b58" stroke-width="1.2" opacity="0.8"/>
<line x1="6.82" y1="12.8" x2="5.5" y2="8" stroke="#0b0b58" stroke-width="1.2" opacity="0.8"/>
<line x1="2.812" y1="8" x2="8.188" y2="8" stroke="#0b0b58" stroke-width="1.8" opacity="1"/>
<polygon points="4.1,0.0 10.6,0.0 7.9,1.8 6.2,1.8" fill="#c8c8f4" class="aa"/>
<polygon points="0.4,16.0 6.9,16.0 4.8,14.2 3.1,14.2" fill="#c8c8f4" class="aa"/>
<polygon points="2.6,1.3 1.5,7.0 3.0,4.8" fill="#c8c8f4" class="aa"/>
<polygon points="10.8,1.3 9.7,7.0 8.4,4.5" fill="#c8c8f4" class="aa"/>
<polygon points="1.3,9.0 0.2,14.7 2.7,11.8" fill="#c8c8f4" class="aa"/>
<polygon points="9.5,9.0 8.4,14.7 7.8,11.5" fill="#c8c8f4" class="aa"/>
</g>
<g transform="translate(958,637)">
<line x1="4.18" y1="3.2" x2="5.5" y2="8" stroke="#0b0b58" stroke-width="1.2" opacity="0.8"/>
<line x1="8.38" y1="3.2" x2="5.5" y2="8" stroke="#0b0b58" stroke-width="1.2" opacity="0.8"/>
<line x1="2.62" y1="12.8" x2="5.5" y2="8" stroke="#0b0b58" stroke-width="1.2" opacity="0.8"/>
<line x1="6.82" y1="12.8" x2="5.5" y2="8" stroke="#0b0b58" stroke-width="1.2" opacity="0.8"/>
<line x1="2.812" y1="8" x2="8.188" y2="8" stroke="#0b0b58" stroke-width="1.8" opacity="1"/>
<polygon points="4.1,0.0 10.6,0.0 7.9,1.8 6.2,1.8" fill="#c8c8f4" class="aa"/>
<polygon points="0.4,16.0 6.9,16.0 4.8,14.2 3.1,14.2" fill="#c8c8f4" class="aa"/>
<polygon points="2.6,1.3 1.5,7.0 3.0,4.8" fill="#c8c8f4" class="aa"/>
<polygon points="10.8,1.3 9.7,7.0 8.4,4.5" fill="#c8c8f4" class="aa"/>
<polygon points="1.3,9.0 0.2,14.7 2.7,11.8" fill="#c8c8f4" class="aa"/>
<polygon points="9.5,9.0 8.4,14.7 7.8,11.5" fill="#c8c8f4" class="aa"/>
</g>
<g transform="translate(946.5,637)">
<line x1="4.18" y1="3.2" x2="5.5" y2="8" stroke="#0b0b58" stroke-width="1.2" opacity="0.32"/>
<line x1="8.38" y1="3.2" x2="5.5" y2="8" stroke="#0b0b58" stroke-width="1.2" opacity="0.32"/>
<line x1="2.62" y1="12.8" x2="5.5" y2="8" stroke="#0b0b58" stroke-width="1.2" opacity="0.32"/>
<line x1="6.82" y1="12.8" x2="5.5" y2="8" stroke="#0b0b58" stroke-width="1.2" opacity="0.32"/>
<line x1="2.812" y1="8" x2="8.188" y2="8" stroke="#0b0b58" stroke-width="1.8" opacity="0.4"/>
<polygon points="4.1,0.0 10.6,0.0 7.9,1.8 6.2,1.8" fill="#0b0b58" class="aa" opacity="0.4"/>
<polygon points="0.4,16.0 6.9,16.0 4.8,14.2 3.1,14.2" fill="#0b0b58" class="aa" opacity="0.4"/>
<polygon points="2.6,1.3 1.5,7.0 3.0,4.8" fill="#0b0b58" class="aa" opacity="0.4"/>
<polygon points="10.8,1.3 9.7,7.0 8.4,4.5" fill="#0b0b58" class="aa" opacity="0.4"/>
<polygon points="1.3,9.0 0.2,14.7 2.7,11.8" fill="#0b0b58" class="aa" opacity="0.4"/>
<polygon points="9.5,9.0 8.4,14.7 7.8,11.5" fill="#0b0b58" class="aa" opacity="0.4"/>
</g>
<circle cx="968.7" cy="653.6" r="1" fill="#c8c8a0"/>
<g transform="translate(1009.8,543.8)">
<line x1="4.18" y1="3.6" x2="5.5" y2="9" stroke="#0b0b58" stroke-width="1.2" opacity="0.8"/>
<line x1="8.38" y1="3.6" x2="5.5" y2="9" stroke="#0b0b58" stroke-width="1.2" opacity="0.8"/>
<line x1="2.62" y1="14.4" x2="5.5" y2="9" stroke="#0b0b58" stroke-width="1.2" opacity="0.8"/>
<line x1="6.82" y1="14.4" x2="5.5" y2="9" stroke="#0b0b58" stroke-width="1.2" opacity="0.8"/>
<line x1="2.812" y1="9" x2="8.188" y2="9" stroke="#0b0b58" stroke-width="1.8" opacity="1"/>
<polygon points="4.1,0.0 10.6,0.0 7.9,2.0 6.2,2.0" fill="#c8c8f4" class="aa"/>
<polygon points="0.4,18.0 6.9,18.0 4.8,16.0 3.1,16.0" fill="#c8c8f4" class="aa"/>
<polygon points="2.6,1.4 1.5,7.9 3.0,5.4" fill="#c8c8f4" class="aa"/>
<polygon points="10.8,1.4 9.7,7.9 8.4,5.0" fill="#c8c8f4" class="aa"/>
<polygon points="1.3,10.1 0.2,16.6 2.7,13.3" fill="#c8c8f4" class="aa"/>
<polygon points="9.5,10.1 8.4,16.6 7.8,13.0" fill="#c8c8f4" class="aa"/>
</g>
<g transform="translate(998.3,543.8)">
<line x1="4.18" y1="3.6" x2="5.5" y2="9" stroke="#0b0b58" stroke-width="1.2" opacity="0.8"/>
<line x1="8.38" y1="3.6" x2="5.5" y2="9" stroke="#0b0b58" stroke-width="1.2" opacity="0.8"/>
<line x1="2.62" y1="14.4" x2="5.5" y2="9" stroke="#0b0b58" stroke-width="1.2" opacity="0.8"/>
<line x1="6.82" y1="14.4" x2="5.5" y2="9" stroke="#0b0b58" stroke-width="1.2" opacity="0.8"/>
<line x1="2.812" y1="9" x2="8.188" y2="9" stroke="#0b0b58" stroke-width="1.8" opacity="1"/>
<polygon points="4.1,0.0 10.6,0.0 7.9,2.0 6.2,2.0" fill="#c8c8f4" class="aa"/>
<polygon points="0.4,18.0 6.9,18.0 4.8,16.0 3.1,16.0" fill="#c8c8f4" class="aa"/>
<polygon points="2.6,1.4 1.5,7.9 3.0,5.4" fill="#c8c8f4" class="aa"/>
<polygon points="10.8,1.4 9.7,7.9 8.4,5.0" fill="#c8c8f4" class="aa"/>
<polygon points="1.3,10.1 0.2,16.6 2.7,13.3" fill="#c8c8f4" class="aa"/>
<polygon points="9.5,10.1 8.4,16.6 7.8,13.0" fill="#c8c8f4" class="aa"/>
</g>
<g transform="translate(986.8,543.8)">
<line x1="4.18" y1="3.6" x2="5.5" y2="9" stroke="#0b0b58" stroke-width="1.2" opacity="0.32"/>
<line x1="8.38" y1="3.6" x2="5.5" y2="9" stroke="#0b0b58" stroke-width="1.2" opacity="0.32"/>
<line x1="2.62" y1="14.4" x2="5.5" y2="9" stroke="#0b0b58" stroke-width="1.2" opacity="0.32"/>
<line x1="6.82" y1="14.4" x2="5.5" y2="9" stroke="#0b0b58" stroke-width="1.2" opacity="0.32"/>
<line x1="2.812" y1="9" x2="8.188" y2="9" stroke="#0b0b58" stroke-width="1.8" opacity="0.4"/>
<polygon points="4.1,0.0 10.6,0.0 7.9,2.0 6.2,2.0" fill="#0b0b58" class="aa" opacity="0.4"/>
<polygon points="0.4,18.0 6.9,18.0 4.8,16.0 3.1,16.0" fill="#0b0b58" class="aa" opacity="0.4"/>
<polygon points="2.6,1.4 1.5,7.9 3.0,5.4" fill="#0b0b58" class="aa" opacity="0.4"/>
<polygon points="10.8,1.4 9.7,7.9 8.4,5.0" fill="#0b0b58" class="aa" opacity="0.4"/>
<polygon points="1.3,10.1 0.2,16.6 2.7,13.3" fill="#0b0b58" class="aa" opacity="0.4"/>
<polygon points="9.5,10.1 8.4,16.6 7.8,13.0" fill="#0b0b58" class="aa" opacity="0.4"/>
</g>
<circle cx="1009" cy="562.4" r="1" fill="#c8c8a0"/>
<text transform="translate(1003,570.85)" font-size="9" fill="#fff" text-anchor="middle" textLength="27" lengthAdjust="spacingAndGlyphs">BST-V</text>
<g transform="translate(1009.8,576.3)">
<line x1="4.18" y1="3.5" x2="5.5" y2="8.75" stroke="#0b0b58" stroke-width="1.2" opacity="0.8"/>
<line x1="8.38" y1="3.5" x2="5.5" y2="8.75" stroke="#0b0b58" stroke-width="1.2" opacity="0.8"/>
<line x1="2.62" y1="14" x2="5.5" y2="8.75" stroke="#0b0b58" stroke-width="1.2" opacity="0.8"/>
<line x1="6.82" y1="14" x2="5.5" y2="8.75" stroke="#0b0b58" stroke-width="1.2" opacity="0.8"/>
<line x1="2.812" y1="8.75" x2="8.188" y2="8.75" stroke="#0b0b58" stroke-width="1.8" opacity="1"/>
<polygon points="4.1,0.0 10.6,0.0 7.9,1.9 6.2,1.9" fill="#c8c8f4" class="aa"/>
<polygon points="0.4,17.5 6.9,17.5 4.8,15.6 3.1,15.6" fill="#c8c8f4" class="aa"/>
<polygon points="2.6,1.4 1.5,7.7 3.0,5.2" fill="#c8c8f4" class="aa"/>
<polygon points="10.8,1.4 9.7,7.7 8.4,4.9" fill="#c8c8f4" class="aa"/>
<polygon points="1.3,9.8 0.2,16.1 2.7,12.9" fill="#c8c8f4" class="aa"/>
<polygon points="9.5,9.8 8.4,16.1 7.8,12.6" fill="#c8c8f4" class="aa"/>
</g>
<g transform="translate(998.3,576.3)">
<line x1="4.18" y1="3.5" x2="5.5" y2="8.75" stroke="#0b0b58" stroke-width="1.2" opacity="0.8"/>
<line x1="8.38" y1="3.5" x2="5.5" y2="8.75" stroke="#0b0b58" stroke-width="1.2" opacity="0.8"/>
<line x1="2.62" y1="14" x2="5.5" y2="8.75" stroke="#0b0b58" stroke-width="1.2" opacity="0.8"/>
<line x1="6.82" y1="14" x2="5.5" y2="8.75" stroke="#0b0b58" stroke-width="1.2" opacity="0.8"/>
<line x1="2.812" y1="8.75" x2="8.188" y2="8.75" stroke="#0b0b58" stroke-width="1.8" opacity="1"/>
<polygon points="4.1,0.0 10.6,0.0 7.9,1.9 6.2,1.9" fill="#c8c8f4" class="aa"/>
<polygon points="0.4,17.5 6.9,17.5 4.8,15.6 3.1,15.6" fill="#c8c8f4" class="aa"/>
<polygon points="2.6,1.4 1.5,7.7 3.0,5.2" fill="#c8c8f4" class="aa"/>
<polygon points="10.8,1.4 9.7,7.7 8.4,4.9" fill="#c8c8f4" class="aa"/>
<polygon points="1.3,9.8 0.2,16.1 2.7,12.9" fill="#c8c8f4" class="aa"/>
<polygon points="9.5,9.8 8.4,16.1 7.8,12.6" fill="#c8c8f4" class="aa"/>
</g>
<g transform="translate(986.8,576.3)">
<line x1="4.18" y1="3.5" x2="5.5" y2="8.75" stroke="#0b0b58" stroke-width="1.2" opacity="0.32"/>
<line x1="8.38" y1="3.5" x2="5.5" y2="8.75" stroke="#0b0b58" stroke-width="1.2" opacity="0.32"/>
<line x1="2.62" y1="14" x2="5.5" y2="8.75" stroke="#0b0b58" stroke-width="1.2" opacity="0.32"/>
<line x1="6.82" y1="14" x2="5.5" y2="8.75" stroke="#0b0b58" stroke-width="1.2" opacity="0.32"/>
<line x1="2.812" y1="8.75" x2="8.188" y2="8.75" stroke="#0b0b58" stroke-width="1.8" opacity="0.4"/>
<polygon points="4.1,0.0 10.6,0.0 7.9,1.9 6.2,1.9" fill="#0b0b58" class="aa" opacity="0.4"/>
<polygon points="0.4,17.5 6.9,17.5 4.8,15.6 3.1,15.6" fill="#0b0b58" class="aa" opacity="0.4"/>
<polygon points="2.6,1.4 1.5,7.7 3.0,5.2" fill="#0b0b58" class="aa" opacity="0.4"/>
<polygon points="10.8,1.4 9.7,7.7 8.4,4.9" fill="#0b0b58" class="aa" opacity="0.4"/>
<polygon points="1.3,9.8 0.2,16.1 2.7,12.9" fill="#0b0b58" class="aa" opacity="0.4"/>
<polygon points="9.5,9.8 8.4,16.1 7.8,12.6" fill="#0b0b58" class="aa" opacity="0.4"/>
</g>
<circle cx="1009" cy="594.4" r="1" fill="#c8c8a0"/>
<text transform="translate(1003,602.95)" font-size="9" fill="#fff" text-anchor="middle" textLength="30.3" lengthAdjust="spacingAndGlyphs">CLOOP</text>
<g transform="translate(1009.8,607.7)">
<line x1="4.18" y1="3.5" x2="5.5" y2="8.75" stroke="#0b0b58" stroke-width="1.2" opacity="0.8"/>
<line x1="8.38" y1="3.5" x2="5.5" y2="8.75" stroke="#0b0b58" stroke-width="1.2" opacity="0.8"/>
<line x1="2.62" y1="14" x2="5.5" y2="8.75" stroke="#0b0b58" stroke-width="1.2" opacity="0.8"/>
<line x1="6.82" y1="14" x2="5.5" y2="8.75" stroke="#0b0b58" stroke-width="1.2" opacity="0.8"/>
<line x1="2.812" y1="8.75" x2="8.188" y2="8.75" stroke="#c8c8f4" stroke-width="2" />
<polygon points="4.1,0.0 10.6,0.0 7.9,1.9 6.2,1.9" fill="#c8c8f4" class="aa"/>
<polygon points="0.4,17.5 6.9,17.5 4.8,15.6 3.1,15.6" fill="#0b0b58" class="aa" opacity="1"/>
<polygon points="2.6,1.4 1.5,7.7 3.0,5.2" fill="#c8c8f4" class="aa"/>
<polygon points="10.8,1.4 9.7,7.7 8.4,4.9" fill="#0b0b58" class="aa" opacity="1"/>
<polygon points="1.3,9.8 0.2,16.1 2.7,12.9" fill="#c8c8f4" class="aa"/>
<polygon points="9.5,9.8 8.4,16.1 7.8,12.6" fill="#0b0b58" class="aa" opacity="1"/>
</g>
<g transform="translate(998.3,607.7)">
<line x1="4.18" y1="3.5" x2="5.5" y2="8.75" stroke="#0b0b58" stroke-width="1.2" opacity="0.8"/>
<line x1="8.38" y1="3.5" x2="5.5" y2="8.75" stroke="#0b0b58" stroke-width="1.2" opacity="0.8"/>
<line x1="2.62" y1="14" x2="5.5" y2="8.75" stroke="#0b0b58" stroke-width="1.2" opacity="0.8"/>
<line x1="6.82" y1="14" x2="5.5" y2="8.75" stroke="#0b0b58" stroke-width="1.2" opacity="0.8"/>
<line x1="2.812" y1="8.75" x2="8.188" y2="8.75" stroke="#c8c8f4" stroke-width="2" />
<polygon points="4.1,0.0 10.6,0.0 7.9,1.9 6.2,1.9" fill="#c8c8f4" class="aa"/>
<polygon points="0.4,17.5 6.9,17.5 4.8,15.6 3.1,15.6" fill="#0b0b58" class="aa" opacity="1"/>
<polygon points="2.6,1.4 1.5,7.7 3.0,5.2" fill="#c8c8f4" class="aa"/>
<polygon points="10.8,1.4 9.7,7.7 8.4,4.9" fill="#0b0b58" class="aa" opacity="1"/>
<polygon points="1.3,9.8 0.2,16.1 2.7,12.9" fill="#c8c8f4" class="aa"/>
<polygon points="9.5,9.8 8.4,16.1 7.8,12.6" fill="#0b0b58" class="aa" opacity="1"/>
</g>
<g transform="translate(986.8,607.7)">
<line x1="4.18" y1="3.5" x2="5.5" y2="8.75" stroke="#0b0b58" stroke-width="1.2" opacity="0.8"/>
<line x1="8.38" y1="3.5" x2="5.5" y2="8.75" stroke="#0b0b58" stroke-width="1.2" opacity="0.8"/>
<line x1="2.62" y1="14" x2="5.5" y2="8.75" stroke="#0b0b58" stroke-width="1.2" opacity="0.8"/>
<line x1="6.82" y1="14" x2="5.5" y2="8.75" stroke="#0b0b58" stroke-width="1.2" opacity="0.8"/>
<line x1="2.812" y1="8.75" x2="8.188" y2="8.75" stroke="#0b0b58" stroke-width="1.8" opacity="1"/>
<polygon points="4.1,0.0 10.6,0.0 7.9,1.9 6.2,1.9" fill="#c8c8f4" class="aa"/>
<polygon points="0.4,17.5 6.9,17.5 4.8,15.6 3.1,15.6" fill="#c8c8f4" class="aa"/>
<polygon points="2.6,1.4 1.5,7.7 3.0,5.2" fill="#c8c8f4" class="aa"/>
<polygon points="10.8,1.4 9.7,7.7 8.4,4.9" fill="#c8c8f4" class="aa"/>
<polygon points="1.3,9.8 0.2,16.1 2.7,12.9" fill="#c8c8f4" class="aa"/>
<polygon points="9.5,9.8 8.4,16.1 7.8,12.6" fill="#c8c8f4" class="aa"/>
</g>
<text transform="translate(1003,634.75)" font-size="9" fill="#fff" text-anchor="middle" textLength="28.6" lengthAdjust="spacingAndGlyphs">NOISE</text>
<g transform="translate(1009.8,640)">
<line x1="4.18" y1="3.5" x2="5.5" y2="8.75" stroke="#0b0b58" stroke-width="1.2" opacity="0.8"/>
<line x1="8.38" y1="3.5" x2="5.5" y2="8.75" stroke="#0b0b58" stroke-width="1.2" opacity="0.8"/>
<line x1="2.62" y1="14" x2="5.5" y2="8.75" stroke="#0b0b58" stroke-width="1.2" opacity="0.8"/>
<line x1="6.82" y1="14" x2="5.5" y2="8.75" stroke="#0b0b58" stroke-width="1.2" opacity="0.8"/>
<line x1="2.812" y1="8.75" x2="8.188" y2="8.75" stroke="#0b0b58" stroke-width="1.8" opacity="1"/>
<polygon points="4.1,0.0 10.6,0.0 7.9,1.9 6.2,1.9" fill="#c8c8f4" class="aa"/>
<polygon points="0.4,17.5 6.9,17.5 4.8,15.6 3.1,15.6" fill="#c8c8f4" class="aa"/>
<polygon points="2.6,1.4 1.5,7.7 3.0,5.2" fill="#c8c8f4" class="aa"/>
<polygon points="10.8,1.4 9.7,7.7 8.4,4.9" fill="#c8c8f4" class="aa"/>
<polygon points="1.3,9.8 0.2,16.1 2.7,12.9" fill="#c8c8f4" class="aa"/>
<polygon points="9.5,9.8 8.4,16.1 7.8,12.6" fill="#c8c8f4" class="aa"/>
</g>
<g transform="translate(998.3,640)">
<line x1="4.18" y1="3.5" x2="5.5" y2="8.75" stroke="#0b0b58" stroke-width="1.2" opacity="0.32"/>
<line x1="8.38" y1="3.5" x2="5.5" y2="8.75" stroke="#0b0b58" stroke-width="1.2" opacity="0.32"/>
<line x1="2.62" y1="14" x2="5.5" y2="8.75" stroke="#0b0b58" stroke-width="1.2" opacity="0.32"/>
<line x1="6.82" y1="14" x2="5.5" y2="8.75" stroke="#0b0b58" stroke-width="1.2" opacity="0.32"/>
<line x1="2.812" y1="8.75" x2="8.188" y2="8.75" stroke="#0b0b58" stroke-width="1.8" opacity="0.4"/>
<polygon points="4.1,0.0 10.6,0.0 7.9,1.9 6.2,1.9" fill="#0b0b58" class="aa" opacity="0.4"/>
<polygon points="0.4,17.5 6.9,17.5 4.8,15.6 3.1,15.6" fill="#0b0b58" class="aa" opacity="0.4"/>
<polygon points="2.6,1.4 1.5,7.7 3.0,5.2" fill="#0b0b58" class="aa" opacity="0.4"/>
<polygon points="10.8,1.4 9.7,7.7 8.4,4.9" fill="#0b0b58" class="aa" opacity="0.4"/>
<polygon points="1.3,9.8 0.2,16.1 2.7,12.9" fill="#0b0b58" class="aa" opacity="0.4"/>
<polygon points="9.5,9.8 8.4,16.1 7.8,12.6" fill="#0b0b58" class="aa" opacity="0.4"/>
</g>
<g transform="translate(986.8,640)">
<line x1="4.18" y1="3.5" x2="5.5" y2="8.75" stroke="#0b0b58" stroke-width="1.2" opacity="0.32"/>
<line x1="8.38" y1="3.5" x2="5.5" y2="8.75" stroke="#0b0b58" stroke-width="1.2" opacity="0.32"/>
<line x1="2.62" y1="14" x2="5.5" y2="8.75" stroke="#0b0b58" stroke-width="1.2" opacity="0.32"/>
<line x1="6.82" y1="14" x2="5.5" y2="8.75" stroke="#0b0b58" stroke-width="1.2" opacity="0.32"/>
<line x1="2.812" y1="8.75" x2="8.188" y2="8.75" stroke="#0b0b58" stroke-width="1.8" opacity="0.4"/>
<polygon points="4.1,0.0 10.6,0.0 7.9,1.9 6.2,1.9" fill="#0b0b58" class="aa" opacity="0.4"/>
<polygon points="0.4,17.5 6.9,17.5 4.8,15.6 3.1,15.6" fill="#0b0b58" class="aa" opacity="0.4"/>
<polygon points="2.6,1.4 1.5,7.7 3.0,5.2" fill="#0b0b58" class="aa" opacity="0.4"/>
<polygon points="10.8,1.4 9.7,7.7 8.4,4.9" fill="#0b0b58" class="aa" opacity="0.4"/>
<polygon points="1.3,9.8 0.2,16.1 2.7,12.9" fill="#0b0b58" class="aa" opacity="0.4"/>
<polygon points="9.5,9.8 8.4,16.1 7.8,12.6" fill="#0b0b58" class="aa" opacity="0.4"/>
</g>
<text transform="translate(1003,666.75)" font-size="9" fill="#fff" text-anchor="middle" textLength="31.4" lengthAdjust="spacingAndGlyphs">SYNCX</text>
<g transform="translate(1009.8,672.6)">
<line x1="4.18" y1="3.3" x2="5.5" y2="8.25" stroke="#0b0b58" stroke-width="1.2" opacity="0.8"/>
<line x1="8.38" y1="3.3" x2="5.5" y2="8.25" stroke="#0b0b58" stroke-width="1.2" opacity="0.8"/>
<line x1="2.62" y1="13.2" x2="5.5" y2="8.25" stroke="#0b0b58" stroke-width="1.2" opacity="0.8"/>
<line x1="6.82" y1="13.2" x2="5.5" y2="8.25" stroke="#0b0b58" stroke-width="1.2" opacity="0.8"/>
<line x1="2.812" y1="8.25" x2="8.188" y2="8.25" stroke="#0b0b58" stroke-width="1.8" opacity="1"/>
<polygon points="4.1,0.0 10.6,0.0 7.9,1.8 6.2,1.8" fill="#c8c8f4" class="aa"/>
<polygon points="0.4,16.5 6.9,16.5 4.8,14.7 3.1,14.7" fill="#c8c8f4" class="aa"/>
<polygon points="2.6,1.3 1.5,7.3 3.0,5.0" fill="#c8c8f4" class="aa"/>
<polygon points="10.8,1.3 9.7,7.3 8.4,4.6" fill="#c8c8f4" class="aa"/>
<polygon points="1.3,9.2 0.2,15.2 2.7,12.2" fill="#c8c8f4" class="aa"/>
<polygon points="9.5,9.2 8.4,15.2 7.8,11.9" fill="#c8c8f4" class="aa"/>
</g>
<g transform="translate(998.3,672.6)">
<line x1="4.18" y1="3.3" x2="5.5" y2="8.25" stroke="#0b0b58" stroke-width="1.2" opacity="0.32"/>
<line x1="8.38" y1="3.3" x2="5.5" y2="8.25" stroke="#0b0b58" stroke-width="1.2" opacity="0.32"/>
<line x1="2.62" y1="13.2" x2="5.5" y2="8.25" stroke="#0b0b58" stroke-width="1.2" opacity="0.32"/>
<line x1="6.82" y1="13.2" x2="5.5" y2="8.25" stroke="#0b0b58" stroke-width="1.2" opacity="0.32"/>
<line x1="2.812" y1="8.25" x2="8.188" y2="8.25" stroke="#0b0b58" stroke-width="1.8" opacity="0.4"/>
<polygon points="4.1,0.0 10.6,0.0 7.9,1.8 6.2,1.8" fill="#0b0b58" class="aa" opacity="0.4"/>
<polygon points="0.4,16.5 6.9,16.5 4.8,14.7 3.1,14.7" fill="#0b0b58" class="aa" opacity="0.4"/>
<polygon points="2.6,1.3 1.5,7.3 3.0,5.0" fill="#0b0b58" class="aa" opacity="0.4"/>
<polygon points="10.8,1.3 9.7,7.3 8.4,4.6" fill="#0b0b58" class="aa" opacity="0.4"/>
<polygon points="1.3,9.2 0.2,15.2 2.7,12.2" fill="#0b0b58" class="aa" opacity="0.4"/>
<polygon points="9.5,9.2 8.4,15.2 7.8,11.9" fill="#0b0b58" class="aa" opacity="0.4"/>
</g>
<g transform="translate(986.8,672.6)">
<line x1="4.18" y1="3.3" x2="5.5" y2="8.25" stroke="#0b0b58" stroke-width="1.2" opacity="0.32"/>
<line x1="8.38" y1="3.3" x2="5.5" y2="8.25" stroke="#0b0b58" stroke-width="1.2" opacity="0.32"/>
<line x1="2.62" y1="13.2" x2="5.5" y2="8.25" stroke="#0b0b58" stroke-width="1.2" opacity="0.32"/>
<line x1="6.82" y1="13.2" x2="5.5" y2="8.25" stroke="#0b0b58" stroke-width="1.2" opacity="0.32"/>
<line x1="2.812" y1="8.25" x2="8.188" y2="8.25" stroke="#0b0b58" stroke-width="1.8" opacity="0.4"/>
<polygon points="4.1,0.0 10.6,0.0 7.9,1.8 6.2,1.8" fill="#0b0b58" class="aa" opacity="0.4"/>
<polygon points="0.4,16.5 6.9,16.5 4.8,14.7 3.1,14.7" fill="#0b0b58" class="aa" opacity="0.4"/>
<polygon points="2.6,1.3 1.5,7.3 3.0,5.0" fill="#0b0b58" class="aa" opacity="0.4"/>
<polygon points="10.8,1.3 9.7,7.3 8.4,4.6" fill="#0b0b58" class="aa" opacity="0.4"/>
<polygon points="1.3,9.2 0.2,15.2 2.7,12.2" fill="#0b0b58" class="aa" opacity="0.4"/>
<polygon points="9.5,9.2 8.4,15.2 7.8,11.9" fill="#0b0b58" class="aa" opacity="0.4"/>
</g>
<text transform="translate(1003,699.05)" font-size="9" fill="#fff" text-anchor="middle" textLength="32.6" lengthAdjust="spacingAndGlyphs">SYNCE</text>
<clipPath id="cb"><rect x="823" y="700" width="199" height="12"/></clipPath><g clip-path="url(#cb)">
<g transform="translate(1009.8,703.6)">
<line x1="4.18" y1="3.3" x2="5.5" y2="8.25" stroke="#0b0b58" stroke-width="1.2" opacity="0.8"/>
<line x1="8.38" y1="3.3" x2="5.5" y2="8.25" stroke="#0b0b58" stroke-width="1.2" opacity="0.8"/>
<line x1="2.62" y1="13.2" x2="5.5" y2="8.25" stroke="#0b0b58" stroke-width="1.2" opacity="0.8"/>
<line x1="6.82" y1="13.2" x2="5.5" y2="8.25" stroke="#0b0b58" stroke-width="1.2" opacity="0.8"/>
<line x1="2.812" y1="8.25" x2="8.188" y2="8.25" stroke="#0b0b58" stroke-width="1.8" opacity="1"/>
<polygon points="4.1,0.0 10.6,0.0 7.9,1.8 6.2,1.8" fill="#c8c8f4" class="aa"/>
<polygon points="0.4,16.5 6.9,16.5 4.8,14.7 3.1,14.7" fill="#c8c8f4" class="aa"/>
<polygon points="2.6,1.3 1.5,7.3 3.0,5.0" fill="#c8c8f4" class="aa"/>
<polygon points="10.8,1.3 9.7,7.3 8.4,4.6" fill="#c8c8f4" class="aa"/>
<polygon points="1.3,9.2 0.2,15.2 2.7,12.2" fill="#c8c8f4" class="aa"/>
<polygon points="9.5,9.2 8.4,15.2 7.8,11.9" fill="#c8c8f4" class="aa"/>
</g>
<g transform="translate(998.3,703.6)">
<line x1="4.18" y1="3.3" x2="5.5" y2="8.25" stroke="#0b0b58" stroke-width="1.2" opacity="0.32"/>
<line x1="8.38" y1="3.3" x2="5.5" y2="8.25" stroke="#0b0b58" stroke-width="1.2" opacity="0.32"/>
<line x1="2.62" y1="13.2" x2="5.5" y2="8.25" stroke="#0b0b58" stroke-width="1.2" opacity="0.32"/>
<line x1="6.82" y1="13.2" x2="5.5" y2="8.25" stroke="#0b0b58" stroke-width="1.2" opacity="0.32"/>
<line x1="2.812" y1="8.25" x2="8.188" y2="8.25" stroke="#0b0b58" stroke-width="1.8" opacity="0.4"/>
<polygon points="4.1,0.0 10.6,0.0 7.9,1.8 6.2,1.8" fill="#0b0b58" class="aa" opacity="0.4"/>
<polygon points="0.4,16.5 6.9,16.5 4.8,14.7 3.1,14.7" fill="#0b0b58" class="aa" opacity="0.4"/>
<polygon points="2.6,1.3 1.5,7.3 3.0,5.0" fill="#0b0b58" class="aa" opacity="0.4"/>
<polygon points="10.8,1.3 9.7,7.3 8.4,4.6" fill="#0b0b58" class="aa" opacity="0.4"/>
<polygon points="1.3,9.2 0.2,15.2 2.7,12.2" fill="#0b0b58" class="aa" opacity="0.4"/>
<polygon points="9.5,9.2 8.4,15.2 7.8,11.9" fill="#0b0b58" class="aa" opacity="0.4"/>
</g>
<g transform="translate(986.8,703.6)">
<line x1="4.18" y1="3.3" x2="5.5" y2="8.25" stroke="#0b0b58" stroke-width="1.2" opacity="0.32"/>
<line x1="8.38" y1="3.3" x2="5.5" y2="8.25" stroke="#0b0b58" stroke-width="1.2" opacity="0.32"/>
<line x1="2.62" y1="13.2" x2="5.5" y2="8.25" stroke="#0b0b58" stroke-width="1.2" opacity="0.32"/>
<line x1="6.82" y1="13.2" x2="5.5" y2="8.25" stroke="#0b0b58" stroke-width="1.2" opacity="0.32"/>
<line x1="2.812" y1="8.25" x2="8.188" y2="8.25" stroke="#0b0b58" stroke-width="1.8" opacity="0.4"/>
<polygon points="4.1,0.0 10.6,0.0 7.9,1.8 6.2,1.8" fill="#0b0b58" class="aa" opacity="0.4"/>
<polygon points="0.4,16.5 6.9,16.5 4.8,14.7 3.1,14.7" fill="#0b0b58" class="aa" opacity="0.4"/>
<polygon points="2.6,1.3 1.5,7.3 3.0,5.0" fill="#0b0b58" class="aa" opacity="0.4"/>
<polygon points="10.8,1.3 9.7,7.3 8.4,4.6" fill="#0b0b58" class="aa" opacity="0.4"/>
<polygon points="1.3,9.2 0.2,15.2 2.7,12.2" fill="#0b0b58" class="aa" opacity="0.4"/>
<polygon points="9.5,9.2 8.4,15.2 7.8,11.9" fill="#0b0b58" class="aa" opacity="0.4"/>
</g>
</g>
<text transform="translate(862.9,665.4)" font-size="9.5" fill="#fff" text-anchor="middle" >8</text>
<text transform="translate(875.96,665.4)" font-size="9.5" fill="#fff" text-anchor="middle" >7</text>
<text transform="translate(889.02,665.4)" font-size="9.5" fill="#fff" text-anchor="middle" >6</text>
<text transform="translate(902.08,665.4)" font-size="9.5" fill="#fff" text-anchor="middle" >5</text>
<text transform="translate(915.14,665.4)" font-size="9.5" fill="#fff" text-anchor="middle" >4</text>
<text transform="translate(928.2,665.4)" font-size="9.5" fill="#fff" text-anchor="middle" >3</text>
<text transform="translate(941.26,665.4)" font-size="9.5" fill="#fff" text-anchor="middle" >2</text>
<text transform="translate(954.32,665.4)" font-size="9.5" fill="#fff" text-anchor="middle" >1</text>
<text transform="translate(971.5,680.05)" font-size="9" fill="#fff" text-anchor="middle" textLength="15.5" lengthAdjust="spacingAndGlyphs">A/C</text>
<text transform="translate(971,690.75)" font-size="9" fill="#fff" text-anchor="middle" textLength="8.5" lengthAdjust="spacingAndGlyphs">IN</text>
<text transform="translate(828.4,701)" font-size="9" fill="#fff" text-anchor="start" textLength="25.8" lengthAdjust="spacingAndGlyphs">AuxLS</text>
<rect x="897" y="692" width="10" height="10" fill="#787878" />
<rect x="910" y="692" width="10" height="10" fill="#787878" />
<rect x="923" y="692" width="10" height="10" fill="#787878" />
<rect x="936" y="692" width="10" height="10" fill="#787878" />
<rect x="949" y="692" width="10" height="10" fill="#787878" />
<rect x="966" y="692" width="10" height="10" fill="#787878" />
</svg>
</body></html>
